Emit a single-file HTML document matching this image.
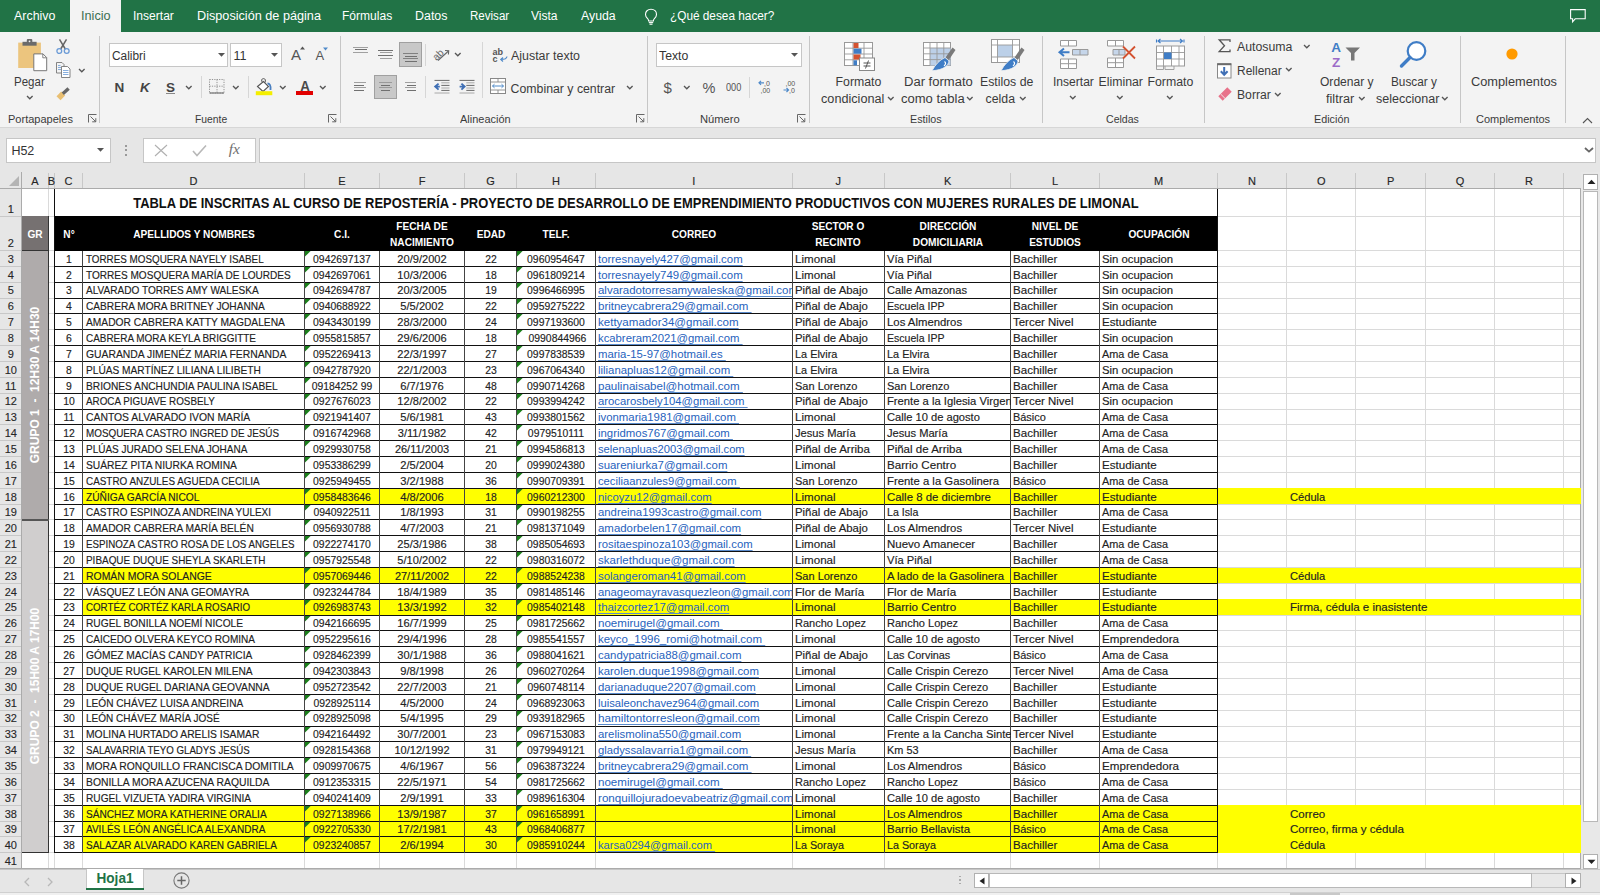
<!DOCTYPE html><html><head><meta charset="utf-8"><style>
*{margin:0;padding:0;box-sizing:border-box}
html,body{width:1600px;height:895px;overflow:hidden;background:#e6e6e6;font-family:"Liberation Sans",sans-serif}
.a{position:absolute}
.t{position:absolute;white-space:pre;line-height:20px;height:20px;margin-top:-15px}
.c11{font-size:11px;color:#111}
.hb{font-size:11px;font-weight:bold;color:#fff}
.ttl{font-size:14.5px;font-weight:bold;color:#111}
.em{font-size:11px;color:#0563c1;text-decoration:underline;text-underline-offset:2px;text-decoration-thickness:1px}
.hdr{font-size:11.5px;color:#444}
.rw{font-size:11.5px;color:#444}
</style></head><body>
<div style="position:absolute;left:0px;top:0px;width:1600px;height:31.5px;background:#217346;"></div>
<div style="position:absolute;left:70px;top:0px;width:51px;height:31.5px;background:#f3f3f3;"></div>
<div style="position:absolute;white-space:pre;line-height:0;font-size:12.3px;color:#ffffff;font-weight:normal;top:16.14px;left:13.5px;transform:scaleX(1.01);transform-origin:0 0;">Archivo</div>
<div style="position:absolute;white-space:pre;line-height:0;font-size:12.3px;color:#ffffff;font-weight:normal;top:16.14px;left:132.5px;transform:scaleX(0.98);transform-origin:0 0;">Insertar</div>
<div style="position:absolute;white-space:pre;line-height:0;font-size:12.3px;color:#ffffff;font-weight:normal;top:16.14px;left:196.5px;transform:scaleX(1.03);transform-origin:0 0;">Disposición de página</div>
<div style="position:absolute;white-space:pre;line-height:0;font-size:12.3px;color:#ffffff;font-weight:normal;top:16.14px;left:342.2px;transform:scaleX(0.98);transform-origin:0 0;">Fórmulas</div>
<div style="position:absolute;white-space:pre;line-height:0;font-size:12.3px;color:#ffffff;font-weight:normal;top:16.14px;left:414.75px;transform:scaleX(1.01);transform-origin:0 0;">Datos</div>
<div style="position:absolute;white-space:pre;line-height:0;font-size:12.3px;color:#ffffff;font-weight:normal;top:16.14px;left:470px;transform:scaleX(0.94);transform-origin:0 0;">Revisar</div>
<div style="position:absolute;white-space:pre;line-height:0;font-size:12.3px;color:#ffffff;font-weight:normal;top:16.14px;left:531.4px;transform:scaleX(0.98);transform-origin:0 0;">Vista</div>
<div style="position:absolute;white-space:pre;line-height:0;font-size:12.3px;color:#ffffff;font-weight:normal;top:16.14px;left:581px;transform:scaleX(1.0);transform-origin:0 0;">Ayuda</div>
<div style="position:absolute;white-space:pre;line-height:0;font-size:12.3px;color:#ffffff;font-weight:normal;top:16.14px;left:670px;transform:scaleX(0.96);transform-origin:0 0;">¿Qué desea hacer?</div>
<div style="position:absolute;white-space:pre;line-height:0;font-size:12.3px;color:#3d6f52;font-weight:normal;top:16.14px;left:80.75px;transform:scaleX(1.03);transform-origin:0 0;">Inicio</div>
<svg style="position:absolute;left:643.5px;top:7.5px;overflow:visible" width="14" height="17" viewBox="0 0 14 17"><path d="M7 1.2 C3.6 1.2 1.5 3.6 1.5 6.4 C1.5 8.6 2.8 9.8 3.9 11 C4.5 11.7 4.6 12.3 4.6 13 L9.4 13 C9.4 12.3 9.5 11.7 10.1 11 C11.2 9.8 12.5 8.6 12.5 6.4 C12.5 3.6 10.4 1.2 7 1.2 Z" fill="none" stroke="#fff" stroke-width="1.1"/><line x1="4.8" y1="14.6" x2="9.2" y2="14.6" stroke="#fff" stroke-width="1.1"/><line x1="5.5" y1="16.2" x2="8.5" y2="16.2" stroke="#fff" stroke-width="1.1"/></svg>
<svg style="position:absolute;left:1570px;top:9px;overflow:visible" width="16" height="14" viewBox="0 0 16 14"><path d="M0.6 0.6 H15.2 V9.8 H5.2 L2.6 12.8 V9.8 H0.6 Z" fill="none" stroke="#fff" stroke-width="1.1"/></svg>
<div style="position:absolute;left:0px;top:31.5px;width:1600px;height:95.5px;background:#f3f3f3;"></div>
<div style="position:absolute;left:0px;top:127px;width:1600px;height:1px;background:#d6d6d6;"></div>
<div style="position:absolute;left:99.25px;top:36px;width:1px;height:86.5px;background:#c6c6c6;"></div>
<div style="position:absolute;left:339.5px;top:36px;width:1px;height:86.5px;background:#c6c6c6;"></div>
<div style="position:absolute;left:647px;top:36px;width:1px;height:86.5px;background:#c6c6c6;"></div>
<div style="position:absolute;left:809.1px;top:36px;width:1px;height:86.5px;background:#c6c6c6;"></div>
<div style="position:absolute;left:1042px;top:36px;width:1px;height:86.5px;background:#c6c6c6;"></div>
<div style="position:absolute;left:1203.9px;top:36px;width:1px;height:86.5px;background:#c6c6c6;"></div>
<div style="position:absolute;left:1460.1px;top:36px;width:1px;height:86.5px;background:#c6c6c6;"></div>
<div style="position:absolute;left:1565px;top:36px;width:1px;height:86.5px;background:#c6c6c6;"></div>
<div style="position:absolute;left:201px;top:76px;width:1px;height:22px;background:#d6d6d6;"></div>
<div style="position:absolute;left:248px;top:76px;width:1px;height:22px;background:#d6d6d6;"></div>
<div style="position:absolute;left:425.1px;top:44px;width:1px;height:22px;background:#d6d6d6;"></div>
<div style="position:absolute;left:425.1px;top:76px;width:1px;height:22px;background:#d6d6d6;"></div>
<div style="position:absolute;left:482px;top:42px;width:1px;height:56px;background:#d6d6d6;"></div>
<div style="position:absolute;left:749.1px;top:77px;width:1px;height:21px;background:#d6d6d6;"></div>
<div style="position:absolute;white-space:pre;line-height:0;font-size:11.2px;color:#3b3b3b;font-weight:normal;top:118.92px;left:8.25px;transform:scaleX(0.985);transform-origin:0 0;">Portapapeles</div>
<div style="position:absolute;white-space:pre;line-height:0;font-size:11.2px;color:#3b3b3b;font-weight:normal;top:118.92px;left:195px;transform:scaleX(0.925);transform-origin:0 0;">Fuente</div>
<div style="position:absolute;white-space:pre;line-height:0;font-size:11.2px;color:#3b3b3b;font-weight:normal;top:118.92px;left:460px;transform:scaleX(0.98);transform-origin:0 0;">Alineación</div>
<div style="position:absolute;white-space:pre;line-height:0;font-size:11.2px;color:#3b3b3b;font-weight:normal;top:118.92px;left:700px;transform:scaleX(1.0);transform-origin:0 0;">Número</div>
<div style="position:absolute;white-space:pre;line-height:0;font-size:11.2px;color:#3b3b3b;font-weight:normal;top:118.92px;left:910px;transform:scaleX(0.96);transform-origin:0 0;">Estilos</div>
<div style="position:absolute;white-space:pre;line-height:0;font-size:11.2px;color:#3b3b3b;font-weight:normal;top:118.92px;left:1106.25px;transform:scaleX(0.945);transform-origin:0 0;">Celdas</div>
<div style="position:absolute;white-space:pre;line-height:0;font-size:11.2px;color:#3b3b3b;font-weight:normal;top:118.92px;left:1313.75px;transform:scaleX(0.965);transform-origin:0 0;">Edición</div>
<div style="position:absolute;white-space:pre;line-height:0;font-size:11.2px;color:#3b3b3b;font-weight:normal;top:118.92px;left:1475.5px;transform:scaleX(0.985);transform-origin:0 0;">Complementos</div>
<svg style="position:absolute;left:87.5px;top:114px;overflow:visible" width="9" height="9" viewBox="0 0 9 9"><path d="M0.5 8.5 V0.5 H8.5" fill="none" stroke="#666" stroke-width="1"/><path d="M2.5 2.5 L7.8 7.8 M4.2 7.8 H7.8 V4.2" fill="none" stroke="#666" stroke-width="1"/></svg>
<svg style="position:absolute;left:328px;top:114px;overflow:visible" width="9" height="9" viewBox="0 0 9 9"><path d="M0.5 8.5 V0.5 H8.5" fill="none" stroke="#666" stroke-width="1"/><path d="M2.5 2.5 L7.8 7.8 M4.2 7.8 H7.8 V4.2" fill="none" stroke="#666" stroke-width="1"/></svg>
<svg style="position:absolute;left:635.6px;top:114px;overflow:visible" width="9" height="9" viewBox="0 0 9 9"><path d="M0.5 8.5 V0.5 H8.5" fill="none" stroke="#666" stroke-width="1"/><path d="M2.5 2.5 L7.8 7.8 M4.2 7.8 H7.8 V4.2" fill="none" stroke="#666" stroke-width="1"/></svg>
<svg style="position:absolute;left:797px;top:114px;overflow:visible" width="9" height="9" viewBox="0 0 9 9"><path d="M0.5 8.5 V0.5 H8.5" fill="none" stroke="#666" stroke-width="1"/><path d="M2.5 2.5 L7.8 7.8 M4.2 7.8 H7.8 V4.2" fill="none" stroke="#666" stroke-width="1"/></svg>
<svg style="position:absolute;left:18px;top:39px;overflow:visible" width="30" height="32" viewBox="0 0 30 32"><rect x="0.2" y="3.6" width="22.7" height="25.4" fill="#ecc57e"/><rect x="4.5" y="2.8" width="14.1" height="3.9" fill="#6b6b6b"/><rect x="8.8" y="0" width="5.5" height="3.8" rx="1" fill="#6b6b6b"/><circle cx="11.55" cy="2.3" r="0.9" fill="#f3f3f3"/><path d="M15.8 14.9 H25 L28.7 18.6 V31.7 H15.8 Z" fill="#fff" stroke="#777" stroke-width="1"/><path d="M24.8 14.9 V18.8 H28.7" fill="none" stroke="#777" stroke-width="0.9"/></svg>
<div style="position:absolute;white-space:pre;line-height:0;font-size:12px;color:#3b3b3b;font-weight:normal;top:82.34px;left:14.4px;transform:scaleX(0.96);transform-origin:0 0;">Pegar</div>
<svg style="position:absolute;left:25.6px;top:95.1px;overflow:visible" width="7.6" height="4.8" viewBox="0 0 7.6 4.8"><polyline points="1,1 3.8,3.8 6.6,1" fill="none" stroke="#555" stroke-width="1.3"/></svg>
<svg style="position:absolute;left:56px;top:38.5px;overflow:visible" width="14" height="15" viewBox="0 0 14 15"><line x1="3.5" y1="0.3" x2="9.3" y2="10" stroke="#666" stroke-width="1.5"/><line x1="10.5" y1="0.3" x2="4.7" y2="10" stroke="#666" stroke-width="1.5"/><circle cx="3.3" cy="12" r="2.4" fill="none" stroke="#6a9ad6" stroke-width="1.3"/><circle cx="10.7" cy="12" r="2.4" fill="none" stroke="#6a9ad6" stroke-width="1.3"/></svg>
<svg style="position:absolute;left:56px;top:62px;overflow:visible" width="15" height="16" viewBox="0 0 15 16"><path d="M0.5 0.5 H6 L8 2.5 V11 H0.5 Z" fill="#f3f3f3" stroke="#777" stroke-width="0.9"/><path d="M2 3.5 H4.5 M2 5.5 H5 M2 7.5 H5" stroke="#6a9ad6" stroke-width="0.8"/><path d="M5.5 4.5 H11.5 L14 7 V15.5 H5.5 Z" fill="#fff" stroke="#777" stroke-width="0.9"/><path d="M7 8.5 H12.5 M7 10.5 H12.5 M7 12.5 H12.5" stroke="#6a9ad6" stroke-width="0.8"/></svg>
<svg style="position:absolute;left:78.2px;top:67.6px;overflow:visible" width="7.6" height="4.8" viewBox="0 0 7.6 4.8"><polyline points="1,1 3.8,3.8 6.6,1" fill="none" stroke="#555" stroke-width="1.3"/></svg>
<svg style="position:absolute;left:56px;top:88px;overflow:visible" width="15" height="13" viewBox="0 0 15 13"><path d="M0.5 8.2 L5.2 3.5 L9.2 7.5 L4.5 12.2 Z" fill="#e9bf72"/><line x1="6.8" y1="5.8" x2="12.6" y2="0.6" stroke="#666" stroke-width="3.4"/></svg>
<div style="position:absolute;left:108.5px;top:42.5px;width:119.9px;height:24px;background:#fff;border:1px solid #c6c6c6"></div>
<div style="position:absolute;white-space:pre;line-height:0;font-size:12.5px;color:#333;font-weight:normal;top:55.77px;left:111.5px;transform:scaleX(0.95);transform-origin:0 0;">Calibri</div>
<svg style="position:absolute;left:217.5px;top:52.5px;overflow:visible" width="8" height="5" viewBox="0 0 8 5"><polygon points="0,0 7,0 3.5,3.8" fill="#555"/></svg>
<div style="position:absolute;left:230.4px;top:42.5px;width:51.2px;height:24px;background:#fff;border:1px solid #c6c6c6"></div>
<div style="position:absolute;white-space:pre;line-height:0;font-size:12.5px;color:#333;font-weight:normal;top:55.77px;left:233.5px;transform:scaleX(1.0);transform-origin:0 0;">11</div>
<svg style="position:absolute;left:271px;top:52.5px;overflow:visible" width="8" height="5" viewBox="0 0 8 5"><polygon points="0,0 7,0 3.5,3.8" fill="#555"/></svg>
<div style="position:absolute;white-space:pre;line-height:0;font-size:15px;color:#555;font-weight:normal;top:55.1px;left:291px;transform:scaleX(1.0);transform-origin:0 0;">A</div>
<svg style="position:absolute;left:299.5px;top:46px;overflow:visible" width="6" height="4" viewBox="0 0 6 4"><polygon points="0,3.5 5,3.5 2.5,0.5" fill="#555"/></svg>
<div style="position:absolute;white-space:pre;line-height:0;font-size:13px;color:#555;font-weight:normal;top:55.8px;left:315.6px;transform:scaleX(1.0);transform-origin:0 0;">A</div>
<svg style="position:absolute;left:322.5px;top:47px;overflow:visible" width="6" height="4" viewBox="0 0 6 4"><polygon points="0,0.5 5,0.5 2.5,3.5" fill="#4f8ac9"/></svg>
<div style="position:absolute;white-space:pre;line-height:0;font-size:13.5px;color:#444;font-weight:bold;top:88.22px;left:114.4px;transform:scaleX(1.0);transform-origin:0 0;">N</div>
<div style="position:absolute;white-space:pre;line-height:0;font-size:13.5px;color:#444;font-weight:bold;top:88.22px;left:140px;transform:scaleX(1.0);transform-origin:0 0;font-style:italic">K</div>
<div style="position:absolute;white-space:pre;line-height:0;font-size:13.5px;color:#444;font-weight:bold;top:88.22px;left:166px;transform:scaleX(1.0);transform-origin:0 0;">S</div>
<div style="position:absolute;left:166px;top:93.2px;width:8.5px;height:1px;background:#888;"></div>
<svg style="position:absolute;left:184.95px;top:84.6px;overflow:visible" width="7.6" height="4.8" viewBox="0 0 7.6 4.8"><polyline points="1,1 3.8,3.8 6.6,1" fill="none" stroke="#555" stroke-width="1.3"/></svg>
<svg style="position:absolute;left:208.5px;top:78.5px;overflow:visible" width="16" height="15" viewBox="0 0 16 15"><path d="M0.5 0.5 H15 V14 H0.5 Z M8 0.5 V14 M0.5 7.2 H15" fill="none" stroke="#888" stroke-width="0.9" stroke-dasharray="1.2 1.2"/><line x1="0.5" y1="14" x2="15" y2="14" stroke="#777" stroke-width="1.2"/></svg>
<svg style="position:absolute;left:231.8px;top:84.6px;overflow:visible" width="7.6" height="4.8" viewBox="0 0 7.6 4.8"><polyline points="1,1 3.8,3.8 6.6,1" fill="none" stroke="#555" stroke-width="1.3"/></svg>
<svg style="position:absolute;left:255px;top:78px;overflow:visible" width="18" height="18" viewBox="0 0 18 18"><path d="M2.5 8.5 L8.5 3.5 L13.5 8.5 L8 13.5 Z" fill="#fff" stroke="#555" stroke-width="1.1"/><path d="M7.5 4.5 C6 2.5 6.5 0.6 8.5 0.6 C10.5 0.6 10.8 2.5 10 4.5" fill="none" stroke="#555" stroke-width="1"/><path d="M12.5 5.5 C14.5 5.5 16 7 15.5 12" fill="none" stroke="#4a7fc0" stroke-width="1.8"/><rect x="0.8" y="13.2" width="16.5" height="4" fill="#f4ee00"/></svg>
<svg style="position:absolute;left:278.7px;top:84.6px;overflow:visible" width="7.6" height="4.8" viewBox="0 0 7.6 4.8"><polyline points="1,1 3.8,3.8 6.6,1" fill="none" stroke="#555" stroke-width="1.3"/></svg>
<div style="position:absolute;white-space:pre;line-height:0;font-size:14px;color:#4a4a4a;font-weight:bold;top:85.65px;left:-695.4px;width:2000px;text-align:center;transform:scaleX(0.95);transform-origin:50% 0;">A</div>
<div style="position:absolute;left:296px;top:91px;width:17px;height:4px;background:#e10000;"></div>
<svg style="position:absolute;left:319.2px;top:84.6px;overflow:visible" width="7.6" height="4.8" viewBox="0 0 7.6 4.8"><polyline points="1,1 3.8,3.8 6.6,1" fill="none" stroke="#555" stroke-width="1.3"/></svg>
<div style="position:absolute;left:353px;top:46.5px;width:15px;height:1px;background:#a0a0a0;"></div>
<div style="position:absolute;left:354.5px;top:49px;width:12px;height:1px;background:#707070;"></div>
<div style="position:absolute;left:353px;top:51.8px;width:15px;height:1px;background:#a0a0a0;"></div>
<div style="position:absolute;left:378px;top:49.9px;width:15px;height:1px;background:#707070;"></div>
<div style="position:absolute;left:380px;top:52.4px;width:11.5px;height:1px;background:#a0a0a0;"></div>
<div style="position:absolute;left:378px;top:54.9px;width:15px;height:1px;background:#707070;"></div>
<div style="position:absolute;left:380px;top:57.5px;width:11.5px;height:1px;background:#a0a0a0;"></div>
<div style="position:absolute;left:399px;top:42.3px;width:23px;height:24.7px;background:#c8c8c8;border:1px solid #a0a0a0"></div>
<div style="position:absolute;left:403px;top:53px;width:15px;height:1px;background:#808080;"></div>
<div style="position:absolute;left:404.5px;top:55.7px;width:12px;height:1px;background:#707070;"></div>
<div style="position:absolute;left:403px;top:58.2px;width:15px;height:1px;background:#808080;"></div>
<div style="position:absolute;left:404.5px;top:60.9px;width:12px;height:1px;background:#707070;"></div>
<svg style="position:absolute;left:433px;top:47px;overflow:visible" width="17" height="14" viewBox="0 0 17 14"><text x="-1" y="11" font-size="10" fill="#666" transform="rotate(-45 5 7)" font-family="Liberation Sans">ab</text><line x1="5" y1="13.5" x2="15.5" y2="4" stroke="#666" stroke-width="1.1"/><polyline points="12,3.5 15.7,3.8 15.4,7.5" fill="none" stroke="#666" stroke-width="1.1"/></svg>
<svg style="position:absolute;left:453.7px;top:51.6px;overflow:visible" width="7.6" height="4.8" viewBox="0 0 7.6 4.8"><polyline points="1,1 3.8,3.8 6.6,1" fill="none" stroke="#555" stroke-width="1.3"/></svg>
<div style="position:absolute;left:354px;top:82.3px;width:12px;height:1px;background:#a0a0a0;"></div>
<div style="position:absolute;left:354px;top:84.9px;width:9.5px;height:1px;background:#707070;"></div>
<div style="position:absolute;left:354px;top:87.4px;width:12px;height:1px;background:#a0a0a0;"></div>
<div style="position:absolute;left:354px;top:89.9px;width:9.5px;height:1px;background:#707070;"></div>
<div style="position:absolute;left:374px;top:75px;width:23px;height:23.75px;background:#c8c8c8;border:1px solid #a0a0a0"></div>
<div style="position:absolute;left:379px;top:82.3px;width:13px;height:1px;background:#9a9a9a;"></div>
<div style="position:absolute;left:381px;top:84.9px;width:9px;height:1px;background:#707070;"></div>
<div style="position:absolute;left:379px;top:87.4px;width:13px;height:1px;background:#9a9a9a;"></div>
<div style="position:absolute;left:381px;top:89.9px;width:9px;height:1px;background:#707070;"></div>
<div style="position:absolute;left:405px;top:82.3px;width:11px;height:1px;background:#a0a0a0;"></div>
<div style="position:absolute;left:407px;top:84.9px;width:9px;height:1px;background:#707070;"></div>
<div style="position:absolute;left:405px;top:87.4px;width:11px;height:1px;background:#a0a0a0;"></div>
<div style="position:absolute;left:407px;top:89.9px;width:9px;height:1px;background:#707070;"></div>
<svg style="position:absolute;left:433.5px;top:80px;overflow:visible" width="16" height="14" viewBox="0 0 16 14"><path d="M0.5 0.4 H15.5" stroke="#6a6a6a" stroke-width="1"/><path d="M7.3 2.8 H15.5 M7.3 8 H15.5" stroke="#a8a8a8" stroke-width="1"/><path d="M7.3 5.4 H15.5 M7.3 10.4 H15.5" stroke="#6a6a6a" stroke-width="1"/><path d="M0.5 13 H15.5" stroke="#a8a8a8" stroke-width="1"/><path d="M5.8 6.6 H2.5 M4.6 3.6 L1.2 6.6 L4.6 9.6" fill="none" stroke="#3f6fb5" stroke-width="1.9"/></svg>
<svg style="position:absolute;left:458.75px;top:80px;overflow:visible" width="16" height="14" viewBox="0 0 16 14"><path d="M0.5 0.4 H15.5" stroke="#6a6a6a" stroke-width="1"/><path d="M7.3 2.8 H15.5 M7.3 8 H15.5" stroke="#a8a8a8" stroke-width="1"/><path d="M7.3 5.4 H15.5 M7.3 10.4 H15.5" stroke="#6a6a6a" stroke-width="1"/><path d="M0.5 13 H15.5" stroke="#a8a8a8" stroke-width="1"/><path d="M0.6 6.6 H4.2 M2.4 3.6 L5.6 6.6 L2.4 9.6" fill="none" stroke="#3f6fb5" stroke-width="1.9"/></svg>
<svg style="position:absolute;left:492.5px;top:47.5px;overflow:visible" width="15" height="14" viewBox="0 0 15 14"><text x="-0.5" y="7" font-size="9" font-weight="bold" fill="#555" font-family="Liberation Sans">ab</text><text x="-0.5" y="13.8" font-size="9" font-weight="bold" fill="#555" font-family="Liberation Sans">c</text><path d="M14 8.5 Q13.5 11.5 8 11.5 M10 9.5 L7.8 11.5 L10 13.5" fill="none" stroke="#4f8ac9" stroke-width="1.2"/></svg>
<div style="position:absolute;white-space:pre;line-height:0;font-size:12.3px;color:#3b3b3b;font-weight:normal;top:56.04px;left:511px;transform:scaleX(1.01);transform-origin:0 0;">Ajustar texto</div>
<svg style="position:absolute;left:490px;top:78px;overflow:visible" width="16" height="16" viewBox="0 0 16 16"><rect x="0.5" y="0.5" width="15" height="15" fill="#fff" stroke="#888" stroke-width="1"/><path d="M0.5 4 H15.5 M0.5 12 H15.5 M8 0.5 V4 M8 12 V15.5" stroke="#888" stroke-width="0.9"/><path d="M2.5 8 H13.5 M4.5 6.2 L2.5 8 L4.5 9.8 M11.5 6.2 L13.5 8 L11.5 9.8" fill="none" stroke="#4f8ac9" stroke-width="1"/></svg>
<div style="position:absolute;white-space:pre;line-height:0;font-size:12.3px;color:#3b3b3b;font-weight:normal;top:88.64px;left:510.6px;transform:scaleX(1.0);transform-origin:0 0;">Combinar y centrar</div>
<svg style="position:absolute;left:626.2px;top:84.6px;overflow:visible" width="7.6" height="4.8" viewBox="0 0 7.6 4.8"><polyline points="1,1 3.8,3.8 6.6,1" fill="none" stroke="#555" stroke-width="1.3"/></svg>
<div style="position:absolute;left:656px;top:42.5px;width:145.6px;height:24px;background:#fff;border:1px solid #c6c6c6"></div>
<div style="position:absolute;white-space:pre;line-height:0;font-size:12.5px;color:#333;font-weight:normal;top:55.77px;left:659.4px;transform:scaleX(0.98);transform-origin:0 0;">Texto</div>
<svg style="position:absolute;left:790.5px;top:52.5px;overflow:visible" width="8" height="5" viewBox="0 0 8 5"><polygon points="0,0 7,0 3.5,3.8" fill="#555"/></svg>
<div style="position:absolute;white-space:pre;line-height:0;font-size:15px;color:#555;font-weight:normal;top:88.2px;left:663.5px;transform:scaleX(1.0);transform-origin:0 0;">$</div>
<svg style="position:absolute;left:683.2px;top:84.6px;overflow:visible" width="7.6" height="4.8" viewBox="0 0 7.6 4.8"><polyline points="1,1 3.8,3.8 6.6,1" fill="none" stroke="#555" stroke-width="1.3"/></svg>
<div style="position:absolute;white-space:pre;line-height:0;font-size:14.5px;color:#555;font-weight:normal;top:88.38px;left:702.5px;transform:scaleX(1.0);transform-origin:0 0;">%</div>
<div style="position:absolute;white-space:pre;line-height:0;font-size:10px;color:#555;font-weight:normal;top:88.44px;left:726px;transform:scaleX(0.92);transform-origin:0 0;">000</div>
<svg style="position:absolute;left:758px;top:79px;overflow:visible" width="14" height="15" viewBox="0 0 14 15"><text x="6" y="6.5" font-size="7" fill="#555" font-family="Liberation Sans">,0</text><text x="2.5" y="14" font-size="7" fill="#555" font-family="Liberation Sans">,00</text><path d="M1 3.8 H6 M3 1.8 L1 3.8 L3 5.8" fill="none" stroke="#4f8ac9" stroke-width="1.2"/></svg>
<svg style="position:absolute;left:783px;top:79px;overflow:visible" width="14" height="15" viewBox="0 0 14 15"><text x="2.5" y="6.5" font-size="7" fill="#555" font-family="Liberation Sans">,00</text><text x="6" y="14" font-size="7" fill="#555" font-family="Liberation Sans">,0</text><path d="M0.5 11 H5.5 M3.5 9 L5.5 11 L3.5 13" fill="none" stroke="#4f8ac9" stroke-width="1.2"/></svg>
<svg style="position:absolute;left:844px;top:42px;overflow:visible" width="32" height="29" viewBox="0 0 32 29"><rect x="0.5" y="0.5" width="28" height="23" fill="#fff" stroke="#999" stroke-width="1"/><path d="M0.5 6.2 H28.5 M0.5 12 H28.5 M0.5 17.8 H28.5 M9 0.5 V23.5 M20 0.5 V23.5" stroke="#999" stroke-width="0.9"/><rect x="9.5" y="1" width="5" height="5" fill="#d35230"/><rect x="9.5" y="6.7" width="8" height="5" fill="#3f7dc6"/><rect x="9.5" y="12.5" width="7" height="5" fill="#d35230"/><rect x="9.5" y="18.3" width="3.5" height="5" fill="#3f7dc6"/><rect x="15.5" y="16" width="15" height="12.5" fill="#fff" stroke="#888" stroke-width="1"/><path d="M19.5 21 H26.5 M19.5 24 H26.5 M21.5 26.5 L24.5 18.5" stroke="#555" stroke-width="1"/></svg>
<div style="position:absolute;white-space:pre;line-height:0;font-size:12.3px;color:#3b3b3b;font-weight:normal;top:82.24px;left:835.6px;transform:scaleX(1.0);transform-origin:0 0;">Formato</div>
<div style="position:absolute;white-space:pre;line-height:0;font-size:12.3px;color:#3b3b3b;font-weight:normal;top:99.14px;left:820.6px;transform:scaleX(1.03);transform-origin:0 0;">condicional</div>
<svg style="position:absolute;left:887.2px;top:95.6px;overflow:visible" width="7.6" height="4.8" viewBox="0 0 7.6 4.8"><polyline points="1,1 3.8,3.8 6.6,1" fill="none" stroke="#555" stroke-width="1.3"/></svg>
<svg style="position:absolute;left:923px;top:42px;overflow:visible" width="32" height="29" viewBox="0 0 32 29"><rect x="0.5" y="0.5" width="27" height="23" fill="#fff" stroke="#999" stroke-width="1"/><rect x="7" y="6" width="20.5" height="17.5" fill="#bcd0e8"/><path d="M0.5 6 H27.5 M0.5 11.8 H27.5 M0.5 17.6 H27.5 M7 0.5 V23.5 M14 0.5 V23.5 M20.8 0.5 V23.5" stroke="#999" stroke-width="0.9"/><path d="M29.5 5.5 L32.5 8 L25.8 18 L22.5 15.5 Z" fill="#7a7a7a"/><path d="M22 15.5 L26 18.8 C25.5 24 20.5 27.8 9 28.8 C12 23 16.5 18 22 15.5 Z" fill="#3f7dc6" stroke="#f3f3f3" stroke-width="0.8"/><path d="M21.5 19.5 C23 20.5 23 22.5 21 24" fill="none" stroke="#fff" stroke-width="1.2"/></svg>
<div style="position:absolute;white-space:pre;line-height:0;font-size:12.3px;color:#3b3b3b;font-weight:normal;top:82.24px;left:903.75px;transform:scaleX(1.06);transform-origin:0 0;">Dar formato</div>
<div style="position:absolute;white-space:pre;line-height:0;font-size:12.3px;color:#3b3b3b;font-weight:normal;top:99.14px;left:900.6px;transform:scaleX(1.06);transform-origin:0 0;">como tabla</div>
<svg style="position:absolute;left:966.2px;top:95.6px;overflow:visible" width="7.6" height="4.8" viewBox="0 0 7.6 4.8"><polyline points="1,1 3.8,3.8 6.6,1" fill="none" stroke="#555" stroke-width="1.3"/></svg>
<svg style="position:absolute;left:991px;top:39px;overflow:visible" width="33" height="32" viewBox="0 0 33 32"><rect x="0.5" y="0.5" width="28" height="23" fill="#fff" stroke="#999" stroke-width="1"/><rect x="6.5" y="6" width="15" height="12" fill="#bcd0e8"/><path d="M0.5 6 H28.5 M0.5 18 H28.5 M6.5 0.5 V23.5 M21.5 0.5 V23.5" stroke="#999" stroke-width="0.9"/><path d="M30.5 8.5 L33.5 11 L26.8 21 L23.5 18.5 Z" fill="#7a7a7a"/><path d="M23 18.5 L27 21.8 C26.5 27 21.5 30.8 10 31.8 C13 26 17.5 21 23 18.5 Z" fill="#3f7dc6" stroke="#f3f3f3" stroke-width="0.8"/><path d="M22.5 22.5 C24 23.5 24 25.5 22 27" fill="none" stroke="#fff" stroke-width="1.2"/></svg>
<div style="position:absolute;white-space:pre;line-height:0;font-size:12.3px;color:#3b3b3b;font-weight:normal;top:82.24px;left:980px;transform:scaleX(1.0);transform-origin:0 0;">Estilos de</div>
<div style="position:absolute;white-space:pre;line-height:0;font-size:12.3px;color:#3b3b3b;font-weight:normal;top:99.14px;left:985.6px;transform:scaleX(1.0);transform-origin:0 0;">celda</div>
<svg style="position:absolute;left:1018.7px;top:95.6px;overflow:visible" width="7.6" height="4.8" viewBox="0 0 7.6 4.8"><polyline points="1,1 3.8,3.8 6.6,1" fill="none" stroke="#555" stroke-width="1.3"/></svg>
<svg style="position:absolute;left:1058px;top:40px;overflow:visible" width="31" height="29" viewBox="0 0 31 29"><path d="M2.5 0.5 H18.5 V6 H2.5 Z M10.5 0.5 V6" fill="#fff" stroke="#999" stroke-width="1"/><path d="M14.5 9.5 H30 V15 H14.5 Z M22 9.5 V15" fill="#c6d6ea" stroke="#999" stroke-width="1"/><path d="M2.5 19 H18.5 V28.5 H2.5 Z M10.5 19 V28.5 M2.5 23.7 H18.5" fill="#fff" stroke="#999" stroke-width="1"/><path d="M11.5 12.2 H2 M6 8.5 L1.5 12.2 L6 16" fill="none" stroke="#3f7dc6" stroke-width="2"/></svg>
<div style="position:absolute;white-space:pre;line-height:0;font-size:12.3px;color:#3b3b3b;font-weight:normal;top:82.24px;left:1053px;transform:scaleX(0.98);transform-origin:0 0;">Insertar</div>
<svg style="position:absolute;left:1069.2px;top:95.1px;overflow:visible" width="7.6" height="4.8" viewBox="0 0 7.6 4.8"><polyline points="1,1 3.8,3.8 6.6,1" fill="none" stroke="#555" stroke-width="1.3"/></svg>
<svg style="position:absolute;left:1107px;top:40px;overflow:visible" width="30" height="29" viewBox="0 0 30 29"><path d="M0.5 0.5 H16.5 V6 H0.5 Z M8.5 0.5 V6" fill="#fff" stroke="#999" stroke-width="1"/><path d="M6 9.5 H18 V15 H6 Z M12 9.5 V15" fill="#c6d6ea" stroke="#999" stroke-width="1"/><path d="M0.5 18 H16.5 V27.5 H0.5 Z M8.5 18 V27.5 M0.5 22.7 H16.5" fill="#fff" stroke="#999" stroke-width="1"/><path d="M16 6.5 L28 18.5 M28 6.5 L16 18.5" stroke="#d35230" stroke-width="1.8"/></svg>
<div style="position:absolute;white-space:pre;line-height:0;font-size:12.3px;color:#3b3b3b;font-weight:normal;top:82.24px;left:1098.5px;transform:scaleX(1.0);transform-origin:0 0;">Eliminar</div>
<svg style="position:absolute;left:1115.95px;top:95.1px;overflow:visible" width="7.6" height="4.8" viewBox="0 0 7.6 4.8"><polyline points="1,1 3.8,3.8 6.6,1" fill="none" stroke="#555" stroke-width="1.3"/></svg>
<svg style="position:absolute;left:1156px;top:39px;overflow:visible" width="30" height="31" viewBox="0 0 30 31"><path d="M0.5 0.5 V3.5 M28 0.5 V3.5 M2 2 H26.5 M4.5 0 L2 2 L4.5 4 M24 0 L26.5 2 L24 4" fill="none" stroke="#3f7dc6" stroke-width="1.1"/><rect x="0.5" y="7" width="28" height="20" fill="#fff" stroke="#999" stroke-width="1"/><path d="M0.5 13.5 H28.5 M0.5 20 H28.5 M7.5 7 V27 M15.5 7 V27 M23 7 V27" stroke="#999" stroke-width="0.9"/><rect x="8" y="13.5" width="7.5" height="6.5" fill="#3f7dc6"/><path d="M0.5 27 V30.5 H7.5 V27 M9 27 V30.5 H18 V27" fill="none" stroke="#999" stroke-width="0.9"/></svg>
<div style="position:absolute;white-space:pre;line-height:0;font-size:12.3px;color:#3b3b3b;font-weight:normal;top:82.24px;left:1147.5px;transform:scaleX(1.0);transform-origin:0 0;">Formato</div>
<svg style="position:absolute;left:1166.2px;top:95.1px;overflow:visible" width="7.6" height="4.8" viewBox="0 0 7.6 4.8"><polyline points="1,1 3.8,3.8 6.6,1" fill="none" stroke="#555" stroke-width="1.3"/></svg>
<svg style="position:absolute;left:1218px;top:39.4px;overflow:visible" width="13" height="13.5" viewBox="0 0 13 13.5"><path d="M12 3 V0.8 H1.2 L6.5 6.7 L1.2 12.6 H12 V10.4" fill="none" stroke="#555" stroke-width="1.3"/></svg>
<div style="position:absolute;white-space:pre;line-height:0;font-size:12.3px;color:#3b3b3b;font-weight:normal;top:47.24px;left:1237px;transform:scaleX(1.0);transform-origin:0 0;">Autosuma</div>
<svg style="position:absolute;left:1303.2px;top:43.6px;overflow:visible" width="7.6" height="4.8" viewBox="0 0 7.6 4.8"><polyline points="1,1 3.8,3.8 6.6,1" fill="none" stroke="#555" stroke-width="1.3"/></svg>
<svg style="position:absolute;left:1217px;top:62.5px;overflow:visible" width="14.5" height="15.5" viewBox="0 0 14.5 15.5"><rect x="0.5" y="1" width="13.5" height="14" fill="#fff" stroke="#888" stroke-width="1"/><rect x="0.2" y="0.2" width="14.1" height="2" fill="#6b6b6b"/><path d="M7.2 4 V12 M3.8 8.3 L7.2 11.8 L10.6 8.3" fill="none" stroke="#3f6fb5" stroke-width="2"/></svg>
<div style="position:absolute;white-space:pre;line-height:0;font-size:12.3px;color:#3b3b3b;font-weight:normal;top:71.04px;left:1237px;transform:scaleX(0.975);transform-origin:0 0;">Rellenar</div>
<svg style="position:absolute;left:1284.95px;top:67.35px;overflow:visible" width="7.6" height="4.8" viewBox="0 0 7.6 4.8"><polyline points="1,1 3.8,3.8 6.6,1" fill="none" stroke="#555" stroke-width="1.3"/></svg>
<svg style="position:absolute;left:1218px;top:86.2px;overflow:visible" width="14" height="14" viewBox="0 0 14 14"><path d="M0.3 10.3 L9.3 1.3 L13.7 5.7 L4.7 14.7 Z" fill="#e8728a"/><path d="M2.6 8 L7 12.4" stroke="#f3f3f3" stroke-width="0.9"/></svg>
<div style="position:absolute;white-space:pre;line-height:0;font-size:12.3px;color:#3b3b3b;font-weight:normal;top:95.14px;left:1237px;transform:scaleX(0.99);transform-origin:0 0;">Borrar</div>
<svg style="position:absolute;left:1273.7px;top:91.6px;overflow:visible" width="7.6" height="4.8" viewBox="0 0 7.6 4.8"><polyline points="1,1 3.8,3.8 6.6,1" fill="none" stroke="#555" stroke-width="1.3"/></svg>
<div style="position:absolute;white-space:pre;line-height:0;font-size:13.5px;color:#3f7dc6;font-weight:bold;top:48.22px;left:1331.3px;transform:scaleX(1.0);transform-origin:0 0;">A</div>
<div style="position:absolute;white-space:pre;line-height:0;font-size:13.5px;color:#9c6bc8;font-weight:bold;top:63.22px;left:1332px;transform:scaleX(1.0);transform-origin:0 0;">Z</div>
<svg style="position:absolute;left:1345px;top:47px;overflow:visible" width="15.5" height="14" viewBox="0 0 15.5 14"><path d="M0.5 0.5 H15 L9.5 6 V13.5 H6 V6 Z" fill="#777"/></svg>
<div style="position:absolute;white-space:pre;line-height:0;font-size:12.3px;color:#3b3b3b;font-weight:normal;top:82.24px;left:1319.5px;transform:scaleX(0.98);transform-origin:0 0;">Ordenar y</div>
<div style="position:absolute;white-space:pre;line-height:0;font-size:12.3px;color:#3b3b3b;font-weight:normal;top:99.14px;left:1325.6px;transform:scaleX(1.03);transform-origin:0 0;">filtrar</div>
<svg style="position:absolute;left:1358.2px;top:95.6px;overflow:visible" width="7.6" height="4.8" viewBox="0 0 7.6 4.8"><polyline points="1,1 3.8,3.8 6.6,1" fill="none" stroke="#555" stroke-width="1.3"/></svg>
<svg style="position:absolute;left:1398.5px;top:40px;overflow:visible" width="29" height="29" viewBox="0 0 29 29"><circle cx="17.5" cy="11" r="8.8" fill="#fff" stroke="#3f7dc6" stroke-width="2.2"/><line x1="11" y1="17.5" x2="2.5" y2="26" stroke="#3f7dc6" stroke-width="3.4" stroke-linecap="round"/></svg>
<div style="position:absolute;white-space:pre;line-height:0;font-size:12.3px;color:#3b3b3b;font-weight:normal;top:82.24px;left:1391px;transform:scaleX(0.96);transform-origin:0 0;">Buscar y</div>
<div style="position:absolute;white-space:pre;line-height:0;font-size:12.3px;color:#3b3b3b;font-weight:normal;top:99.14px;left:1376px;transform:scaleX(1.02);transform-origin:0 0;">seleccionar</div>
<svg style="position:absolute;left:1441.2px;top:95.6px;overflow:visible" width="7.6" height="4.8" viewBox="0 0 7.6 4.8"><polyline points="1,1 3.8,3.8 6.6,1" fill="none" stroke="#555" stroke-width="1.3"/></svg>
<svg style="position:absolute;left:1506px;top:47.5px;overflow:visible" width="12" height="12" viewBox="0 0 12 12"><circle cx="6" cy="6" r="5.6" fill="#ff9a00"/></svg>
<div style="position:absolute;white-space:pre;line-height:0;font-size:12.3px;color:#3b3b3b;font-weight:normal;top:82.14px;left:1470.8px;transform:scaleX(1.04);transform-origin:0 0;">Complementos</div>
<svg style="position:absolute;left:1582px;top:117px;overflow:visible" width="11" height="7" viewBox="0 0 11 7"><polyline points="1,6 5.5,1.5 10,6" fill="none" stroke="#555" stroke-width="1.1"/></svg>
<div style="position:absolute;left:0px;top:128px;width:1600px;height:44px;background:#e6e6e6;"></div>
<div style="position:absolute;left:5.6px;top:137.6px;width:105px;height:25px;background:#fff;border:1px solid #c6c6c6"></div>
<div style="position:absolute;white-space:pre;line-height:0;font-size:12.5px;color:#333;font-weight:normal;top:150.57px;left:11.4px;transform:scaleX(1.0);transform-origin:0 0;">H52</div>
<svg style="position:absolute;left:96.5px;top:148px;overflow:visible" width="8" height="5" viewBox="0 0 8 5"><polygon points="0,0 7,0 3.5,3.8" fill="#555"/></svg>
<div style="position:absolute;left:125.4px;top:144.6px;width:2px;height:2px;background:#999;"></div>
<div style="position:absolute;left:125.4px;top:149.1px;width:2px;height:2px;background:#999;"></div>
<div style="position:absolute;left:125.4px;top:153.6px;width:2px;height:2px;background:#999;"></div>
<div style="position:absolute;left:142.6px;top:137.6px;width:113.4px;height:25px;background:#fff;border:1px solid #c6c6c6"></div>
<svg style="position:absolute;left:154px;top:143.5px;overflow:visible" width="14" height="13" viewBox="0 0 14 13"><path d="M1 1 L13 12 M13 1 L1 12" stroke="#b0b0b0" stroke-width="1.1"/></svg>
<svg style="position:absolute;left:191.5px;top:143.5px;overflow:visible" width="15" height="13" viewBox="0 0 15 13"><polyline points="1,7 5,11.5 14,1.5" fill="none" stroke="#b8b8b8" stroke-width="1.6"/></svg>
<div style="position:absolute;white-space:pre;line-height:0;font-size:15.5px;color:#707070;font-weight:normal;top:149.23px;left:228.8px;transform:scaleX(1.0);transform-origin:0 0;font-family:'Liberation Serif';font-style:italic">fx</div>
<div style="position:absolute;left:258.6px;top:137.6px;width:1337.4px;height:25px;background:#fff;border:1px solid #c6c6c6"></div>
<svg style="position:absolute;left:1583.5px;top:147px;overflow:visible" width="10" height="6" viewBox="0 0 10 6"><polyline points="1,1 5,4.6 9,1" fill="none" stroke="#666" stroke-width="1.8"/></svg>
<div class="a" style="left:21.5px;top:188.5px;width:1559px;height:680.15px;background:#ffffff;"></div>
<div class="a" style="left:0px;top:172px;width:1580.5px;height:16.5px;background:#e6e6e6;"></div>
<div class="a" style="left:0px;top:188.5px;width:21.5px;height:680.15px;background:#e6e6e6;"></div>
<svg class="a" style="left:8px;top:175px" width="12" height="12"><polygon points="11,1 11,11 1,11" fill="#b4b4b4"/></svg>
<div class="a" style="left:21.5px;top:215.9px;width:1559px;height:1px;background:#dadada;"></div>
<div class="a" style="left:21.5px;top:250px;width:1559px;height:1px;background:#dadada;"></div>
<div class="a" style="left:21.5px;top:265.85px;width:1559px;height:1px;background:#dadada;"></div>
<div class="a" style="left:21.5px;top:281.7px;width:1559px;height:1px;background:#dadada;"></div>
<div class="a" style="left:21.5px;top:297.55px;width:1559px;height:1px;background:#dadada;"></div>
<div class="a" style="left:21.5px;top:313.4px;width:1559px;height:1px;background:#dadada;"></div>
<div class="a" style="left:21.5px;top:329.25px;width:1559px;height:1px;background:#dadada;"></div>
<div class="a" style="left:21.5px;top:345.1px;width:1559px;height:1px;background:#dadada;"></div>
<div class="a" style="left:21.5px;top:360.95px;width:1559px;height:1px;background:#dadada;"></div>
<div class="a" style="left:21.5px;top:376.8px;width:1559px;height:1px;background:#dadada;"></div>
<div class="a" style="left:21.5px;top:392.65px;width:1559px;height:1px;background:#dadada;"></div>
<div class="a" style="left:21.5px;top:408.5px;width:1559px;height:1px;background:#dadada;"></div>
<div class="a" style="left:21.5px;top:424.35px;width:1559px;height:1px;background:#dadada;"></div>
<div class="a" style="left:21.5px;top:440.2px;width:1559px;height:1px;background:#dadada;"></div>
<div class="a" style="left:21.5px;top:456.05px;width:1559px;height:1px;background:#dadada;"></div>
<div class="a" style="left:21.5px;top:471.9px;width:1559px;height:1px;background:#dadada;"></div>
<div class="a" style="left:21.5px;top:487.75px;width:1559px;height:1px;background:#dadada;"></div>
<div class="a" style="left:21.5px;top:503.6px;width:1559px;height:1px;background:#dadada;"></div>
<div class="a" style="left:21.5px;top:519.45px;width:1559px;height:1px;background:#dadada;"></div>
<div class="a" style="left:21.5px;top:535.3px;width:1559px;height:1px;background:#dadada;"></div>
<div class="a" style="left:21.5px;top:551.15px;width:1559px;height:1px;background:#dadada;"></div>
<div class="a" style="left:21.5px;top:567px;width:1559px;height:1px;background:#dadada;"></div>
<div class="a" style="left:21.5px;top:582.85px;width:1559px;height:1px;background:#dadada;"></div>
<div class="a" style="left:21.5px;top:598.7px;width:1559px;height:1px;background:#dadada;"></div>
<div class="a" style="left:21.5px;top:614.55px;width:1559px;height:1px;background:#dadada;"></div>
<div class="a" style="left:21.5px;top:630.4px;width:1559px;height:1px;background:#dadada;"></div>
<div class="a" style="left:21.5px;top:646.25px;width:1559px;height:1px;background:#dadada;"></div>
<div class="a" style="left:21.5px;top:662.1px;width:1559px;height:1px;background:#dadada;"></div>
<div class="a" style="left:21.5px;top:677.95px;width:1559px;height:1px;background:#dadada;"></div>
<div class="a" style="left:21.5px;top:693.8px;width:1559px;height:1px;background:#dadada;"></div>
<div class="a" style="left:21.5px;top:709.65px;width:1559px;height:1px;background:#dadada;"></div>
<div class="a" style="left:21.5px;top:725.5px;width:1559px;height:1px;background:#dadada;"></div>
<div class="a" style="left:21.5px;top:741.35px;width:1559px;height:1px;background:#dadada;"></div>
<div class="a" style="left:21.5px;top:757.2px;width:1559px;height:1px;background:#dadada;"></div>
<div class="a" style="left:21.5px;top:773.05px;width:1559px;height:1px;background:#dadada;"></div>
<div class="a" style="left:21.5px;top:788.9px;width:1559px;height:1px;background:#dadada;"></div>
<div class="a" style="left:21.5px;top:804.75px;width:1559px;height:1px;background:#dadada;"></div>
<div class="a" style="left:21.5px;top:820.6px;width:1559px;height:1px;background:#dadada;"></div>
<div class="a" style="left:21.5px;top:836.45px;width:1559px;height:1px;background:#dadada;"></div>
<div class="a" style="left:21.5px;top:852.3px;width:1559px;height:1px;background:#dadada;"></div>
<div class="a" style="left:21.5px;top:868.15px;width:1559px;height:1px;background:#dadada;"></div>
<div class="a" style="left:48px;top:188.5px;width:1px;height:680.15px;background:#dadada;"></div>
<div class="a" style="left:53.9px;top:188.5px;width:1px;height:680.15px;background:#dadada;"></div>
<div class="a" style="left:82.25px;top:216.4px;width:1px;height:652.25px;background:#dadada;"></div>
<div class="a" style="left:303.9px;top:216.4px;width:1px;height:652.25px;background:#dadada;"></div>
<div class="a" style="left:378.9px;top:216.4px;width:1px;height:652.25px;background:#dadada;"></div>
<div class="a" style="left:464.1px;top:216.4px;width:1px;height:652.25px;background:#dadada;"></div>
<div class="a" style="left:516px;top:216.4px;width:1px;height:652.25px;background:#dadada;"></div>
<div class="a" style="left:594.9px;top:216.4px;width:1px;height:652.25px;background:#dadada;"></div>
<div class="a" style="left:791.6px;top:216.4px;width:1px;height:652.25px;background:#dadada;"></div>
<div class="a" style="left:884.1px;top:216.4px;width:1px;height:652.25px;background:#dadada;"></div>
<div class="a" style="left:1010.1px;top:216.4px;width:1px;height:652.25px;background:#dadada;"></div>
<div class="a" style="left:1099.1px;top:216.4px;width:1px;height:652.25px;background:#dadada;"></div>
<div class="a" style="left:1217px;top:188.5px;width:1px;height:680.15px;background:#dadada;"></div>
<div class="a" style="left:1286px;top:188.5px;width:1px;height:680.15px;background:#dadada;"></div>
<div class="a" style="left:1355.4px;top:188.5px;width:1px;height:680.15px;background:#dadada;"></div>
<div class="a" style="left:1425.1px;top:188.5px;width:1px;height:680.15px;background:#dadada;"></div>
<div class="a" style="left:1494.1px;top:188.5px;width:1px;height:680.15px;background:#dadada;"></div>
<div class="a" style="left:1563px;top:188.5px;width:1px;height:680.15px;background:#dadada;"></div>
<div class="a" style="left:21px;top:172.8px;width:1px;height:15.7px;background:#c8c8c8;"></div>
<div class="a" style="left:48px;top:172.8px;width:1px;height:15.7px;background:#c8c8c8;"></div>
<div class="a" style="left:53.9px;top:172.8px;width:1px;height:15.7px;background:#c8c8c8;"></div>
<div class="a" style="left:82.25px;top:172.8px;width:1px;height:15.7px;background:#c8c8c8;"></div>
<div class="a" style="left:303.9px;top:172.8px;width:1px;height:15.7px;background:#c8c8c8;"></div>
<div class="a" style="left:378.9px;top:172.8px;width:1px;height:15.7px;background:#c8c8c8;"></div>
<div class="a" style="left:464.1px;top:172.8px;width:1px;height:15.7px;background:#c8c8c8;"></div>
<div class="a" style="left:516px;top:172.8px;width:1px;height:15.7px;background:#c8c8c8;"></div>
<div class="a" style="left:594.9px;top:172.8px;width:1px;height:15.7px;background:#c8c8c8;"></div>
<div class="a" style="left:791.6px;top:172.8px;width:1px;height:15.7px;background:#c8c8c8;"></div>
<div class="a" style="left:884.1px;top:172.8px;width:1px;height:15.7px;background:#c8c8c8;"></div>
<div class="a" style="left:1010.1px;top:172.8px;width:1px;height:15.7px;background:#c8c8c8;"></div>
<div class="a" style="left:1099.1px;top:172.8px;width:1px;height:15.7px;background:#c8c8c8;"></div>
<div class="a" style="left:1217px;top:172.8px;width:1px;height:15.7px;background:#c8c8c8;"></div>
<div class="a" style="left:1286px;top:172.8px;width:1px;height:15.7px;background:#c8c8c8;"></div>
<div class="a" style="left:1355.4px;top:172.8px;width:1px;height:15.7px;background:#c8c8c8;"></div>
<div class="a" style="left:1425.1px;top:172.8px;width:1px;height:15.7px;background:#c8c8c8;"></div>
<div class="a" style="left:1494.1px;top:172.8px;width:1px;height:15.7px;background:#c8c8c8;"></div>
<div class="a" style="left:1563px;top:172.8px;width:1px;height:15.7px;background:#c8c8c8;"></div>
<div class="a" style="left:0px;top:187.5px;width:1580.5px;height:1px;background:#ababab;"></div>
<div class="a" style="left:0px;top:215.9px;width:21.5px;height:1px;background:#c8c8c8;"></div>
<div class="a" style="left:0px;top:250px;width:21.5px;height:1px;background:#c8c8c8;"></div>
<div class="a" style="left:0px;top:265.85px;width:21.5px;height:1px;background:#c8c8c8;"></div>
<div class="a" style="left:0px;top:281.7px;width:21.5px;height:1px;background:#c8c8c8;"></div>
<div class="a" style="left:0px;top:297.55px;width:21.5px;height:1px;background:#c8c8c8;"></div>
<div class="a" style="left:0px;top:313.4px;width:21.5px;height:1px;background:#c8c8c8;"></div>
<div class="a" style="left:0px;top:329.25px;width:21.5px;height:1px;background:#c8c8c8;"></div>
<div class="a" style="left:0px;top:345.1px;width:21.5px;height:1px;background:#c8c8c8;"></div>
<div class="a" style="left:0px;top:360.95px;width:21.5px;height:1px;background:#c8c8c8;"></div>
<div class="a" style="left:0px;top:376.8px;width:21.5px;height:1px;background:#c8c8c8;"></div>
<div class="a" style="left:0px;top:392.65px;width:21.5px;height:1px;background:#c8c8c8;"></div>
<div class="a" style="left:0px;top:408.5px;width:21.5px;height:1px;background:#c8c8c8;"></div>
<div class="a" style="left:0px;top:424.35px;width:21.5px;height:1px;background:#c8c8c8;"></div>
<div class="a" style="left:0px;top:440.2px;width:21.5px;height:1px;background:#c8c8c8;"></div>
<div class="a" style="left:0px;top:456.05px;width:21.5px;height:1px;background:#c8c8c8;"></div>
<div class="a" style="left:0px;top:471.9px;width:21.5px;height:1px;background:#c8c8c8;"></div>
<div class="a" style="left:0px;top:487.75px;width:21.5px;height:1px;background:#c8c8c8;"></div>
<div class="a" style="left:0px;top:503.6px;width:21.5px;height:1px;background:#c8c8c8;"></div>
<div class="a" style="left:0px;top:519.45px;width:21.5px;height:1px;background:#c8c8c8;"></div>
<div class="a" style="left:0px;top:535.3px;width:21.5px;height:1px;background:#c8c8c8;"></div>
<div class="a" style="left:0px;top:551.15px;width:21.5px;height:1px;background:#c8c8c8;"></div>
<div class="a" style="left:0px;top:567px;width:21.5px;height:1px;background:#c8c8c8;"></div>
<div class="a" style="left:0px;top:582.85px;width:21.5px;height:1px;background:#c8c8c8;"></div>
<div class="a" style="left:0px;top:598.7px;width:21.5px;height:1px;background:#c8c8c8;"></div>
<div class="a" style="left:0px;top:614.55px;width:21.5px;height:1px;background:#c8c8c8;"></div>
<div class="a" style="left:0px;top:630.4px;width:21.5px;height:1px;background:#c8c8c8;"></div>
<div class="a" style="left:0px;top:646.25px;width:21.5px;height:1px;background:#c8c8c8;"></div>
<div class="a" style="left:0px;top:662.1px;width:21.5px;height:1px;background:#c8c8c8;"></div>
<div class="a" style="left:0px;top:677.95px;width:21.5px;height:1px;background:#c8c8c8;"></div>
<div class="a" style="left:0px;top:693.8px;width:21.5px;height:1px;background:#c8c8c8;"></div>
<div class="a" style="left:0px;top:709.65px;width:21.5px;height:1px;background:#c8c8c8;"></div>
<div class="a" style="left:0px;top:725.5px;width:21.5px;height:1px;background:#c8c8c8;"></div>
<div class="a" style="left:0px;top:741.35px;width:21.5px;height:1px;background:#c8c8c8;"></div>
<div class="a" style="left:0px;top:757.2px;width:21.5px;height:1px;background:#c8c8c8;"></div>
<div class="a" style="left:0px;top:773.05px;width:21.5px;height:1px;background:#c8c8c8;"></div>
<div class="a" style="left:0px;top:788.9px;width:21.5px;height:1px;background:#c8c8c8;"></div>
<div class="a" style="left:0px;top:804.75px;width:21.5px;height:1px;background:#c8c8c8;"></div>
<div class="a" style="left:0px;top:820.6px;width:21.5px;height:1px;background:#c8c8c8;"></div>
<div class="a" style="left:0px;top:836.45px;width:21.5px;height:1px;background:#c8c8c8;"></div>
<div class="a" style="left:0px;top:852.3px;width:21.5px;height:1px;background:#c8c8c8;"></div>
<div class="a" style="left:0px;top:868.15px;width:21.5px;height:1px;background:#c8c8c8;"></div>
<div class="a" style="left:21px;top:172px;width:1px;height:696.65px;background:#ababab;"></div>
<div class="a" style="left:0px;top:868.15px;width:1580.5px;height:1px;background:#ababab;"></div>
<div class="a" style="left:1580px;top:188.5px;width:1px;height:680.15px;background:#ababab;"></div>
<div style="position:absolute;white-space:pre;line-height:0;font-size:11px;color:#262626;font-weight:normal;top:180.69px;left:-965px;width:2000px;text-align:center;transform:scaleX(1.0);transform-origin:50% 0;-webkit-text-stroke:0.15px #262626;">A</div>
<div style="position:absolute;white-space:pre;line-height:0;font-size:11px;color:#262626;font-weight:normal;top:180.69px;left:-948.55px;width:2000px;text-align:center;transform:scaleX(1.0);transform-origin:50% 0;-webkit-text-stroke:0.15px #262626;">B</div>
<div style="position:absolute;white-space:pre;line-height:0;font-size:11px;color:#262626;font-weight:normal;top:180.69px;left:-931.42px;width:2000px;text-align:center;transform:scaleX(1.0);transform-origin:50% 0;-webkit-text-stroke:0.15px #262626;">C</div>
<div style="position:absolute;white-space:pre;line-height:0;font-size:11px;color:#262626;font-weight:normal;top:180.69px;left:-806.42px;width:2000px;text-align:center;transform:scaleX(1.0);transform-origin:50% 0;-webkit-text-stroke:0.15px #262626;">D</div>
<div style="position:absolute;white-space:pre;line-height:0;font-size:11px;color:#262626;font-weight:normal;top:180.69px;left:-658.1px;width:2000px;text-align:center;transform:scaleX(1.0);transform-origin:50% 0;-webkit-text-stroke:0.15px #262626;">E</div>
<div style="position:absolute;white-space:pre;line-height:0;font-size:11px;color:#262626;font-weight:normal;top:180.69px;left:-578px;width:2000px;text-align:center;transform:scaleX(1.0);transform-origin:50% 0;-webkit-text-stroke:0.15px #262626;">F</div>
<div style="position:absolute;white-space:pre;line-height:0;font-size:11px;color:#262626;font-weight:normal;top:180.69px;left:-509.45px;width:2000px;text-align:center;transform:scaleX(1.0);transform-origin:50% 0;-webkit-text-stroke:0.15px #262626;">G</div>
<div style="position:absolute;white-space:pre;line-height:0;font-size:11px;color:#262626;font-weight:normal;top:180.69px;left:-444.05px;width:2000px;text-align:center;transform:scaleX(1.0);transform-origin:50% 0;-webkit-text-stroke:0.15px #262626;">H</div>
<div style="position:absolute;white-space:pre;line-height:0;font-size:11px;color:#262626;font-weight:normal;top:180.69px;left:-306.25px;width:2000px;text-align:center;transform:scaleX(1.0);transform-origin:50% 0;-webkit-text-stroke:0.15px #262626;">I</div>
<div style="position:absolute;white-space:pre;line-height:0;font-size:11px;color:#262626;font-weight:normal;top:180.69px;left:-161.65px;width:2000px;text-align:center;transform:scaleX(1.0);transform-origin:50% 0;-webkit-text-stroke:0.15px #262626;">J</div>
<div style="position:absolute;white-space:pre;line-height:0;font-size:11px;color:#262626;font-weight:normal;top:180.69px;left:-52.4px;width:2000px;text-align:center;transform:scaleX(1.0);transform-origin:50% 0;-webkit-text-stroke:0.15px #262626;">K</div>
<div style="position:absolute;white-space:pre;line-height:0;font-size:11px;color:#262626;font-weight:normal;top:180.69px;left:55.1px;width:2000px;text-align:center;transform:scaleX(1.0);transform-origin:50% 0;-webkit-text-stroke:0.15px #262626;">L</div>
<div style="position:absolute;white-space:pre;line-height:0;font-size:11px;color:#262626;font-weight:normal;top:180.69px;left:158.55px;width:2000px;text-align:center;transform:scaleX(1.0);transform-origin:50% 0;-webkit-text-stroke:0.15px #262626;">M</div>
<div style="position:absolute;white-space:pre;line-height:0;font-size:11px;color:#262626;font-weight:normal;top:180.69px;left:252px;width:2000px;text-align:center;transform:scaleX(1.0);transform-origin:50% 0;-webkit-text-stroke:0.15px #262626;">N</div>
<div style="position:absolute;white-space:pre;line-height:0;font-size:11px;color:#262626;font-weight:normal;top:180.69px;left:321.2px;width:2000px;text-align:center;transform:scaleX(1.0);transform-origin:50% 0;-webkit-text-stroke:0.15px #262626;">O</div>
<div style="position:absolute;white-space:pre;line-height:0;font-size:11px;color:#262626;font-weight:normal;top:180.69px;left:390.75px;width:2000px;text-align:center;transform:scaleX(1.0);transform-origin:50% 0;-webkit-text-stroke:0.15px #262626;">P</div>
<div style="position:absolute;white-space:pre;line-height:0;font-size:11px;color:#262626;font-weight:normal;top:180.69px;left:460.1px;width:2000px;text-align:center;transform:scaleX(1.0);transform-origin:50% 0;-webkit-text-stroke:0.15px #262626;">Q</div>
<div style="position:absolute;white-space:pre;line-height:0;font-size:11px;color:#262626;font-weight:normal;top:180.69px;left:529.05px;width:2000px;text-align:center;transform:scaleX(1.0);transform-origin:50% 0;-webkit-text-stroke:0.15px #262626;">R</div>
<div style="position:absolute;white-space:pre;line-height:0;font-size:11px;color:#262626;font-weight:normal;top:208.84px;left:-989.25px;width:2000px;text-align:center;transform:scaleX(1.0);transform-origin:50% 0;-webkit-text-stroke:0.12px #262626;">1</div>
<div style="position:absolute;white-space:pre;line-height:0;font-size:11px;color:#262626;font-weight:normal;top:242.94px;left:-989.25px;width:2000px;text-align:center;transform:scaleX(1.0);transform-origin:50% 0;-webkit-text-stroke:0.12px #262626;">2</div>
<div style="position:absolute;white-space:pre;line-height:0;font-size:11px;color:#262626;font-weight:normal;top:258.79px;left:-989.25px;width:2000px;text-align:center;transform:scaleX(1.0);transform-origin:50% 0;-webkit-text-stroke:0.12px #262626;">3</div>
<div style="position:absolute;white-space:pre;line-height:0;font-size:11px;color:#262626;font-weight:normal;top:274.64px;left:-989.25px;width:2000px;text-align:center;transform:scaleX(1.0);transform-origin:50% 0;-webkit-text-stroke:0.12px #262626;">4</div>
<div style="position:absolute;white-space:pre;line-height:0;font-size:11px;color:#262626;font-weight:normal;top:290.49px;left:-989.25px;width:2000px;text-align:center;transform:scaleX(1.0);transform-origin:50% 0;-webkit-text-stroke:0.12px #262626;">5</div>
<div style="position:absolute;white-space:pre;line-height:0;font-size:11px;color:#262626;font-weight:normal;top:306.34px;left:-989.25px;width:2000px;text-align:center;transform:scaleX(1.0);transform-origin:50% 0;-webkit-text-stroke:0.12px #262626;">6</div>
<div style="position:absolute;white-space:pre;line-height:0;font-size:11px;color:#262626;font-weight:normal;top:322.19px;left:-989.25px;width:2000px;text-align:center;transform:scaleX(1.0);transform-origin:50% 0;-webkit-text-stroke:0.12px #262626;">7</div>
<div style="position:absolute;white-space:pre;line-height:0;font-size:11px;color:#262626;font-weight:normal;top:338.04px;left:-989.25px;width:2000px;text-align:center;transform:scaleX(1.0);transform-origin:50% 0;-webkit-text-stroke:0.12px #262626;">8</div>
<div style="position:absolute;white-space:pre;line-height:0;font-size:11px;color:#262626;font-weight:normal;top:353.89px;left:-989.25px;width:2000px;text-align:center;transform:scaleX(1.0);transform-origin:50% 0;-webkit-text-stroke:0.12px #262626;">9</div>
<div style="position:absolute;white-space:pre;line-height:0;font-size:11px;color:#262626;font-weight:normal;top:369.74px;left:-989.25px;width:2000px;text-align:center;transform:scaleX(1.0);transform-origin:50% 0;-webkit-text-stroke:0.12px #262626;">10</div>
<div style="position:absolute;white-space:pre;line-height:0;font-size:11px;color:#262626;font-weight:normal;top:385.59px;left:-989.25px;width:2000px;text-align:center;transform:scaleX(1.0);transform-origin:50% 0;-webkit-text-stroke:0.12px #262626;">11</div>
<div style="position:absolute;white-space:pre;line-height:0;font-size:11px;color:#262626;font-weight:normal;top:401.44px;left:-989.25px;width:2000px;text-align:center;transform:scaleX(1.0);transform-origin:50% 0;-webkit-text-stroke:0.12px #262626;">12</div>
<div style="position:absolute;white-space:pre;line-height:0;font-size:11px;color:#262626;font-weight:normal;top:417.29px;left:-989.25px;width:2000px;text-align:center;transform:scaleX(1.0);transform-origin:50% 0;-webkit-text-stroke:0.12px #262626;">13</div>
<div style="position:absolute;white-space:pre;line-height:0;font-size:11px;color:#262626;font-weight:normal;top:433.14px;left:-989.25px;width:2000px;text-align:center;transform:scaleX(1.0);transform-origin:50% 0;-webkit-text-stroke:0.12px #262626;">14</div>
<div style="position:absolute;white-space:pre;line-height:0;font-size:11px;color:#262626;font-weight:normal;top:448.99px;left:-989.25px;width:2000px;text-align:center;transform:scaleX(1.0);transform-origin:50% 0;-webkit-text-stroke:0.12px #262626;">15</div>
<div style="position:absolute;white-space:pre;line-height:0;font-size:11px;color:#262626;font-weight:normal;top:464.84px;left:-989.25px;width:2000px;text-align:center;transform:scaleX(1.0);transform-origin:50% 0;-webkit-text-stroke:0.12px #262626;">16</div>
<div style="position:absolute;white-space:pre;line-height:0;font-size:11px;color:#262626;font-weight:normal;top:480.69px;left:-989.25px;width:2000px;text-align:center;transform:scaleX(1.0);transform-origin:50% 0;-webkit-text-stroke:0.12px #262626;">17</div>
<div style="position:absolute;white-space:pre;line-height:0;font-size:11px;color:#262626;font-weight:normal;top:496.54px;left:-989.25px;width:2000px;text-align:center;transform:scaleX(1.0);transform-origin:50% 0;-webkit-text-stroke:0.12px #262626;">18</div>
<div style="position:absolute;white-space:pre;line-height:0;font-size:11px;color:#262626;font-weight:normal;top:512.39px;left:-989.25px;width:2000px;text-align:center;transform:scaleX(1.0);transform-origin:50% 0;-webkit-text-stroke:0.12px #262626;">19</div>
<div style="position:absolute;white-space:pre;line-height:0;font-size:11px;color:#262626;font-weight:normal;top:528.24px;left:-989.25px;width:2000px;text-align:center;transform:scaleX(1.0);transform-origin:50% 0;-webkit-text-stroke:0.12px #262626;">20</div>
<div style="position:absolute;white-space:pre;line-height:0;font-size:11px;color:#262626;font-weight:normal;top:544.09px;left:-989.25px;width:2000px;text-align:center;transform:scaleX(1.0);transform-origin:50% 0;-webkit-text-stroke:0.12px #262626;">21</div>
<div style="position:absolute;white-space:pre;line-height:0;font-size:11px;color:#262626;font-weight:normal;top:559.94px;left:-989.25px;width:2000px;text-align:center;transform:scaleX(1.0);transform-origin:50% 0;-webkit-text-stroke:0.12px #262626;">22</div>
<div style="position:absolute;white-space:pre;line-height:0;font-size:11px;color:#262626;font-weight:normal;top:575.79px;left:-989.25px;width:2000px;text-align:center;transform:scaleX(1.0);transform-origin:50% 0;-webkit-text-stroke:0.12px #262626;">23</div>
<div style="position:absolute;white-space:pre;line-height:0;font-size:11px;color:#262626;font-weight:normal;top:591.64px;left:-989.25px;width:2000px;text-align:center;transform:scaleX(1.0);transform-origin:50% 0;-webkit-text-stroke:0.12px #262626;">24</div>
<div style="position:absolute;white-space:pre;line-height:0;font-size:11px;color:#262626;font-weight:normal;top:607.49px;left:-989.25px;width:2000px;text-align:center;transform:scaleX(1.0);transform-origin:50% 0;-webkit-text-stroke:0.12px #262626;">25</div>
<div style="position:absolute;white-space:pre;line-height:0;font-size:11px;color:#262626;font-weight:normal;top:623.34px;left:-989.25px;width:2000px;text-align:center;transform:scaleX(1.0);transform-origin:50% 0;-webkit-text-stroke:0.12px #262626;">26</div>
<div style="position:absolute;white-space:pre;line-height:0;font-size:11px;color:#262626;font-weight:normal;top:639.19px;left:-989.25px;width:2000px;text-align:center;transform:scaleX(1.0);transform-origin:50% 0;-webkit-text-stroke:0.12px #262626;">27</div>
<div style="position:absolute;white-space:pre;line-height:0;font-size:11px;color:#262626;font-weight:normal;top:655.04px;left:-989.25px;width:2000px;text-align:center;transform:scaleX(1.0);transform-origin:50% 0;-webkit-text-stroke:0.12px #262626;">28</div>
<div style="position:absolute;white-space:pre;line-height:0;font-size:11px;color:#262626;font-weight:normal;top:670.89px;left:-989.25px;width:2000px;text-align:center;transform:scaleX(1.0);transform-origin:50% 0;-webkit-text-stroke:0.12px #262626;">29</div>
<div style="position:absolute;white-space:pre;line-height:0;font-size:11px;color:#262626;font-weight:normal;top:686.74px;left:-989.25px;width:2000px;text-align:center;transform:scaleX(1.0);transform-origin:50% 0;-webkit-text-stroke:0.12px #262626;">30</div>
<div style="position:absolute;white-space:pre;line-height:0;font-size:11px;color:#262626;font-weight:normal;top:702.59px;left:-989.25px;width:2000px;text-align:center;transform:scaleX(1.0);transform-origin:50% 0;-webkit-text-stroke:0.12px #262626;">31</div>
<div style="position:absolute;white-space:pre;line-height:0;font-size:11px;color:#262626;font-weight:normal;top:718.44px;left:-989.25px;width:2000px;text-align:center;transform:scaleX(1.0);transform-origin:50% 0;-webkit-text-stroke:0.12px #262626;">32</div>
<div style="position:absolute;white-space:pre;line-height:0;font-size:11px;color:#262626;font-weight:normal;top:734.29px;left:-989.25px;width:2000px;text-align:center;transform:scaleX(1.0);transform-origin:50% 0;-webkit-text-stroke:0.12px #262626;">33</div>
<div style="position:absolute;white-space:pre;line-height:0;font-size:11px;color:#262626;font-weight:normal;top:750.14px;left:-989.25px;width:2000px;text-align:center;transform:scaleX(1.0);transform-origin:50% 0;-webkit-text-stroke:0.12px #262626;">34</div>
<div style="position:absolute;white-space:pre;line-height:0;font-size:11px;color:#262626;font-weight:normal;top:765.99px;left:-989.25px;width:2000px;text-align:center;transform:scaleX(1.0);transform-origin:50% 0;-webkit-text-stroke:0.12px #262626;">35</div>
<div style="position:absolute;white-space:pre;line-height:0;font-size:11px;color:#262626;font-weight:normal;top:781.84px;left:-989.25px;width:2000px;text-align:center;transform:scaleX(1.0);transform-origin:50% 0;-webkit-text-stroke:0.12px #262626;">36</div>
<div style="position:absolute;white-space:pre;line-height:0;font-size:11px;color:#262626;font-weight:normal;top:797.69px;left:-989.25px;width:2000px;text-align:center;transform:scaleX(1.0);transform-origin:50% 0;-webkit-text-stroke:0.12px #262626;">37</div>
<div style="position:absolute;white-space:pre;line-height:0;font-size:11px;color:#262626;font-weight:normal;top:813.54px;left:-989.25px;width:2000px;text-align:center;transform:scaleX(1.0);transform-origin:50% 0;-webkit-text-stroke:0.12px #262626;">38</div>
<div style="position:absolute;white-space:pre;line-height:0;font-size:11px;color:#262626;font-weight:normal;top:829.39px;left:-989.25px;width:2000px;text-align:center;transform:scaleX(1.0);transform-origin:50% 0;-webkit-text-stroke:0.12px #262626;">39</div>
<div style="position:absolute;white-space:pre;line-height:0;font-size:11px;color:#262626;font-weight:normal;top:845.24px;left:-989.25px;width:2000px;text-align:center;transform:scaleX(1.0);transform-origin:50% 0;-webkit-text-stroke:0.12px #262626;">40</div>
<div style="position:absolute;white-space:pre;line-height:0;font-size:11px;color:#262626;font-weight:normal;top:861.09px;left:-989.25px;width:2000px;text-align:center;transform:scaleX(1.0);transform-origin:50% 0;-webkit-text-stroke:0.12px #262626;">41</div>
<div class="a" style="left:21.5px;top:216.4px;width:27px;height:34.6px;background:#767171;"></div>
<div class="a" style="left:21.5px;top:250.5px;width:27px;height:269.45px;background:#afabab;"></div>
<div class="a" style="left:21.5px;top:519.95px;width:27px;height:332.85px;background:#d0cece;"></div>
<div class="a" style="left:54.4px;top:216.4px;width:1163.1px;height:34.6px;background:#000000;"></div>
<div class="a" style="left:82.75px;top:488.25px;width:1497.75px;height:15.85px;background:#ffff00;"></div>
<div class="a" style="left:82.75px;top:567.5px;width:1497.75px;height:15.85px;background:#ffff00;"></div>
<div class="a" style="left:82.75px;top:599.2px;width:1497.75px;height:15.85px;background:#ffff00;"></div>
<div class="a" style="left:82.75px;top:805.25px;width:1497.75px;height:15.85px;background:#ffff00;"></div>
<div class="a" style="left:82.75px;top:821.1px;width:1497.75px;height:15.85px;background:#ffff00;"></div>
<div class="a" style="left:82.75px;top:836.95px;width:1497.75px;height:15.85px;background:#ffff00;"></div>
<div class="a" style="left:53.9px;top:188.5px;width:1px;height:664.3px;background:#111;"></div>
<div class="a" style="left:1217px;top:188.5px;width:1px;height:664.3px;background:#111;"></div>
<div class="a" style="left:48px;top:216.4px;width:1px;height:636.4px;background:#333;"></div>
<div class="a" style="left:21.5px;top:250px;width:27px;height:1px;background:#333;"></div>
<div class="a" style="left:21.5px;top:519.35px;width:27px;height:1.2px;background:#555;"></div>
<div class="a" style="left:21.5px;top:852.3px;width:27px;height:1px;background:#333;"></div>
<div class="a" style="left:54.4px;top:265.85px;width:1163.1px;height:1px;background:#111;"></div>
<div class="a" style="left:54.4px;top:281.7px;width:1163.1px;height:1px;background:#111;"></div>
<div class="a" style="left:54.4px;top:297.55px;width:1163.1px;height:1px;background:#111;"></div>
<div class="a" style="left:54.4px;top:313.4px;width:1163.1px;height:1px;background:#111;"></div>
<div class="a" style="left:54.4px;top:329.25px;width:1163.1px;height:1px;background:#111;"></div>
<div class="a" style="left:54.4px;top:345.1px;width:1163.1px;height:1px;background:#111;"></div>
<div class="a" style="left:54.4px;top:360.95px;width:1163.1px;height:1px;background:#111;"></div>
<div class="a" style="left:54.4px;top:376.8px;width:1163.1px;height:1px;background:#111;"></div>
<div class="a" style="left:54.4px;top:392.65px;width:1163.1px;height:1px;background:#111;"></div>
<div class="a" style="left:54.4px;top:408.5px;width:1163.1px;height:1px;background:#111;"></div>
<div class="a" style="left:54.4px;top:424.35px;width:1163.1px;height:1px;background:#111;"></div>
<div class="a" style="left:54.4px;top:440.2px;width:1163.1px;height:1px;background:#111;"></div>
<div class="a" style="left:54.4px;top:456.05px;width:1163.1px;height:1px;background:#111;"></div>
<div class="a" style="left:54.4px;top:471.9px;width:1163.1px;height:1px;background:#111;"></div>
<div class="a" style="left:54.4px;top:487.75px;width:1163.1px;height:1px;background:#111;"></div>
<div class="a" style="left:54.4px;top:503.6px;width:1163.1px;height:1px;background:#111;"></div>
<div class="a" style="left:54.4px;top:519.45px;width:1163.1px;height:1px;background:#111;"></div>
<div class="a" style="left:54.4px;top:535.3px;width:1163.1px;height:1px;background:#111;"></div>
<div class="a" style="left:54.4px;top:551.15px;width:1163.1px;height:1px;background:#111;"></div>
<div class="a" style="left:54.4px;top:567px;width:1163.1px;height:1px;background:#111;"></div>
<div class="a" style="left:54.4px;top:582.85px;width:1163.1px;height:1px;background:#111;"></div>
<div class="a" style="left:54.4px;top:598.7px;width:1163.1px;height:1px;background:#111;"></div>
<div class="a" style="left:54.4px;top:614.55px;width:1163.1px;height:1px;background:#111;"></div>
<div class="a" style="left:54.4px;top:630.4px;width:1163.1px;height:1px;background:#111;"></div>
<div class="a" style="left:54.4px;top:646.25px;width:1163.1px;height:1px;background:#111;"></div>
<div class="a" style="left:54.4px;top:662.1px;width:1163.1px;height:1px;background:#111;"></div>
<div class="a" style="left:54.4px;top:677.95px;width:1163.1px;height:1px;background:#111;"></div>
<div class="a" style="left:54.4px;top:693.8px;width:1163.1px;height:1px;background:#111;"></div>
<div class="a" style="left:54.4px;top:709.65px;width:1163.1px;height:1px;background:#111;"></div>
<div class="a" style="left:54.4px;top:725.5px;width:1163.1px;height:1px;background:#111;"></div>
<div class="a" style="left:54.4px;top:741.35px;width:1163.1px;height:1px;background:#111;"></div>
<div class="a" style="left:54.4px;top:757.2px;width:1163.1px;height:1px;background:#111;"></div>
<div class="a" style="left:54.4px;top:773.05px;width:1163.1px;height:1px;background:#111;"></div>
<div class="a" style="left:54.4px;top:788.9px;width:1163.1px;height:1px;background:#111;"></div>
<div class="a" style="left:54.4px;top:804.75px;width:1163.1px;height:1px;background:#111;"></div>
<div class="a" style="left:54.4px;top:820.6px;width:1163.1px;height:1px;background:#111;"></div>
<div class="a" style="left:54.4px;top:836.45px;width:1163.1px;height:1px;background:#111;"></div>
<div class="a" style="left:54.4px;top:852.3px;width:1163.1px;height:1px;background:#111;"></div>
<div class="a" style="left:82.25px;top:250.5px;width:1px;height:602.3px;background:#444;"></div>
<div class="a" style="left:303.9px;top:250.5px;width:1px;height:602.3px;background:#444;"></div>
<div class="a" style="left:378.9px;top:250.5px;width:1px;height:602.3px;background:#444;"></div>
<div class="a" style="left:464.1px;top:250.5px;width:1px;height:602.3px;background:#444;"></div>
<div class="a" style="left:516px;top:250.5px;width:1px;height:602.3px;background:#444;"></div>
<div class="a" style="left:594.9px;top:250.5px;width:1px;height:602.3px;background:#444;"></div>
<div class="a" style="left:791.6px;top:250.5px;width:1px;height:602.3px;background:#444;"></div>
<div class="a" style="left:884.1px;top:250.5px;width:1px;height:602.3px;background:#444;"></div>
<div class="a" style="left:1010.1px;top:250.5px;width:1px;height:602.3px;background:#444;"></div>
<div class="a" style="left:1099.1px;top:250.5px;width:1px;height:602.3px;background:#444;"></div>
<svg class="a" style="left:304.9px;top:251px" width="7" height="7"><polygon points="0,0 5.6,0 0,5.6" fill="#1b7f1b"/></svg>
<svg class="a" style="left:517px;top:251px" width="7" height="7"><polygon points="0,0 5.6,0 0,5.6" fill="#1b7f1b"/></svg>
<svg class="a" style="left:304.9px;top:266.85px" width="7" height="7"><polygon points="0,0 5.6,0 0,5.6" fill="#1b7f1b"/></svg>
<svg class="a" style="left:517px;top:266.85px" width="7" height="7"><polygon points="0,0 5.6,0 0,5.6" fill="#1b7f1b"/></svg>
<svg class="a" style="left:304.9px;top:282.7px" width="7" height="7"><polygon points="0,0 5.6,0 0,5.6" fill="#1b7f1b"/></svg>
<svg class="a" style="left:517px;top:282.7px" width="7" height="7"><polygon points="0,0 5.6,0 0,5.6" fill="#1b7f1b"/></svg>
<svg class="a" style="left:304.9px;top:298.55px" width="7" height="7"><polygon points="0,0 5.6,0 0,5.6" fill="#1b7f1b"/></svg>
<svg class="a" style="left:517px;top:298.55px" width="7" height="7"><polygon points="0,0 5.6,0 0,5.6" fill="#1b7f1b"/></svg>
<svg class="a" style="left:304.9px;top:314.4px" width="7" height="7"><polygon points="0,0 5.6,0 0,5.6" fill="#1b7f1b"/></svg>
<svg class="a" style="left:517px;top:314.4px" width="7" height="7"><polygon points="0,0 5.6,0 0,5.6" fill="#1b7f1b"/></svg>
<svg class="a" style="left:304.9px;top:330.25px" width="7" height="7"><polygon points="0,0 5.6,0 0,5.6" fill="#1b7f1b"/></svg>
<svg class="a" style="left:517px;top:330.25px" width="7" height="7"><polygon points="0,0 5.6,0 0,5.6" fill="#1b7f1b"/></svg>
<svg class="a" style="left:304.9px;top:346.1px" width="7" height="7"><polygon points="0,0 5.6,0 0,5.6" fill="#1b7f1b"/></svg>
<svg class="a" style="left:517px;top:346.1px" width="7" height="7"><polygon points="0,0 5.6,0 0,5.6" fill="#1b7f1b"/></svg>
<svg class="a" style="left:304.9px;top:361.95px" width="7" height="7"><polygon points="0,0 5.6,0 0,5.6" fill="#1b7f1b"/></svg>
<svg class="a" style="left:517px;top:361.95px" width="7" height="7"><polygon points="0,0 5.6,0 0,5.6" fill="#1b7f1b"/></svg>
<svg class="a" style="left:304.9px;top:377.8px" width="7" height="7"><polygon points="0,0 5.6,0 0,5.6" fill="#1b7f1b"/></svg>
<svg class="a" style="left:517px;top:377.8px" width="7" height="7"><polygon points="0,0 5.6,0 0,5.6" fill="#1b7f1b"/></svg>
<svg class="a" style="left:304.9px;top:393.65px" width="7" height="7"><polygon points="0,0 5.6,0 0,5.6" fill="#1b7f1b"/></svg>
<svg class="a" style="left:517px;top:393.65px" width="7" height="7"><polygon points="0,0 5.6,0 0,5.6" fill="#1b7f1b"/></svg>
<svg class="a" style="left:304.9px;top:409.5px" width="7" height="7"><polygon points="0,0 5.6,0 0,5.6" fill="#1b7f1b"/></svg>
<svg class="a" style="left:517px;top:409.5px" width="7" height="7"><polygon points="0,0 5.6,0 0,5.6" fill="#1b7f1b"/></svg>
<svg class="a" style="left:304.9px;top:425.35px" width="7" height="7"><polygon points="0,0 5.6,0 0,5.6" fill="#1b7f1b"/></svg>
<svg class="a" style="left:517px;top:425.35px" width="7" height="7"><polygon points="0,0 5.6,0 0,5.6" fill="#1b7f1b"/></svg>
<svg class="a" style="left:304.9px;top:441.2px" width="7" height="7"><polygon points="0,0 5.6,0 0,5.6" fill="#1b7f1b"/></svg>
<svg class="a" style="left:517px;top:441.2px" width="7" height="7"><polygon points="0,0 5.6,0 0,5.6" fill="#1b7f1b"/></svg>
<svg class="a" style="left:304.9px;top:457.05px" width="7" height="7"><polygon points="0,0 5.6,0 0,5.6" fill="#1b7f1b"/></svg>
<svg class="a" style="left:517px;top:457.05px" width="7" height="7"><polygon points="0,0 5.6,0 0,5.6" fill="#1b7f1b"/></svg>
<svg class="a" style="left:304.9px;top:472.9px" width="7" height="7"><polygon points="0,0 5.6,0 0,5.6" fill="#1b7f1b"/></svg>
<svg class="a" style="left:517px;top:472.9px" width="7" height="7"><polygon points="0,0 5.6,0 0,5.6" fill="#1b7f1b"/></svg>
<svg class="a" style="left:304.9px;top:488.75px" width="7" height="7"><polygon points="0,0 5.6,0 0,5.6" fill="#1b7f1b"/></svg>
<svg class="a" style="left:517px;top:488.75px" width="7" height="7"><polygon points="0,0 5.6,0 0,5.6" fill="#1b7f1b"/></svg>
<svg class="a" style="left:304.9px;top:504.6px" width="7" height="7"><polygon points="0,0 5.6,0 0,5.6" fill="#1b7f1b"/></svg>
<svg class="a" style="left:517px;top:504.6px" width="7" height="7"><polygon points="0,0 5.6,0 0,5.6" fill="#1b7f1b"/></svg>
<svg class="a" style="left:304.9px;top:520.45px" width="7" height="7"><polygon points="0,0 5.6,0 0,5.6" fill="#1b7f1b"/></svg>
<svg class="a" style="left:517px;top:520.45px" width="7" height="7"><polygon points="0,0 5.6,0 0,5.6" fill="#1b7f1b"/></svg>
<svg class="a" style="left:304.9px;top:536.3px" width="7" height="7"><polygon points="0,0 5.6,0 0,5.6" fill="#1b7f1b"/></svg>
<svg class="a" style="left:517px;top:536.3px" width="7" height="7"><polygon points="0,0 5.6,0 0,5.6" fill="#1b7f1b"/></svg>
<svg class="a" style="left:304.9px;top:552.15px" width="7" height="7"><polygon points="0,0 5.6,0 0,5.6" fill="#1b7f1b"/></svg>
<svg class="a" style="left:517px;top:552.15px" width="7" height="7"><polygon points="0,0 5.6,0 0,5.6" fill="#1b7f1b"/></svg>
<svg class="a" style="left:304.9px;top:568px" width="7" height="7"><polygon points="0,0 5.6,0 0,5.6" fill="#1b7f1b"/></svg>
<svg class="a" style="left:517px;top:568px" width="7" height="7"><polygon points="0,0 5.6,0 0,5.6" fill="#1b7f1b"/></svg>
<svg class="a" style="left:304.9px;top:583.85px" width="7" height="7"><polygon points="0,0 5.6,0 0,5.6" fill="#1b7f1b"/></svg>
<svg class="a" style="left:517px;top:583.85px" width="7" height="7"><polygon points="0,0 5.6,0 0,5.6" fill="#1b7f1b"/></svg>
<svg class="a" style="left:304.9px;top:599.7px" width="7" height="7"><polygon points="0,0 5.6,0 0,5.6" fill="#1b7f1b"/></svg>
<svg class="a" style="left:517px;top:599.7px" width="7" height="7"><polygon points="0,0 5.6,0 0,5.6" fill="#1b7f1b"/></svg>
<svg class="a" style="left:304.9px;top:615.55px" width="7" height="7"><polygon points="0,0 5.6,0 0,5.6" fill="#1b7f1b"/></svg>
<svg class="a" style="left:517px;top:615.55px" width="7" height="7"><polygon points="0,0 5.6,0 0,5.6" fill="#1b7f1b"/></svg>
<svg class="a" style="left:304.9px;top:631.4px" width="7" height="7"><polygon points="0,0 5.6,0 0,5.6" fill="#1b7f1b"/></svg>
<svg class="a" style="left:517px;top:631.4px" width="7" height="7"><polygon points="0,0 5.6,0 0,5.6" fill="#1b7f1b"/></svg>
<svg class="a" style="left:304.9px;top:647.25px" width="7" height="7"><polygon points="0,0 5.6,0 0,5.6" fill="#1b7f1b"/></svg>
<svg class="a" style="left:517px;top:647.25px" width="7" height="7"><polygon points="0,0 5.6,0 0,5.6" fill="#1b7f1b"/></svg>
<svg class="a" style="left:304.9px;top:663.1px" width="7" height="7"><polygon points="0,0 5.6,0 0,5.6" fill="#1b7f1b"/></svg>
<svg class="a" style="left:517px;top:663.1px" width="7" height="7"><polygon points="0,0 5.6,0 0,5.6" fill="#1b7f1b"/></svg>
<svg class="a" style="left:304.9px;top:678.95px" width="7" height="7"><polygon points="0,0 5.6,0 0,5.6" fill="#1b7f1b"/></svg>
<svg class="a" style="left:517px;top:678.95px" width="7" height="7"><polygon points="0,0 5.6,0 0,5.6" fill="#1b7f1b"/></svg>
<svg class="a" style="left:304.9px;top:694.8px" width="7" height="7"><polygon points="0,0 5.6,0 0,5.6" fill="#1b7f1b"/></svg>
<svg class="a" style="left:517px;top:694.8px" width="7" height="7"><polygon points="0,0 5.6,0 0,5.6" fill="#1b7f1b"/></svg>
<svg class="a" style="left:304.9px;top:710.65px" width="7" height="7"><polygon points="0,0 5.6,0 0,5.6" fill="#1b7f1b"/></svg>
<svg class="a" style="left:517px;top:710.65px" width="7" height="7"><polygon points="0,0 5.6,0 0,5.6" fill="#1b7f1b"/></svg>
<svg class="a" style="left:304.9px;top:726.5px" width="7" height="7"><polygon points="0,0 5.6,0 0,5.6" fill="#1b7f1b"/></svg>
<svg class="a" style="left:517px;top:726.5px" width="7" height="7"><polygon points="0,0 5.6,0 0,5.6" fill="#1b7f1b"/></svg>
<svg class="a" style="left:304.9px;top:742.35px" width="7" height="7"><polygon points="0,0 5.6,0 0,5.6" fill="#1b7f1b"/></svg>
<svg class="a" style="left:517px;top:742.35px" width="7" height="7"><polygon points="0,0 5.6,0 0,5.6" fill="#1b7f1b"/></svg>
<svg class="a" style="left:304.9px;top:758.2px" width="7" height="7"><polygon points="0,0 5.6,0 0,5.6" fill="#1b7f1b"/></svg>
<svg class="a" style="left:517px;top:758.2px" width="7" height="7"><polygon points="0,0 5.6,0 0,5.6" fill="#1b7f1b"/></svg>
<svg class="a" style="left:304.9px;top:774.05px" width="7" height="7"><polygon points="0,0 5.6,0 0,5.6" fill="#1b7f1b"/></svg>
<svg class="a" style="left:517px;top:774.05px" width="7" height="7"><polygon points="0,0 5.6,0 0,5.6" fill="#1b7f1b"/></svg>
<svg class="a" style="left:304.9px;top:789.9px" width="7" height="7"><polygon points="0,0 5.6,0 0,5.6" fill="#1b7f1b"/></svg>
<svg class="a" style="left:517px;top:789.9px" width="7" height="7"><polygon points="0,0 5.6,0 0,5.6" fill="#1b7f1b"/></svg>
<svg class="a" style="left:304.9px;top:805.75px" width="7" height="7"><polygon points="0,0 5.6,0 0,5.6" fill="#1b7f1b"/></svg>
<svg class="a" style="left:517px;top:805.75px" width="7" height="7"><polygon points="0,0 5.6,0 0,5.6" fill="#1b7f1b"/></svg>
<svg class="a" style="left:304.9px;top:821.6px" width="7" height="7"><polygon points="0,0 5.6,0 0,5.6" fill="#1b7f1b"/></svg>
<svg class="a" style="left:517px;top:821.6px" width="7" height="7"><polygon points="0,0 5.6,0 0,5.6" fill="#1b7f1b"/></svg>
<svg class="a" style="left:304.9px;top:837.45px" width="7" height="7"><polygon points="0,0 5.6,0 0,5.6" fill="#1b7f1b"/></svg>
<svg class="a" style="left:517px;top:837.45px" width="7" height="7"><polygon points="0,0 5.6,0 0,5.6" fill="#1b7f1b"/></svg>
<div style="position:absolute;white-space:pre;line-height:0;font-size:14.5px;color:#111;font-weight:bold;top:202.68px;left:-364.05px;width:2000px;text-align:center;transform:scaleX(0.892);transform-origin:50% 0;">TABLA DE INSCRITAS AL CURSO DE REPOSTERÍA - PROYECTO DE DESARROLLO DE EMPRENDIMIENTO PRODUCTIVOS CON MUJERES RURALES DE LIMONAL</div>
<div style="position:absolute;white-space:pre;line-height:0;font-size:11px;color:#fff;font-weight:bold;top:234.19px;left:-965px;width:2000px;text-align:center;transform:scaleX(0.92);transform-origin:50% 0;">GR</div>
<div style="position:absolute;white-space:pre;line-height:0;font-size:11px;color:#fff;font-weight:bold;top:234.19px;left:-931.42px;width:2000px;text-align:center;transform:scaleX(0.92);transform-origin:50% 0;">N°</div>
<div style="position:absolute;white-space:pre;line-height:0;font-size:11px;color:#fff;font-weight:bold;top:234.19px;left:-806.42px;width:2000px;text-align:center;transform:scaleX(0.92);transform-origin:50% 0;">APELLIDOS Y NOMBRES</div>
<div style="position:absolute;white-space:pre;line-height:0;font-size:11px;color:#fff;font-weight:bold;top:234.19px;left:-658.1px;width:2000px;text-align:center;transform:scaleX(0.92);transform-origin:50% 0;">C.I.</div>
<div style="position:absolute;white-space:pre;line-height:0;font-size:11px;color:#fff;font-weight:bold;top:225.79px;left:-578px;width:2000px;text-align:center;transform:scaleX(0.92);transform-origin:50% 0;">FECHA DE</div>
<div style="position:absolute;white-space:pre;line-height:0;font-size:11px;color:#fff;font-weight:bold;top:241.69px;left:-578px;width:2000px;text-align:center;transform:scaleX(0.92);transform-origin:50% 0;">NACIMIENTO</div>
<div style="position:absolute;white-space:pre;line-height:0;font-size:11px;color:#fff;font-weight:bold;top:234.19px;left:-509.45px;width:2000px;text-align:center;transform:scaleX(0.92);transform-origin:50% 0;">EDAD</div>
<div style="position:absolute;white-space:pre;line-height:0;font-size:11px;color:#fff;font-weight:bold;top:234.19px;left:-444.05px;width:2000px;text-align:center;transform:scaleX(0.92);transform-origin:50% 0;">TELF.</div>
<div style="position:absolute;white-space:pre;line-height:0;font-size:11px;color:#fff;font-weight:bold;top:234.19px;left:-306.25px;width:2000px;text-align:center;transform:scaleX(0.92);transform-origin:50% 0;">CORREO</div>
<div style="position:absolute;white-space:pre;line-height:0;font-size:11px;color:#fff;font-weight:bold;top:225.79px;left:-161.65px;width:2000px;text-align:center;transform:scaleX(0.92);transform-origin:50% 0;">SECTOR O</div>
<div style="position:absolute;white-space:pre;line-height:0;font-size:11px;color:#fff;font-weight:bold;top:241.69px;left:-161.65px;width:2000px;text-align:center;transform:scaleX(0.92);transform-origin:50% 0;">RECINTO</div>
<div style="position:absolute;white-space:pre;line-height:0;font-size:11px;color:#fff;font-weight:bold;top:225.79px;left:-52.4px;width:2000px;text-align:center;transform:scaleX(0.92);transform-origin:50% 0;">DIRECCIÓN</div>
<div style="position:absolute;white-space:pre;line-height:0;font-size:11px;color:#fff;font-weight:bold;top:241.69px;left:-52.4px;width:2000px;text-align:center;transform:scaleX(0.92);transform-origin:50% 0;">DOMICILIARIA</div>
<div style="position:absolute;white-space:pre;line-height:0;font-size:11px;color:#fff;font-weight:bold;top:225.79px;left:55.1px;width:2000px;text-align:center;transform:scaleX(0.92);transform-origin:50% 0;">NIVEL DE</div>
<div style="position:absolute;white-space:pre;line-height:0;font-size:11px;color:#fff;font-weight:bold;top:241.69px;left:55.1px;width:2000px;text-align:center;transform:scaleX(0.92);transform-origin:50% 0;">ESTUDIOS</div>
<div style="position:absolute;white-space:pre;line-height:0;font-size:11px;color:#fff;font-weight:bold;top:234.19px;left:158.55px;width:2000px;text-align:center;transform:scaleX(0.92);transform-origin:50% 0;">OCUPACIÓN</div>
<div style="position:absolute;white-space:pre;line-height:0;font-size:11px;color:#222;font-weight:normal;top:258.79px;left:-931.42px;width:2000px;text-align:center;transform:scaleX(0.9451);transform-origin:50% 0;-webkit-text-stroke:0.15px #222;">1</div>
<div class="a" style="left:82.75px;top:250.5px;width:221.65px;height:17.85px;overflow:hidden">
<div style="position:absolute;white-space:pre;line-height:0;font-size:11px;color:#222;font-weight:normal;top:8.29px;left:2.8px;transform:scaleX(0.8949);transform-origin:0 0;-webkit-text-stroke:0.15px #222;">TORRES MOSQUERA NAYELY ISABEL</div>
</div>
<div style="position:absolute;white-space:pre;line-height:0;font-size:11px;color:#222;font-weight:normal;top:258.79px;left:-658.1px;width:2000px;text-align:center;transform:scaleX(0.9451);transform-origin:50% 0;-webkit-text-stroke:0.15px #222;">0942697137</div>
<div style="position:absolute;white-space:pre;line-height:0;font-size:11px;color:#222;font-weight:normal;top:258.79px;left:-578px;width:2000px;text-align:center;transform:scaleX(1.0068);transform-origin:50% 0;-webkit-text-stroke:0.15px #222;">20/9/2002</div>
<div style="position:absolute;white-space:pre;line-height:0;font-size:11px;color:#222;font-weight:normal;top:258.79px;left:-509.45px;width:2000px;text-align:center;transform:scaleX(0.9451);transform-origin:50% 0;-webkit-text-stroke:0.15px #222;">22</div>
<div style="position:absolute;white-space:pre;line-height:0;font-size:11px;color:#222;font-weight:normal;top:258.79px;left:-444.05px;width:2000px;text-align:center;transform:scaleX(0.9451);transform-origin:50% 0;-webkit-text-stroke:0.15px #222;">0960954647</div>
<div class="a" style="left:595.4px;top:250.5px;width:196.7px;height:17.85px;overflow:hidden">
<div style="position:absolute;white-space:pre;line-height:0;font-size:11px;color:#1f62bd;font-weight:normal;top:8.29px;left:2.35px;transform:scaleX(1.0366);transform-origin:0 0;text-decoration:underline;text-underline-offset:1.5px;text-decoration-skip-ink:none;text-decoration-thickness:1px;text-decoration-color:#5a8bcc;">torresnayely427@gmail.com</div>
</div>
<div style="position:absolute;white-space:pre;line-height:0;font-size:11px;color:#222;font-weight:normal;top:258.79px;left:794.5px;transform:scaleX(1.0539);transform-origin:0 0;-webkit-text-stroke:0.15px #222;">Limonal</div>
<div class="a" style="left:884.6px;top:250.5px;width:126px;height:15.85px;overflow:hidden">
<div style="position:absolute;white-space:pre;line-height:0;font-size:11px;color:#222;font-weight:normal;top:8.29px;left:2.4px;transform:scaleX(1.0144);transform-origin:0 0;-webkit-text-stroke:0.15px #222;">Vía Piñal</div>
</div>
<div style="position:absolute;white-space:pre;line-height:0;font-size:11px;color:#222;font-weight:normal;top:258.79px;left:1013px;transform:scaleX(1.0511);transform-origin:0 0;-webkit-text-stroke:0.15px #222;">Bachiller</div>
<div style="position:absolute;white-space:pre;line-height:0;font-size:11px;color:#222;font-weight:normal;top:258.79px;left:1101.6px;transform:scaleX(1.0296);transform-origin:0 0;-webkit-text-stroke:0.15px #222;">Sin ocupacion</div>
<div style="position:absolute;white-space:pre;line-height:0;font-size:11px;color:#222;font-weight:normal;top:274.64px;left:-931.42px;width:2000px;text-align:center;transform:scaleX(0.9451);transform-origin:50% 0;-webkit-text-stroke:0.15px #222;">2</div>
<div class="a" style="left:82.75px;top:266.35px;width:221.65px;height:17.85px;overflow:hidden">
<div style="position:absolute;white-space:pre;line-height:0;font-size:11px;color:#222;font-weight:normal;top:8.29px;left:2.8px;transform:scaleX(0.9136);transform-origin:0 0;-webkit-text-stroke:0.15px #222;">TORRES MOSQUERA MARÍA DE LOURDES</div>
</div>
<div style="position:absolute;white-space:pre;line-height:0;font-size:11px;color:#222;font-weight:normal;top:274.64px;left:-658.1px;width:2000px;text-align:center;transform:scaleX(0.9451);transform-origin:50% 0;-webkit-text-stroke:0.15px #222;">0942697061</div>
<div style="position:absolute;white-space:pre;line-height:0;font-size:11px;color:#222;font-weight:normal;top:274.64px;left:-578px;width:2000px;text-align:center;transform:scaleX(1.0068);transform-origin:50% 0;-webkit-text-stroke:0.15px #222;">10/3/2006</div>
<div style="position:absolute;white-space:pre;line-height:0;font-size:11px;color:#222;font-weight:normal;top:274.64px;left:-509.45px;width:2000px;text-align:center;transform:scaleX(0.9451);transform-origin:50% 0;-webkit-text-stroke:0.15px #222;">18</div>
<div style="position:absolute;white-space:pre;line-height:0;font-size:11px;color:#222;font-weight:normal;top:274.64px;left:-444.05px;width:2000px;text-align:center;transform:scaleX(0.9451);transform-origin:50% 0;-webkit-text-stroke:0.15px #222;">0961809214</div>
<div class="a" style="left:595.4px;top:266.35px;width:196.7px;height:17.85px;overflow:hidden">
<div style="position:absolute;white-space:pre;line-height:0;font-size:11px;color:#1f62bd;font-weight:normal;top:8.29px;left:2.35px;transform:scaleX(1.0366);transform-origin:0 0;text-decoration:underline;text-underline-offset:1.5px;text-decoration-skip-ink:none;text-decoration-thickness:1px;text-decoration-color:#5a8bcc;">torresnayely749@gmail.com</div>
</div>
<div style="position:absolute;white-space:pre;line-height:0;font-size:11px;color:#222;font-weight:normal;top:274.64px;left:794.5px;transform:scaleX(1.0539);transform-origin:0 0;-webkit-text-stroke:0.15px #222;">Limonal</div>
<div class="a" style="left:884.6px;top:266.35px;width:126px;height:15.85px;overflow:hidden">
<div style="position:absolute;white-space:pre;line-height:0;font-size:11px;color:#222;font-weight:normal;top:8.29px;left:2.4px;transform:scaleX(1.0144);transform-origin:0 0;-webkit-text-stroke:0.15px #222;">Vía Piñal</div>
</div>
<div style="position:absolute;white-space:pre;line-height:0;font-size:11px;color:#222;font-weight:normal;top:274.64px;left:1013px;transform:scaleX(1.0511);transform-origin:0 0;-webkit-text-stroke:0.15px #222;">Bachiller</div>
<div style="position:absolute;white-space:pre;line-height:0;font-size:11px;color:#222;font-weight:normal;top:274.64px;left:1101.6px;transform:scaleX(1.0296);transform-origin:0 0;-webkit-text-stroke:0.15px #222;">Sin ocupacion</div>
<div style="position:absolute;white-space:pre;line-height:0;font-size:11px;color:#222;font-weight:normal;top:290.49px;left:-931.42px;width:2000px;text-align:center;transform:scaleX(0.9451);transform-origin:50% 0;-webkit-text-stroke:0.15px #222;">3</div>
<div class="a" style="left:82.75px;top:282.2px;width:221.65px;height:17.85px;overflow:hidden">
<div style="position:absolute;white-space:pre;line-height:0;font-size:11px;color:#222;font-weight:normal;top:8.29px;left:2.8px;transform:scaleX(0.9151);transform-origin:0 0;-webkit-text-stroke:0.15px #222;">ALVARADO TORRES AMY WALESKA</div>
</div>
<div style="position:absolute;white-space:pre;line-height:0;font-size:11px;color:#222;font-weight:normal;top:290.49px;left:-658.1px;width:2000px;text-align:center;transform:scaleX(0.9451);transform-origin:50% 0;-webkit-text-stroke:0.15px #222;">0942694787</div>
<div style="position:absolute;white-space:pre;line-height:0;font-size:11px;color:#222;font-weight:normal;top:290.49px;left:-578px;width:2000px;text-align:center;transform:scaleX(1.0068);transform-origin:50% 0;-webkit-text-stroke:0.15px #222;">20/3/2005</div>
<div style="position:absolute;white-space:pre;line-height:0;font-size:11px;color:#222;font-weight:normal;top:290.49px;left:-509.45px;width:2000px;text-align:center;transform:scaleX(0.9451);transform-origin:50% 0;-webkit-text-stroke:0.15px #222;">19</div>
<div style="position:absolute;white-space:pre;line-height:0;font-size:11px;color:#222;font-weight:normal;top:290.49px;left:-444.05px;width:2000px;text-align:center;transform:scaleX(0.9451);transform-origin:50% 0;-webkit-text-stroke:0.15px #222;">0996466995</div>
<div class="a" style="left:595.4px;top:282.2px;width:196.7px;height:17.85px;overflow:hidden">
<div style="position:absolute;white-space:pre;line-height:0;font-size:11px;color:#1f62bd;font-weight:normal;top:8.29px;left:2.35px;transform:scaleX(1.041);transform-origin:0 0;text-decoration:underline;text-underline-offset:1.5px;text-decoration-skip-ink:none;text-decoration-thickness:1px;text-decoration-color:#5a8bcc;">alvaradotorresamywaleska@gmail.com</div>
</div>
<div style="position:absolute;white-space:pre;line-height:0;font-size:11px;color:#222;font-weight:normal;top:290.49px;left:794.5px;transform:scaleX(1.0349);transform-origin:0 0;-webkit-text-stroke:0.15px #222;">Piñal de Abajo</div>
<div class="a" style="left:884.6px;top:282.2px;width:126px;height:15.85px;overflow:hidden">
<div style="position:absolute;white-space:pre;line-height:0;font-size:11px;color:#222;font-weight:normal;top:8.29px;left:2.4px;transform:scaleX(1.0058);transform-origin:0 0;-webkit-text-stroke:0.15px #222;">Calle Amazonas</div>
</div>
<div style="position:absolute;white-space:pre;line-height:0;font-size:11px;color:#222;font-weight:normal;top:290.49px;left:1013px;transform:scaleX(1.0511);transform-origin:0 0;-webkit-text-stroke:0.15px #222;">Bachiller</div>
<div style="position:absolute;white-space:pre;line-height:0;font-size:11px;color:#222;font-weight:normal;top:290.49px;left:1101.6px;transform:scaleX(1.0296);transform-origin:0 0;-webkit-text-stroke:0.15px #222;">Sin ocupacion</div>
<div style="position:absolute;white-space:pre;line-height:0;font-size:11px;color:#222;font-weight:normal;top:306.34px;left:-931.42px;width:2000px;text-align:center;transform:scaleX(0.9451);transform-origin:50% 0;-webkit-text-stroke:0.15px #222;">4</div>
<div class="a" style="left:82.75px;top:298.05px;width:221.65px;height:17.85px;overflow:hidden">
<div style="position:absolute;white-space:pre;line-height:0;font-size:11px;color:#222;font-weight:normal;top:8.29px;left:2.8px;transform:scaleX(0.921);transform-origin:0 0;-webkit-text-stroke:0.15px #222;">CABRERA MORA BRITNEY JOHANNA</div>
</div>
<div style="position:absolute;white-space:pre;line-height:0;font-size:11px;color:#222;font-weight:normal;top:306.34px;left:-658.1px;width:2000px;text-align:center;transform:scaleX(0.9451);transform-origin:50% 0;-webkit-text-stroke:0.15px #222;">0940688922</div>
<div style="position:absolute;white-space:pre;line-height:0;font-size:11px;color:#222;font-weight:normal;top:306.34px;left:-578px;width:2000px;text-align:center;transform:scaleX(1.0156);transform-origin:50% 0;-webkit-text-stroke:0.15px #222;">5/5/2002</div>
<div style="position:absolute;white-space:pre;line-height:0;font-size:11px;color:#222;font-weight:normal;top:306.34px;left:-509.45px;width:2000px;text-align:center;transform:scaleX(0.9451);transform-origin:50% 0;-webkit-text-stroke:0.15px #222;">22</div>
<div style="position:absolute;white-space:pre;line-height:0;font-size:11px;color:#222;font-weight:normal;top:306.34px;left:-444.05px;width:2000px;text-align:center;transform:scaleX(0.9451);transform-origin:50% 0;-webkit-text-stroke:0.15px #222;">0959275222</div>
<div class="a" style="left:595.4px;top:298.05px;width:196.7px;height:17.85px;overflow:hidden">
<div style="position:absolute;white-space:pre;line-height:0;font-size:11px;color:#1f62bd;font-weight:normal;top:8.29px;left:2.35px;transform:scaleX(1.0454);transform-origin:0 0;text-decoration:underline;text-underline-offset:1.5px;text-decoration-skip-ink:none;text-decoration-thickness:1px;text-decoration-color:#5a8bcc;">britneycabrera29@gmail.com </div>
</div>
<div style="position:absolute;white-space:pre;line-height:0;font-size:11px;color:#222;font-weight:normal;top:306.34px;left:794.5px;transform:scaleX(1.0349);transform-origin:0 0;-webkit-text-stroke:0.15px #222;">Piñal de Abajo</div>
<div class="a" style="left:884.6px;top:298.05px;width:126px;height:15.85px;overflow:hidden">
<div style="position:absolute;white-space:pre;line-height:0;font-size:11px;color:#222;font-weight:normal;top:8.29px;left:2.4px;transform:scaleX(0.9592);transform-origin:0 0;-webkit-text-stroke:0.15px #222;">Escuela IPP</div>
</div>
<div style="position:absolute;white-space:pre;line-height:0;font-size:11px;color:#222;font-weight:normal;top:306.34px;left:1013px;transform:scaleX(1.0511);transform-origin:0 0;-webkit-text-stroke:0.15px #222;">Bachiller</div>
<div style="position:absolute;white-space:pre;line-height:0;font-size:11px;color:#222;font-weight:normal;top:306.34px;left:1101.6px;transform:scaleX(1.0296);transform-origin:0 0;-webkit-text-stroke:0.15px #222;">Sin ocupacion</div>
<div style="position:absolute;white-space:pre;line-height:0;font-size:11px;color:#222;font-weight:normal;top:322.19px;left:-931.42px;width:2000px;text-align:center;transform:scaleX(0.9451);transform-origin:50% 0;-webkit-text-stroke:0.15px #222;">5</div>
<div class="a" style="left:82.75px;top:313.9px;width:221.65px;height:17.85px;overflow:hidden">
<div style="position:absolute;white-space:pre;line-height:0;font-size:11px;color:#222;font-weight:normal;top:8.29px;left:2.8px;transform:scaleX(0.9315);transform-origin:0 0;-webkit-text-stroke:0.15px #222;">AMADOR CABRERA KATTY MAGDALENA</div>
</div>
<div style="position:absolute;white-space:pre;line-height:0;font-size:11px;color:#222;font-weight:normal;top:322.19px;left:-658.1px;width:2000px;text-align:center;transform:scaleX(0.9451);transform-origin:50% 0;-webkit-text-stroke:0.15px #222;">0943430199</div>
<div style="position:absolute;white-space:pre;line-height:0;font-size:11px;color:#222;font-weight:normal;top:322.19px;left:-578px;width:2000px;text-align:center;transform:scaleX(1.0068);transform-origin:50% 0;-webkit-text-stroke:0.15px #222;">28/3/2000</div>
<div style="position:absolute;white-space:pre;line-height:0;font-size:11px;color:#222;font-weight:normal;top:322.19px;left:-509.45px;width:2000px;text-align:center;transform:scaleX(0.9451);transform-origin:50% 0;-webkit-text-stroke:0.15px #222;">24</div>
<div style="position:absolute;white-space:pre;line-height:0;font-size:11px;color:#222;font-weight:normal;top:322.19px;left:-444.05px;width:2000px;text-align:center;transform:scaleX(0.9451);transform-origin:50% 0;-webkit-text-stroke:0.15px #222;">0997193600</div>
<div class="a" style="left:595.4px;top:313.9px;width:196.7px;height:17.85px;overflow:hidden">
<div style="position:absolute;white-space:pre;line-height:0;font-size:11px;color:#1f62bd;font-weight:normal;top:8.29px;left:2.35px;transform:scaleX(1.049);transform-origin:0 0;text-decoration:underline;text-underline-offset:1.5px;text-decoration-skip-ink:none;text-decoration-thickness:1px;text-decoration-color:#5a8bcc;">kettyamador34@gmail.com</div>
</div>
<div style="position:absolute;white-space:pre;line-height:0;font-size:11px;color:#222;font-weight:normal;top:322.19px;left:794.5px;transform:scaleX(1.0349);transform-origin:0 0;-webkit-text-stroke:0.15px #222;">Piñal de Abajo</div>
<div class="a" style="left:884.6px;top:313.9px;width:126px;height:15.85px;overflow:hidden">
<div style="position:absolute;white-space:pre;line-height:0;font-size:11px;color:#222;font-weight:normal;top:8.29px;left:2.4px;transform:scaleX(1.0321);transform-origin:0 0;-webkit-text-stroke:0.15px #222;">Los Almendros</div>
</div>
<div style="position:absolute;white-space:pre;line-height:0;font-size:11px;color:#222;font-weight:normal;top:322.19px;left:1013px;transform:scaleX(1.0416);transform-origin:0 0;-webkit-text-stroke:0.15px #222;">Tercer Nivel</div>
<div style="position:absolute;white-space:pre;line-height:0;font-size:11px;color:#222;font-weight:normal;top:322.19px;left:1101.6px;transform:scaleX(1.0538);transform-origin:0 0;-webkit-text-stroke:0.15px #222;">Estudiante</div>
<div style="position:absolute;white-space:pre;line-height:0;font-size:11px;color:#222;font-weight:normal;top:338.04px;left:-931.42px;width:2000px;text-align:center;transform:scaleX(0.9451);transform-origin:50% 0;-webkit-text-stroke:0.15px #222;">6</div>
<div class="a" style="left:82.75px;top:329.75px;width:221.65px;height:17.85px;overflow:hidden">
<div style="position:absolute;white-space:pre;line-height:0;font-size:11px;color:#222;font-weight:normal;top:8.29px;left:2.8px;transform:scaleX(0.9029);transform-origin:0 0;-webkit-text-stroke:0.15px #222;">CABRERA MORA KEYLA BRIGGITTE</div>
</div>
<div style="position:absolute;white-space:pre;line-height:0;font-size:11px;color:#222;font-weight:normal;top:338.04px;left:-658.1px;width:2000px;text-align:center;transform:scaleX(0.9451);transform-origin:50% 0;-webkit-text-stroke:0.15px #222;">0955815857</div>
<div style="position:absolute;white-space:pre;line-height:0;font-size:11px;color:#222;font-weight:normal;top:338.04px;left:-578px;width:2000px;text-align:center;transform:scaleX(1.0068);transform-origin:50% 0;-webkit-text-stroke:0.15px #222;">29/6/2006</div>
<div style="position:absolute;white-space:pre;line-height:0;font-size:11px;color:#222;font-weight:normal;top:338.04px;left:-509.45px;width:2000px;text-align:center;transform:scaleX(0.9451);transform-origin:50% 0;-webkit-text-stroke:0.15px #222;">18</div>
<div style="position:absolute;white-space:pre;line-height:0;font-size:11px;color:#222;font-weight:normal;top:338.04px;left:-444.05px;width:2000px;text-align:center;transform:scaleX(0.9451);transform-origin:50% 0;-webkit-text-stroke:0.15px #222;"> 0990844966</div>
<div class="a" style="left:595.4px;top:329.75px;width:196.7px;height:17.85px;overflow:hidden">
<div style="position:absolute;white-space:pre;line-height:0;font-size:11px;color:#1f62bd;font-weight:normal;top:8.29px;left:2.35px;transform:scaleX(1.0272);transform-origin:0 0;text-decoration:underline;text-underline-offset:1.5px;text-decoration-skip-ink:none;text-decoration-thickness:1px;text-decoration-color:#5a8bcc;">kcabreram2021@gmail.com </div>
</div>
<div style="position:absolute;white-space:pre;line-height:0;font-size:11px;color:#222;font-weight:normal;top:338.04px;left:794.5px;transform:scaleX(1.0349);transform-origin:0 0;-webkit-text-stroke:0.15px #222;">Piñal de Abajo</div>
<div class="a" style="left:884.6px;top:329.75px;width:126px;height:15.85px;overflow:hidden">
<div style="position:absolute;white-space:pre;line-height:0;font-size:11px;color:#222;font-weight:normal;top:8.29px;left:2.4px;transform:scaleX(0.9592);transform-origin:0 0;-webkit-text-stroke:0.15px #222;">Escuela IPP</div>
</div>
<div style="position:absolute;white-space:pre;line-height:0;font-size:11px;color:#222;font-weight:normal;top:338.04px;left:1013px;transform:scaleX(1.0511);transform-origin:0 0;-webkit-text-stroke:0.15px #222;">Bachiller</div>
<div style="position:absolute;white-space:pre;line-height:0;font-size:11px;color:#222;font-weight:normal;top:338.04px;left:1101.6px;transform:scaleX(1.0296);transform-origin:0 0;-webkit-text-stroke:0.15px #222;">Sin ocupacion</div>
<div style="position:absolute;white-space:pre;line-height:0;font-size:11px;color:#222;font-weight:normal;top:353.89px;left:-931.42px;width:2000px;text-align:center;transform:scaleX(0.9451);transform-origin:50% 0;-webkit-text-stroke:0.15px #222;">7</div>
<div class="a" style="left:82.75px;top:345.6px;width:221.65px;height:17.85px;overflow:hidden">
<div style="position:absolute;white-space:pre;line-height:0;font-size:11px;color:#222;font-weight:normal;top:8.29px;left:2.8px;transform:scaleX(0.9424);transform-origin:0 0;-webkit-text-stroke:0.15px #222;">GUARANDA JIMENÉZ MARIA FERNANDA</div>
</div>
<div style="position:absolute;white-space:pre;line-height:0;font-size:11px;color:#222;font-weight:normal;top:353.89px;left:-658.1px;width:2000px;text-align:center;transform:scaleX(0.9451);transform-origin:50% 0;-webkit-text-stroke:0.15px #222;">0952269413</div>
<div style="position:absolute;white-space:pre;line-height:0;font-size:11px;color:#222;font-weight:normal;top:353.89px;left:-578px;width:2000px;text-align:center;transform:scaleX(1.0068);transform-origin:50% 0;-webkit-text-stroke:0.15px #222;">22/3/1997</div>
<div style="position:absolute;white-space:pre;line-height:0;font-size:11px;color:#222;font-weight:normal;top:353.89px;left:-509.45px;width:2000px;text-align:center;transform:scaleX(0.9451);transform-origin:50% 0;-webkit-text-stroke:0.15px #222;">27</div>
<div style="position:absolute;white-space:pre;line-height:0;font-size:11px;color:#222;font-weight:normal;top:353.89px;left:-444.05px;width:2000px;text-align:center;transform:scaleX(0.9451);transform-origin:50% 0;-webkit-text-stroke:0.15px #222;">0997838539</div>
<div class="a" style="left:595.4px;top:345.6px;width:196.7px;height:17.85px;overflow:hidden">
<div style="position:absolute;white-space:pre;line-height:0;font-size:11px;color:#1f62bd;font-weight:normal;top:8.29px;left:2.35px;transform:scaleX(1.0334);transform-origin:0 0;text-decoration:underline;text-underline-offset:1.5px;text-decoration-skip-ink:none;text-decoration-thickness:1px;text-decoration-color:#5a8bcc;">maria-15-97@hotmail.es </div>
</div>
<div style="position:absolute;white-space:pre;line-height:0;font-size:11px;color:#222;font-weight:normal;top:353.89px;left:794.5px;transform:scaleX(0.9905);transform-origin:0 0;-webkit-text-stroke:0.15px #222;">La Elvira</div>
<div class="a" style="left:884.6px;top:345.6px;width:126px;height:15.85px;overflow:hidden">
<div style="position:absolute;white-space:pre;line-height:0;font-size:11px;color:#222;font-weight:normal;top:8.29px;left:2.4px;transform:scaleX(0.9905);transform-origin:0 0;-webkit-text-stroke:0.15px #222;">La Elvira</div>
</div>
<div style="position:absolute;white-space:pre;line-height:0;font-size:11px;color:#222;font-weight:normal;top:353.89px;left:1013px;transform:scaleX(1.0511);transform-origin:0 0;-webkit-text-stroke:0.15px #222;">Bachiller</div>
<div style="position:absolute;white-space:pre;line-height:0;font-size:11px;color:#222;font-weight:normal;top:353.89px;left:1101.6px;transform:scaleX(0.9895);transform-origin:0 0;-webkit-text-stroke:0.15px #222;">Ama de Casa</div>
<div style="position:absolute;white-space:pre;line-height:0;font-size:11px;color:#222;font-weight:normal;top:369.74px;left:-931.42px;width:2000px;text-align:center;transform:scaleX(0.9451);transform-origin:50% 0;-webkit-text-stroke:0.15px #222;">8</div>
<div class="a" style="left:82.75px;top:361.45px;width:221.65px;height:17.85px;overflow:hidden">
<div style="position:absolute;white-space:pre;line-height:0;font-size:11px;color:#222;font-weight:normal;top:8.29px;left:2.8px;transform:scaleX(0.9231);transform-origin:0 0;-webkit-text-stroke:0.15px #222;">PLÚAS MARTÍNEZ LILIANA LILIBETH</div>
</div>
<div style="position:absolute;white-space:pre;line-height:0;font-size:11px;color:#222;font-weight:normal;top:369.74px;left:-658.1px;width:2000px;text-align:center;transform:scaleX(0.9451);transform-origin:50% 0;-webkit-text-stroke:0.15px #222;">0942787920</div>
<div style="position:absolute;white-space:pre;line-height:0;font-size:11px;color:#222;font-weight:normal;top:369.74px;left:-578px;width:2000px;text-align:center;transform:scaleX(1.0068);transform-origin:50% 0;-webkit-text-stroke:0.15px #222;">22/1/2003</div>
<div style="position:absolute;white-space:pre;line-height:0;font-size:11px;color:#222;font-weight:normal;top:369.74px;left:-509.45px;width:2000px;text-align:center;transform:scaleX(0.9451);transform-origin:50% 0;-webkit-text-stroke:0.15px #222;">23</div>
<div style="position:absolute;white-space:pre;line-height:0;font-size:11px;color:#222;font-weight:normal;top:369.74px;left:-444.05px;width:2000px;text-align:center;transform:scaleX(0.9451);transform-origin:50% 0;-webkit-text-stroke:0.15px #222;">0967064340</div>
<div class="a" style="left:595.4px;top:361.45px;width:196.7px;height:17.85px;overflow:hidden">
<div style="position:absolute;white-space:pre;line-height:0;font-size:11px;color:#1f62bd;font-weight:normal;top:8.29px;left:2.35px;transform:scaleX(1.0326);transform-origin:0 0;text-decoration:underline;text-underline-offset:1.5px;text-decoration-skip-ink:none;text-decoration-thickness:1px;text-decoration-color:#5a8bcc;">lilianapluas12@gmail.com </div>
</div>
<div style="position:absolute;white-space:pre;line-height:0;font-size:11px;color:#222;font-weight:normal;top:369.74px;left:794.5px;transform:scaleX(0.9905);transform-origin:0 0;-webkit-text-stroke:0.15px #222;">La Elvira</div>
<div class="a" style="left:884.6px;top:361.45px;width:126px;height:15.85px;overflow:hidden">
<div style="position:absolute;white-space:pre;line-height:0;font-size:11px;color:#222;font-weight:normal;top:8.29px;left:2.4px;transform:scaleX(0.9905);transform-origin:0 0;-webkit-text-stroke:0.15px #222;">La Elvira</div>
</div>
<div style="position:absolute;white-space:pre;line-height:0;font-size:11px;color:#222;font-weight:normal;top:369.74px;left:1013px;transform:scaleX(1.0511);transform-origin:0 0;-webkit-text-stroke:0.15px #222;">Bachiller</div>
<div style="position:absolute;white-space:pre;line-height:0;font-size:11px;color:#222;font-weight:normal;top:369.74px;left:1101.6px;transform:scaleX(1.0296);transform-origin:0 0;-webkit-text-stroke:0.15px #222;">Sin ocupacion</div>
<div style="position:absolute;white-space:pre;line-height:0;font-size:11px;color:#222;font-weight:normal;top:385.59px;left:-931.42px;width:2000px;text-align:center;transform:scaleX(0.9451);transform-origin:50% 0;-webkit-text-stroke:0.15px #222;">9</div>
<div class="a" style="left:82.75px;top:377.3px;width:221.65px;height:17.85px;overflow:hidden">
<div style="position:absolute;white-space:pre;line-height:0;font-size:11px;color:#222;font-weight:normal;top:8.29px;left:2.8px;transform:scaleX(0.9259);transform-origin:0 0;-webkit-text-stroke:0.15px #222;">BRIONES ANCHUNDIA PAULINA ISABEL</div>
</div>
<div style="position:absolute;white-space:pre;line-height:0;font-size:11px;color:#222;font-weight:normal;top:385.59px;left:-658.1px;width:2000px;text-align:center;transform:scaleX(0.9431);transform-origin:50% 0;-webkit-text-stroke:0.15px #222;">09184252 99</div>
<div style="position:absolute;white-space:pre;line-height:0;font-size:11px;color:#222;font-weight:normal;top:385.59px;left:-578px;width:2000px;text-align:center;transform:scaleX(1.0156);transform-origin:50% 0;-webkit-text-stroke:0.15px #222;">6/7/1976</div>
<div style="position:absolute;white-space:pre;line-height:0;font-size:11px;color:#222;font-weight:normal;top:385.59px;left:-509.45px;width:2000px;text-align:center;transform:scaleX(0.9451);transform-origin:50% 0;-webkit-text-stroke:0.15px #222;">48</div>
<div style="position:absolute;white-space:pre;line-height:0;font-size:11px;color:#222;font-weight:normal;top:385.59px;left:-444.05px;width:2000px;text-align:center;transform:scaleX(0.9451);transform-origin:50% 0;-webkit-text-stroke:0.15px #222;">0990714268</div>
<div class="a" style="left:595.4px;top:377.3px;width:196.7px;height:17.85px;overflow:hidden">
<div style="position:absolute;white-space:pre;line-height:0;font-size:11px;color:#1f62bd;font-weight:normal;top:8.29px;left:2.35px;transform:scaleX(1.0517);transform-origin:0 0;text-decoration:underline;text-underline-offset:1.5px;text-decoration-skip-ink:none;text-decoration-thickness:1px;text-decoration-color:#5a8bcc;">paulinaisabel@hotmail.com </div>
</div>
<div style="position:absolute;white-space:pre;line-height:0;font-size:11px;color:#222;font-weight:normal;top:385.59px;left:794.5px;transform:scaleX(0.9999);transform-origin:0 0;-webkit-text-stroke:0.15px #222;">San Lorenzo</div>
<div class="a" style="left:884.6px;top:377.3px;width:126px;height:15.85px;overflow:hidden">
<div style="position:absolute;white-space:pre;line-height:0;font-size:11px;color:#222;font-weight:normal;top:8.29px;left:2.4px;transform:scaleX(0.9999);transform-origin:0 0;-webkit-text-stroke:0.15px #222;">San Lorenzo</div>
</div>
<div style="position:absolute;white-space:pre;line-height:0;font-size:11px;color:#222;font-weight:normal;top:385.59px;left:1013px;transform:scaleX(1.0511);transform-origin:0 0;-webkit-text-stroke:0.15px #222;">Bachiller</div>
<div style="position:absolute;white-space:pre;line-height:0;font-size:11px;color:#222;font-weight:normal;top:385.59px;left:1101.6px;transform:scaleX(0.9895);transform-origin:0 0;-webkit-text-stroke:0.15px #222;">Ama de Casa</div>
<div style="position:absolute;white-space:pre;line-height:0;font-size:11px;color:#222;font-weight:normal;top:401.44px;left:-931.42px;width:2000px;text-align:center;transform:scaleX(0.9451);transform-origin:50% 0;-webkit-text-stroke:0.15px #222;">10</div>
<div class="a" style="left:82.75px;top:393.15px;width:221.65px;height:17.85px;overflow:hidden">
<div style="position:absolute;white-space:pre;line-height:0;font-size:11px;color:#222;font-weight:normal;top:8.29px;left:2.8px;transform:scaleX(0.8959);transform-origin:0 0;-webkit-text-stroke:0.15px #222;">AROCA PIGUAVE ROSBELY</div>
</div>
<div style="position:absolute;white-space:pre;line-height:0;font-size:11px;color:#222;font-weight:normal;top:401.44px;left:-658.1px;width:2000px;text-align:center;transform:scaleX(0.9451);transform-origin:50% 0;-webkit-text-stroke:0.15px #222;">0927676023</div>
<div style="position:absolute;white-space:pre;line-height:0;font-size:11px;color:#222;font-weight:normal;top:401.44px;left:-578px;width:2000px;text-align:center;transform:scaleX(1.0068);transform-origin:50% 0;-webkit-text-stroke:0.15px #222;">12/8/2002</div>
<div style="position:absolute;white-space:pre;line-height:0;font-size:11px;color:#222;font-weight:normal;top:401.44px;left:-509.45px;width:2000px;text-align:center;transform:scaleX(0.9451);transform-origin:50% 0;-webkit-text-stroke:0.15px #222;">22</div>
<div style="position:absolute;white-space:pre;line-height:0;font-size:11px;color:#222;font-weight:normal;top:401.44px;left:-444.05px;width:2000px;text-align:center;transform:scaleX(0.9451);transform-origin:50% 0;-webkit-text-stroke:0.15px #222;">0993994242</div>
<div class="a" style="left:595.4px;top:393.15px;width:196.7px;height:17.85px;overflow:hidden">
<div style="position:absolute;white-space:pre;line-height:0;font-size:11px;color:#1f62bd;font-weight:normal;top:8.29px;left:2.35px;transform:scaleX(1.027);transform-origin:0 0;text-decoration:underline;text-underline-offset:1.5px;text-decoration-skip-ink:none;text-decoration-thickness:1px;text-decoration-color:#5a8bcc;">arocarosbely104@gmail.com </div>
</div>
<div style="position:absolute;white-space:pre;line-height:0;font-size:11px;color:#222;font-weight:normal;top:401.44px;left:794.5px;transform:scaleX(1.0349);transform-origin:0 0;-webkit-text-stroke:0.15px #222;">Piñal de Abajo</div>
<div class="a" style="left:884.6px;top:393.15px;width:126px;height:15.85px;overflow:hidden">
<div style="position:absolute;white-space:pre;line-height:0;font-size:11px;color:#222;font-weight:normal;top:8.29px;left:2.4px;transform:scaleX(1.0213);transform-origin:0 0;-webkit-text-stroke:0.15px #222;">Frente a la Iglesia Virgen del Cisne</div>
</div>
<div style="position:absolute;white-space:pre;line-height:0;font-size:11px;color:#222;font-weight:normal;top:401.44px;left:1013px;transform:scaleX(1.0416);transform-origin:0 0;-webkit-text-stroke:0.15px #222;">Tercer Nivel</div>
<div style="position:absolute;white-space:pre;line-height:0;font-size:11px;color:#222;font-weight:normal;top:401.44px;left:1101.6px;transform:scaleX(1.0296);transform-origin:0 0;-webkit-text-stroke:0.15px #222;">Sin ocupacion</div>
<div style="position:absolute;white-space:pre;line-height:0;font-size:11px;color:#222;font-weight:normal;top:417.29px;left:-931.42px;width:2000px;text-align:center;transform:scaleX(0.9451);transform-origin:50% 0;-webkit-text-stroke:0.15px #222;">11</div>
<div class="a" style="left:82.75px;top:409px;width:221.65px;height:17.85px;overflow:hidden">
<div style="position:absolute;white-space:pre;line-height:0;font-size:11px;color:#222;font-weight:normal;top:8.29px;left:2.8px;transform:scaleX(0.9429);transform-origin:0 0;-webkit-text-stroke:0.15px #222;">CANTOS ALVARADO IVON MARÍA</div>
</div>
<div style="position:absolute;white-space:pre;line-height:0;font-size:11px;color:#222;font-weight:normal;top:417.29px;left:-658.1px;width:2000px;text-align:center;transform:scaleX(0.9451);transform-origin:50% 0;-webkit-text-stroke:0.15px #222;">0921941407</div>
<div style="position:absolute;white-space:pre;line-height:0;font-size:11px;color:#222;font-weight:normal;top:417.29px;left:-578px;width:2000px;text-align:center;transform:scaleX(1.0156);transform-origin:50% 0;-webkit-text-stroke:0.15px #222;">5/6/1981</div>
<div style="position:absolute;white-space:pre;line-height:0;font-size:11px;color:#222;font-weight:normal;top:417.29px;left:-509.45px;width:2000px;text-align:center;transform:scaleX(0.9451);transform-origin:50% 0;-webkit-text-stroke:0.15px #222;">43</div>
<div style="position:absolute;white-space:pre;line-height:0;font-size:11px;color:#222;font-weight:normal;top:417.29px;left:-444.05px;width:2000px;text-align:center;transform:scaleX(0.9451);transform-origin:50% 0;-webkit-text-stroke:0.15px #222;">0993801562</div>
<div class="a" style="left:595.4px;top:409px;width:196.7px;height:17.85px;overflow:hidden">
<div style="position:absolute;white-space:pre;line-height:0;font-size:11px;color:#1f62bd;font-weight:normal;top:8.29px;left:2.35px;transform:scaleX(1.0334);transform-origin:0 0;text-decoration:underline;text-underline-offset:1.5px;text-decoration-skip-ink:none;text-decoration-thickness:1px;text-decoration-color:#5a8bcc;">ivonmaria1981@gmail.com </div>
</div>
<div style="position:absolute;white-space:pre;line-height:0;font-size:11px;color:#222;font-weight:normal;top:417.29px;left:794.5px;transform:scaleX(1.0539);transform-origin:0 0;-webkit-text-stroke:0.15px #222;">Limonal</div>
<div class="a" style="left:884.6px;top:409px;width:126px;height:15.85px;overflow:hidden">
<div style="position:absolute;white-space:pre;line-height:0;font-size:11px;color:#222;font-weight:normal;top:8.29px;left:2.4px;transform:scaleX(1.0129);transform-origin:0 0;-webkit-text-stroke:0.15px #222;">Calle 10 de agosto</div>
</div>
<div style="position:absolute;white-space:pre;line-height:0;font-size:11px;color:#222;font-weight:normal;top:417.29px;left:1013px;transform:scaleX(0.9936);transform-origin:0 0;-webkit-text-stroke:0.15px #222;">Básico</div>
<div style="position:absolute;white-space:pre;line-height:0;font-size:11px;color:#222;font-weight:normal;top:417.29px;left:1101.6px;transform:scaleX(0.9895);transform-origin:0 0;-webkit-text-stroke:0.15px #222;">Ama de Casa</div>
<div style="position:absolute;white-space:pre;line-height:0;font-size:11px;color:#222;font-weight:normal;top:433.14px;left:-931.42px;width:2000px;text-align:center;transform:scaleX(0.9451);transform-origin:50% 0;-webkit-text-stroke:0.15px #222;">12</div>
<div class="a" style="left:82.75px;top:424.85px;width:221.65px;height:17.85px;overflow:hidden">
<div style="position:absolute;white-space:pre;line-height:0;font-size:11px;color:#222;font-weight:normal;top:8.29px;left:2.8px;transform:scaleX(0.8971);transform-origin:0 0;-webkit-text-stroke:0.15px #222;">MOSQUERA CASTRO INGRED DE JESÚS</div>
</div>
<div style="position:absolute;white-space:pre;line-height:0;font-size:11px;color:#222;font-weight:normal;top:433.14px;left:-658.1px;width:2000px;text-align:center;transform:scaleX(0.9451);transform-origin:50% 0;-webkit-text-stroke:0.15px #222;">0916742968</div>
<div style="position:absolute;white-space:pre;line-height:0;font-size:11px;color:#222;font-weight:normal;top:433.14px;left:-578px;width:2000px;text-align:center;transform:scaleX(1.0068);transform-origin:50% 0;-webkit-text-stroke:0.15px #222;">3/11/1982</div>
<div style="position:absolute;white-space:pre;line-height:0;font-size:11px;color:#222;font-weight:normal;top:433.14px;left:-509.45px;width:2000px;text-align:center;transform:scaleX(0.9451);transform-origin:50% 0;-webkit-text-stroke:0.15px #222;">42</div>
<div style="position:absolute;white-space:pre;line-height:0;font-size:11px;color:#222;font-weight:normal;top:433.14px;left:-444.05px;width:2000px;text-align:center;transform:scaleX(0.9451);transform-origin:50% 0;-webkit-text-stroke:0.15px #222;">0979510111</div>
<div class="a" style="left:595.4px;top:424.85px;width:196.7px;height:17.85px;overflow:hidden">
<div style="position:absolute;white-space:pre;line-height:0;font-size:11px;color:#1f62bd;font-weight:normal;top:8.29px;left:2.35px;transform:scaleX(1.0345);transform-origin:0 0;text-decoration:underline;text-underline-offset:1.5px;text-decoration-skip-ink:none;text-decoration-thickness:1px;text-decoration-color:#5a8bcc;">ingridmos767@gmail.com </div>
</div>
<div style="position:absolute;white-space:pre;line-height:0;font-size:11px;color:#222;font-weight:normal;top:433.14px;left:794.5px;transform:scaleX(1.0113);transform-origin:0 0;-webkit-text-stroke:0.15px #222;">Jesus María</div>
<div class="a" style="left:884.6px;top:424.85px;width:126px;height:15.85px;overflow:hidden">
<div style="position:absolute;white-space:pre;line-height:0;font-size:11px;color:#222;font-weight:normal;top:8.29px;left:2.4px;transform:scaleX(1.0113);transform-origin:0 0;-webkit-text-stroke:0.15px #222;">Jesus María</div>
</div>
<div style="position:absolute;white-space:pre;line-height:0;font-size:11px;color:#222;font-weight:normal;top:433.14px;left:1013px;transform:scaleX(1.0511);transform-origin:0 0;-webkit-text-stroke:0.15px #222;">Bachiller</div>
<div style="position:absolute;white-space:pre;line-height:0;font-size:11px;color:#222;font-weight:normal;top:433.14px;left:1101.6px;transform:scaleX(0.9895);transform-origin:0 0;-webkit-text-stroke:0.15px #222;">Ama de Casa</div>
<div style="position:absolute;white-space:pre;line-height:0;font-size:11px;color:#222;font-weight:normal;top:448.99px;left:-931.42px;width:2000px;text-align:center;transform:scaleX(0.9451);transform-origin:50% 0;-webkit-text-stroke:0.15px #222;">13</div>
<div class="a" style="left:82.75px;top:440.7px;width:221.65px;height:17.85px;overflow:hidden">
<div style="position:absolute;white-space:pre;line-height:0;font-size:11px;color:#222;font-weight:normal;top:8.29px;left:2.8px;transform:scaleX(0.9068);transform-origin:0 0;-webkit-text-stroke:0.15px #222;">PLÚAS JURADO SELENA JOHANA</div>
</div>
<div style="position:absolute;white-space:pre;line-height:0;font-size:11px;color:#222;font-weight:normal;top:448.99px;left:-658.1px;width:2000px;text-align:center;transform:scaleX(0.9451);transform-origin:50% 0;-webkit-text-stroke:0.15px #222;">0929930758</div>
<div style="position:absolute;white-space:pre;line-height:0;font-size:11px;color:#222;font-weight:normal;top:448.99px;left:-578px;width:2000px;text-align:center;transform:scaleX(0.9999);transform-origin:50% 0;-webkit-text-stroke:0.15px #222;">26/11/2003</div>
<div style="position:absolute;white-space:pre;line-height:0;font-size:11px;color:#222;font-weight:normal;top:448.99px;left:-509.45px;width:2000px;text-align:center;transform:scaleX(0.9451);transform-origin:50% 0;-webkit-text-stroke:0.15px #222;">21</div>
<div style="position:absolute;white-space:pre;line-height:0;font-size:11px;color:#222;font-weight:normal;top:448.99px;left:-444.05px;width:2000px;text-align:center;transform:scaleX(0.9451);transform-origin:50% 0;-webkit-text-stroke:0.15px #222;">0994586813</div>
<div class="a" style="left:595.4px;top:440.7px;width:196.7px;height:17.85px;overflow:hidden">
<div style="position:absolute;white-space:pre;line-height:0;font-size:11px;color:#1f62bd;font-weight:normal;top:8.29px;left:2.35px;transform:scaleX(1.015);transform-origin:0 0;text-decoration:underline;text-underline-offset:1.5px;text-decoration-skip-ink:none;text-decoration-thickness:1px;text-decoration-color:#5a8bcc;">selenapluas2003@gmail.com</div>
</div>
<div style="position:absolute;white-space:pre;line-height:0;font-size:11px;color:#222;font-weight:normal;top:448.99px;left:794.5px;transform:scaleX(1.0456);transform-origin:0 0;-webkit-text-stroke:0.15px #222;">Piñal de Arriba</div>
<div class="a" style="left:884.6px;top:440.7px;width:126px;height:15.85px;overflow:hidden">
<div style="position:absolute;white-space:pre;line-height:0;font-size:11px;color:#222;font-weight:normal;top:8.29px;left:2.4px;transform:scaleX(1.0456);transform-origin:0 0;-webkit-text-stroke:0.15px #222;">Piñal de Arriba</div>
</div>
<div style="position:absolute;white-space:pre;line-height:0;font-size:11px;color:#222;font-weight:normal;top:448.99px;left:1013px;transform:scaleX(1.0511);transform-origin:0 0;-webkit-text-stroke:0.15px #222;">Bachiller</div>
<div style="position:absolute;white-space:pre;line-height:0;font-size:11px;color:#222;font-weight:normal;top:448.99px;left:1101.6px;transform:scaleX(0.9895);transform-origin:0 0;-webkit-text-stroke:0.15px #222;">Ama de Casa</div>
<div style="position:absolute;white-space:pre;line-height:0;font-size:11px;color:#222;font-weight:normal;top:464.84px;left:-931.42px;width:2000px;text-align:center;transform:scaleX(0.9451);transform-origin:50% 0;-webkit-text-stroke:0.15px #222;">14</div>
<div class="a" style="left:82.75px;top:456.55px;width:221.65px;height:17.85px;overflow:hidden">
<div style="position:absolute;white-space:pre;line-height:0;font-size:11px;color:#222;font-weight:normal;top:8.29px;left:2.8px;transform:scaleX(0.9331);transform-origin:0 0;-webkit-text-stroke:0.15px #222;">SUÁREZ PITA NIURKA ROMINA</div>
</div>
<div style="position:absolute;white-space:pre;line-height:0;font-size:11px;color:#222;font-weight:normal;top:464.84px;left:-658.1px;width:2000px;text-align:center;transform:scaleX(0.9451);transform-origin:50% 0;-webkit-text-stroke:0.15px #222;">0953386299</div>
<div style="position:absolute;white-space:pre;line-height:0;font-size:11px;color:#222;font-weight:normal;top:464.84px;left:-578px;width:2000px;text-align:center;transform:scaleX(1.0156);transform-origin:50% 0;-webkit-text-stroke:0.15px #222;">2/5/2004</div>
<div style="position:absolute;white-space:pre;line-height:0;font-size:11px;color:#222;font-weight:normal;top:464.84px;left:-509.45px;width:2000px;text-align:center;transform:scaleX(0.9451);transform-origin:50% 0;-webkit-text-stroke:0.15px #222;">20</div>
<div style="position:absolute;white-space:pre;line-height:0;font-size:11px;color:#222;font-weight:normal;top:464.84px;left:-444.05px;width:2000px;text-align:center;transform:scaleX(0.9451);transform-origin:50% 0;-webkit-text-stroke:0.15px #222;">0999024380</div>
<div class="a" style="left:595.4px;top:456.55px;width:196.7px;height:17.85px;overflow:hidden">
<div style="position:absolute;white-space:pre;line-height:0;font-size:11px;color:#1f62bd;font-weight:normal;top:8.29px;left:2.35px;transform:scaleX(1.036);transform-origin:0 0;text-decoration:underline;text-underline-offset:1.5px;text-decoration-skip-ink:none;text-decoration-thickness:1px;text-decoration-color:#5a8bcc;">suareniurka7@gmail.com</div>
</div>
<div style="position:absolute;white-space:pre;line-height:0;font-size:11px;color:#222;font-weight:normal;top:464.84px;left:794.5px;transform:scaleX(1.0539);transform-origin:0 0;-webkit-text-stroke:0.15px #222;">Limonal</div>
<div class="a" style="left:884.6px;top:456.55px;width:126px;height:15.85px;overflow:hidden">
<div style="position:absolute;white-space:pre;line-height:0;font-size:11px;color:#222;font-weight:normal;top:8.29px;left:2.4px;transform:scaleX(1.0576);transform-origin:0 0;-webkit-text-stroke:0.15px #222;">Barrio Centro</div>
</div>
<div style="position:absolute;white-space:pre;line-height:0;font-size:11px;color:#222;font-weight:normal;top:464.84px;left:1013px;transform:scaleX(1.0511);transform-origin:0 0;-webkit-text-stroke:0.15px #222;">Bachiller</div>
<div style="position:absolute;white-space:pre;line-height:0;font-size:11px;color:#222;font-weight:normal;top:464.84px;left:1101.6px;transform:scaleX(1.0538);transform-origin:0 0;-webkit-text-stroke:0.15px #222;">Estudiante</div>
<div style="position:absolute;white-space:pre;line-height:0;font-size:11px;color:#222;font-weight:normal;top:480.69px;left:-931.42px;width:2000px;text-align:center;transform:scaleX(0.9451);transform-origin:50% 0;-webkit-text-stroke:0.15px #222;">15</div>
<div class="a" style="left:82.75px;top:472.4px;width:221.65px;height:17.85px;overflow:hidden">
<div style="position:absolute;white-space:pre;line-height:0;font-size:11px;color:#222;font-weight:normal;top:8.29px;left:2.8px;transform:scaleX(0.8992);transform-origin:0 0;-webkit-text-stroke:0.15px #222;">CASTRO ANZULES AGUEDA CECILIA</div>
</div>
<div style="position:absolute;white-space:pre;line-height:0;font-size:11px;color:#222;font-weight:normal;top:480.69px;left:-658.1px;width:2000px;text-align:center;transform:scaleX(0.9451);transform-origin:50% 0;-webkit-text-stroke:0.15px #222;">0925949455</div>
<div style="position:absolute;white-space:pre;line-height:0;font-size:11px;color:#222;font-weight:normal;top:480.69px;left:-578px;width:2000px;text-align:center;transform:scaleX(1.0156);transform-origin:50% 0;-webkit-text-stroke:0.15px #222;">3/2/1988</div>
<div style="position:absolute;white-space:pre;line-height:0;font-size:11px;color:#222;font-weight:normal;top:480.69px;left:-509.45px;width:2000px;text-align:center;transform:scaleX(0.9451);transform-origin:50% 0;-webkit-text-stroke:0.15px #222;">36</div>
<div style="position:absolute;white-space:pre;line-height:0;font-size:11px;color:#222;font-weight:normal;top:480.69px;left:-444.05px;width:2000px;text-align:center;transform:scaleX(0.9451);transform-origin:50% 0;-webkit-text-stroke:0.15px #222;">0990709391</div>
<div class="a" style="left:595.4px;top:472.4px;width:196.7px;height:17.85px;overflow:hidden">
<div style="position:absolute;white-space:pre;line-height:0;font-size:11px;color:#1f62bd;font-weight:normal;top:8.29px;left:2.35px;transform:scaleX(1.0208);transform-origin:0 0;text-decoration:underline;text-underline-offset:1.5px;text-decoration-skip-ink:none;text-decoration-thickness:1px;text-decoration-color:#5a8bcc;">ceciliaanzules9@gmail.com </div>
</div>
<div style="position:absolute;white-space:pre;line-height:0;font-size:11px;color:#222;font-weight:normal;top:480.69px;left:794.5px;transform:scaleX(0.9999);transform-origin:0 0;-webkit-text-stroke:0.15px #222;">San Lorenzo</div>
<div class="a" style="left:884.6px;top:472.4px;width:126px;height:15.85px;overflow:hidden">
<div style="position:absolute;white-space:pre;line-height:0;font-size:11px;color:#222;font-weight:normal;top:8.29px;left:2.4px;transform:scaleX(1.0305);transform-origin:0 0;-webkit-text-stroke:0.15px #222;">Frente a la Gasolinera</div>
</div>
<div style="position:absolute;white-space:pre;line-height:0;font-size:11px;color:#222;font-weight:normal;top:480.69px;left:1013px;transform:scaleX(0.9936);transform-origin:0 0;-webkit-text-stroke:0.15px #222;">Básico</div>
<div style="position:absolute;white-space:pre;line-height:0;font-size:11px;color:#222;font-weight:normal;top:480.69px;left:1101.6px;transform:scaleX(0.9895);transform-origin:0 0;-webkit-text-stroke:0.15px #222;">Ama de Casa</div>
<div style="position:absolute;white-space:pre;line-height:0;font-size:11px;color:#222;font-weight:normal;top:496.54px;left:-931.42px;width:2000px;text-align:center;transform:scaleX(0.9451);transform-origin:50% 0;-webkit-text-stroke:0.15px #222;">16</div>
<div class="a" style="left:82.75px;top:488.25px;width:221.65px;height:17.85px;overflow:hidden">
<div style="position:absolute;white-space:pre;line-height:0;font-size:11px;color:#222;font-weight:normal;top:8.29px;left:2.8px;transform:scaleX(0.9277);transform-origin:0 0;-webkit-text-stroke:0.15px #222;">ZÚÑIGA GARCÍA NICOL</div>
</div>
<div style="position:absolute;white-space:pre;line-height:0;font-size:11px;color:#222;font-weight:normal;top:496.54px;left:-658.1px;width:2000px;text-align:center;transform:scaleX(0.9451);transform-origin:50% 0;-webkit-text-stroke:0.15px #222;">0958483646</div>
<div style="position:absolute;white-space:pre;line-height:0;font-size:11px;color:#222;font-weight:normal;top:496.54px;left:-578px;width:2000px;text-align:center;transform:scaleX(1.0156);transform-origin:50% 0;-webkit-text-stroke:0.15px #222;">4/8/2006</div>
<div style="position:absolute;white-space:pre;line-height:0;font-size:11px;color:#222;font-weight:normal;top:496.54px;left:-509.45px;width:2000px;text-align:center;transform:scaleX(0.9451);transform-origin:50% 0;-webkit-text-stroke:0.15px #222;">18</div>
<div style="position:absolute;white-space:pre;line-height:0;font-size:11px;color:#222;font-weight:normal;top:496.54px;left:-444.05px;width:2000px;text-align:center;transform:scaleX(0.9451);transform-origin:50% 0;-webkit-text-stroke:0.15px #222;">0960212300</div>
<div class="a" style="left:595.4px;top:488.25px;width:196.7px;height:17.85px;overflow:hidden">
<div style="position:absolute;white-space:pre;line-height:0;font-size:11px;color:#1f62bd;font-weight:normal;top:8.29px;left:2.35px;transform:scaleX(1.0265);transform-origin:0 0;text-decoration:underline;text-underline-offset:1.5px;text-decoration-skip-ink:none;text-decoration-thickness:1px;text-decoration-color:#5a8bcc;">nicoyzu12@gmail.com</div>
</div>
<div style="position:absolute;white-space:pre;line-height:0;font-size:11px;color:#222;font-weight:normal;top:496.54px;left:794.5px;transform:scaleX(1.0539);transform-origin:0 0;-webkit-text-stroke:0.15px #222;">Limonal</div>
<div class="a" style="left:884.6px;top:488.25px;width:126px;height:15.85px;overflow:hidden">
<div style="position:absolute;white-space:pre;line-height:0;font-size:11px;color:#222;font-weight:normal;top:8.29px;left:2.4px;transform:scaleX(1.0366);transform-origin:0 0;-webkit-text-stroke:0.15px #222;">Calle 8 de diciembre</div>
</div>
<div style="position:absolute;white-space:pre;line-height:0;font-size:11px;color:#222;font-weight:normal;top:496.54px;left:1013px;transform:scaleX(1.0511);transform-origin:0 0;-webkit-text-stroke:0.15px #222;">Bachiller</div>
<div style="position:absolute;white-space:pre;line-height:0;font-size:11px;color:#222;font-weight:normal;top:496.54px;left:1101.6px;transform:scaleX(1.0538);transform-origin:0 0;-webkit-text-stroke:0.15px #222;">Estudiante</div>
<div style="position:absolute;white-space:pre;line-height:0;font-size:11px;color:#222;font-weight:normal;top:496.54px;left:1289.5px;transform:scaleX(1.0123);transform-origin:0 0;-webkit-text-stroke:0.15px #222;">Cédula</div>
<div style="position:absolute;white-space:pre;line-height:0;font-size:11px;color:#222;font-weight:normal;top:512.39px;left:-931.42px;width:2000px;text-align:center;transform:scaleX(0.9451);transform-origin:50% 0;-webkit-text-stroke:0.15px #222;">17</div>
<div class="a" style="left:82.75px;top:504.1px;width:221.65px;height:17.85px;overflow:hidden">
<div style="position:absolute;white-space:pre;line-height:0;font-size:11px;color:#222;font-weight:normal;top:8.29px;left:2.8px;transform:scaleX(0.9043);transform-origin:0 0;-webkit-text-stroke:0.15px #222;">CASTRO ESPINOZA ANDREINA YULEXI</div>
</div>
<div style="position:absolute;white-space:pre;line-height:0;font-size:11px;color:#222;font-weight:normal;top:512.39px;left:-658.1px;width:2000px;text-align:center;transform:scaleX(0.9451);transform-origin:50% 0;-webkit-text-stroke:0.15px #222;">0940922511</div>
<div style="position:absolute;white-space:pre;line-height:0;font-size:11px;color:#222;font-weight:normal;top:512.39px;left:-578px;width:2000px;text-align:center;transform:scaleX(1.0156);transform-origin:50% 0;-webkit-text-stroke:0.15px #222;">1/8/1993</div>
<div style="position:absolute;white-space:pre;line-height:0;font-size:11px;color:#222;font-weight:normal;top:512.39px;left:-509.45px;width:2000px;text-align:center;transform:scaleX(0.9451);transform-origin:50% 0;-webkit-text-stroke:0.15px #222;">31</div>
<div style="position:absolute;white-space:pre;line-height:0;font-size:11px;color:#222;font-weight:normal;top:512.39px;left:-444.05px;width:2000px;text-align:center;transform:scaleX(0.9451);transform-origin:50% 0;-webkit-text-stroke:0.15px #222;">0990198255</div>
<div class="a" style="left:595.4px;top:504.1px;width:196.7px;height:17.85px;overflow:hidden">
<div style="position:absolute;white-space:pre;line-height:0;font-size:11px;color:#1f62bd;font-weight:normal;top:8.29px;left:2.35px;transform:scaleX(1.0307);transform-origin:0 0;text-decoration:underline;text-underline-offset:1.5px;text-decoration-skip-ink:none;text-decoration-thickness:1px;text-decoration-color:#5a8bcc;">andreina1993castro@gmail.com</div>
</div>
<div style="position:absolute;white-space:pre;line-height:0;font-size:11px;color:#222;font-weight:normal;top:512.39px;left:794.5px;transform:scaleX(1.0349);transform-origin:0 0;-webkit-text-stroke:0.15px #222;">Piñal de Abajo</div>
<div class="a" style="left:884.6px;top:504.1px;width:126px;height:15.85px;overflow:hidden">
<div style="position:absolute;white-space:pre;line-height:0;font-size:11px;color:#222;font-weight:normal;top:8.29px;left:2.4px;transform:scaleX(0.9667);transform-origin:0 0;-webkit-text-stroke:0.15px #222;">La Isla</div>
</div>
<div style="position:absolute;white-space:pre;line-height:0;font-size:11px;color:#222;font-weight:normal;top:512.39px;left:1013px;transform:scaleX(1.0511);transform-origin:0 0;-webkit-text-stroke:0.15px #222;">Bachiller</div>
<div style="position:absolute;white-space:pre;line-height:0;font-size:11px;color:#222;font-weight:normal;top:512.39px;left:1101.6px;transform:scaleX(0.9895);transform-origin:0 0;-webkit-text-stroke:0.15px #222;">Ama de Casa</div>
<div style="position:absolute;white-space:pre;line-height:0;font-size:11px;color:#222;font-weight:normal;top:528.24px;left:-931.42px;width:2000px;text-align:center;transform:scaleX(0.9451);transform-origin:50% 0;-webkit-text-stroke:0.15px #222;">18</div>
<div class="a" style="left:82.75px;top:519.95px;width:221.65px;height:17.85px;overflow:hidden">
<div style="position:absolute;white-space:pre;line-height:0;font-size:11px;color:#222;font-weight:normal;top:8.29px;left:2.8px;transform:scaleX(0.9304);transform-origin:0 0;-webkit-text-stroke:0.15px #222;">AMADOR CABRERA MARÍA BELÉN</div>
</div>
<div style="position:absolute;white-space:pre;line-height:0;font-size:11px;color:#222;font-weight:normal;top:528.24px;left:-658.1px;width:2000px;text-align:center;transform:scaleX(0.9451);transform-origin:50% 0;-webkit-text-stroke:0.15px #222;">0956930788</div>
<div style="position:absolute;white-space:pre;line-height:0;font-size:11px;color:#222;font-weight:normal;top:528.24px;left:-578px;width:2000px;text-align:center;transform:scaleX(1.0156);transform-origin:50% 0;-webkit-text-stroke:0.15px #222;">4/7/2003</div>
<div style="position:absolute;white-space:pre;line-height:0;font-size:11px;color:#222;font-weight:normal;top:528.24px;left:-509.45px;width:2000px;text-align:center;transform:scaleX(0.9451);transform-origin:50% 0;-webkit-text-stroke:0.15px #222;">21</div>
<div style="position:absolute;white-space:pre;line-height:0;font-size:11px;color:#222;font-weight:normal;top:528.24px;left:-444.05px;width:2000px;text-align:center;transform:scaleX(0.9451);transform-origin:50% 0;-webkit-text-stroke:0.15px #222;">0981371049</div>
<div class="a" style="left:595.4px;top:519.95px;width:196.7px;height:17.85px;overflow:hidden">
<div style="position:absolute;white-space:pre;line-height:0;font-size:11px;color:#1f62bd;font-weight:normal;top:8.29px;left:2.35px;transform:scaleX(1.0391);transform-origin:0 0;text-decoration:underline;text-underline-offset:1.5px;text-decoration-skip-ink:none;text-decoration-thickness:1px;text-decoration-color:#5a8bcc;">amadorbelen17@gmail.com</div>
</div>
<div style="position:absolute;white-space:pre;line-height:0;font-size:11px;color:#222;font-weight:normal;top:528.24px;left:794.5px;transform:scaleX(1.0349);transform-origin:0 0;-webkit-text-stroke:0.15px #222;">Piñal de Abajo</div>
<div class="a" style="left:884.6px;top:519.95px;width:126px;height:15.85px;overflow:hidden">
<div style="position:absolute;white-space:pre;line-height:0;font-size:11px;color:#222;font-weight:normal;top:8.29px;left:2.4px;transform:scaleX(1.0321);transform-origin:0 0;-webkit-text-stroke:0.15px #222;">Los Almendros</div>
</div>
<div style="position:absolute;white-space:pre;line-height:0;font-size:11px;color:#222;font-weight:normal;top:528.24px;left:1013px;transform:scaleX(1.0416);transform-origin:0 0;-webkit-text-stroke:0.15px #222;">Tercer Nivel</div>
<div style="position:absolute;white-space:pre;line-height:0;font-size:11px;color:#222;font-weight:normal;top:528.24px;left:1101.6px;transform:scaleX(1.0538);transform-origin:0 0;-webkit-text-stroke:0.15px #222;">Estudiante</div>
<div style="position:absolute;white-space:pre;line-height:0;font-size:11px;color:#222;font-weight:normal;top:544.09px;left:-931.42px;width:2000px;text-align:center;transform:scaleX(0.9451);transform-origin:50% 0;-webkit-text-stroke:0.15px #222;">19</div>
<div class="a" style="left:82.75px;top:535.8px;width:221.65px;height:17.85px;overflow:hidden">
<div style="position:absolute;white-space:pre;line-height:0;font-size:11px;color:#222;font-weight:normal;top:8.29px;left:2.8px;transform:scaleX(0.8862);transform-origin:0 0;-webkit-text-stroke:0.15px #222;">ESPINOZA CASTRO ROSA DE LOS ANGELES</div>
</div>
<div style="position:absolute;white-space:pre;line-height:0;font-size:11px;color:#222;font-weight:normal;top:544.09px;left:-658.1px;width:2000px;text-align:center;transform:scaleX(0.9451);transform-origin:50% 0;-webkit-text-stroke:0.15px #222;">0922274170</div>
<div style="position:absolute;white-space:pre;line-height:0;font-size:11px;color:#222;font-weight:normal;top:544.09px;left:-578px;width:2000px;text-align:center;transform:scaleX(1.0068);transform-origin:50% 0;-webkit-text-stroke:0.15px #222;">25/3/1986</div>
<div style="position:absolute;white-space:pre;line-height:0;font-size:11px;color:#222;font-weight:normal;top:544.09px;left:-509.45px;width:2000px;text-align:center;transform:scaleX(0.9451);transform-origin:50% 0;-webkit-text-stroke:0.15px #222;">38</div>
<div style="position:absolute;white-space:pre;line-height:0;font-size:11px;color:#222;font-weight:normal;top:544.09px;left:-444.05px;width:2000px;text-align:center;transform:scaleX(0.9451);transform-origin:50% 0;-webkit-text-stroke:0.15px #222;">0985054693</div>
<div class="a" style="left:595.4px;top:535.8px;width:196.7px;height:17.85px;overflow:hidden">
<div style="position:absolute;white-space:pre;line-height:0;font-size:11px;color:#1f62bd;font-weight:normal;top:8.29px;left:2.35px;transform:scaleX(1.0267);transform-origin:0 0;text-decoration:underline;text-underline-offset:1.5px;text-decoration-skip-ink:none;text-decoration-thickness:1px;text-decoration-color:#5a8bcc;">rositaespinoza103@gmail.com</div>
</div>
<div style="position:absolute;white-space:pre;line-height:0;font-size:11px;color:#222;font-weight:normal;top:544.09px;left:794.5px;transform:scaleX(1.0539);transform-origin:0 0;-webkit-text-stroke:0.15px #222;">Limonal</div>
<div class="a" style="left:884.6px;top:535.8px;width:126px;height:15.85px;overflow:hidden">
<div style="position:absolute;white-space:pre;line-height:0;font-size:11px;color:#222;font-weight:normal;top:8.29px;left:2.4px;transform:scaleX(1.045);transform-origin:0 0;-webkit-text-stroke:0.15px #222;">Nuevo Amanecer</div>
</div>
<div style="position:absolute;white-space:pre;line-height:0;font-size:11px;color:#222;font-weight:normal;top:544.09px;left:1013px;transform:scaleX(1.0511);transform-origin:0 0;-webkit-text-stroke:0.15px #222;">Bachiller</div>
<div style="position:absolute;white-space:pre;line-height:0;font-size:11px;color:#222;font-weight:normal;top:544.09px;left:1101.6px;transform:scaleX(0.9895);transform-origin:0 0;-webkit-text-stroke:0.15px #222;">Ama de Casa</div>
<div style="position:absolute;white-space:pre;line-height:0;font-size:11px;color:#222;font-weight:normal;top:559.94px;left:-931.42px;width:2000px;text-align:center;transform:scaleX(0.9451);transform-origin:50% 0;-webkit-text-stroke:0.15px #222;">20</div>
<div class="a" style="left:82.75px;top:551.65px;width:221.65px;height:17.85px;overflow:hidden">
<div style="position:absolute;white-space:pre;line-height:0;font-size:11px;color:#222;font-weight:normal;top:8.29px;left:2.8px;transform:scaleX(0.9029);transform-origin:0 0;-webkit-text-stroke:0.15px #222;">PIBAQUE DUQUE SHEYLA SKARLETH</div>
</div>
<div style="position:absolute;white-space:pre;line-height:0;font-size:11px;color:#222;font-weight:normal;top:559.94px;left:-658.1px;width:2000px;text-align:center;transform:scaleX(0.9451);transform-origin:50% 0;-webkit-text-stroke:0.15px #222;">0957925548</div>
<div style="position:absolute;white-space:pre;line-height:0;font-size:11px;color:#222;font-weight:normal;top:559.94px;left:-578px;width:2000px;text-align:center;transform:scaleX(1.0068);transform-origin:50% 0;-webkit-text-stroke:0.15px #222;">5/10/2002</div>
<div style="position:absolute;white-space:pre;line-height:0;font-size:11px;color:#222;font-weight:normal;top:559.94px;left:-509.45px;width:2000px;text-align:center;transform:scaleX(0.9451);transform-origin:50% 0;-webkit-text-stroke:0.15px #222;">22</div>
<div style="position:absolute;white-space:pre;line-height:0;font-size:11px;color:#222;font-weight:normal;top:559.94px;left:-444.05px;width:2000px;text-align:center;transform:scaleX(0.9451);transform-origin:50% 0;-webkit-text-stroke:0.15px #222;">0980316072</div>
<div class="a" style="left:595.4px;top:551.65px;width:196.7px;height:17.85px;overflow:hidden">
<div style="position:absolute;white-space:pre;line-height:0;font-size:11px;color:#1f62bd;font-weight:normal;top:8.29px;left:2.35px;transform:scaleX(1.0479);transform-origin:0 0;text-decoration:underline;text-underline-offset:1.5px;text-decoration-skip-ink:none;text-decoration-thickness:1px;text-decoration-color:#5a8bcc;">skarlethduque@gmail.com</div>
</div>
<div style="position:absolute;white-space:pre;line-height:0;font-size:11px;color:#222;font-weight:normal;top:559.94px;left:794.5px;transform:scaleX(1.0539);transform-origin:0 0;-webkit-text-stroke:0.15px #222;">Limonal</div>
<div class="a" style="left:884.6px;top:551.65px;width:126px;height:15.85px;overflow:hidden">
<div style="position:absolute;white-space:pre;line-height:0;font-size:11px;color:#222;font-weight:normal;top:8.29px;left:2.4px;transform:scaleX(1.0144);transform-origin:0 0;-webkit-text-stroke:0.15px #222;">Vía Piñal</div>
</div>
<div style="position:absolute;white-space:pre;line-height:0;font-size:11px;color:#222;font-weight:normal;top:559.94px;left:1013px;transform:scaleX(1.0511);transform-origin:0 0;-webkit-text-stroke:0.15px #222;">Bachiller</div>
<div style="position:absolute;white-space:pre;line-height:0;font-size:11px;color:#222;font-weight:normal;top:559.94px;left:1101.6px;transform:scaleX(0.9895);transform-origin:0 0;-webkit-text-stroke:0.15px #222;">Ama de Casa</div>
<div style="position:absolute;white-space:pre;line-height:0;font-size:11px;color:#222;font-weight:normal;top:575.79px;left:-931.42px;width:2000px;text-align:center;transform:scaleX(0.9451);transform-origin:50% 0;-webkit-text-stroke:0.15px #222;">21</div>
<div class="a" style="left:82.75px;top:567.5px;width:221.65px;height:17.85px;overflow:hidden">
<div style="position:absolute;white-space:pre;line-height:0;font-size:11px;color:#222;font-weight:normal;top:8.29px;left:2.8px;transform:scaleX(0.9485);transform-origin:0 0;-webkit-text-stroke:0.15px #222;">ROMÁN MORA SOLANGE</div>
</div>
<div style="position:absolute;white-space:pre;line-height:0;font-size:11px;color:#222;font-weight:normal;top:575.79px;left:-658.1px;width:2000px;text-align:center;transform:scaleX(0.9451);transform-origin:50% 0;-webkit-text-stroke:0.15px #222;">0957069446</div>
<div style="position:absolute;white-space:pre;line-height:0;font-size:11px;color:#222;font-weight:normal;top:575.79px;left:-578px;width:2000px;text-align:center;transform:scaleX(0.9999);transform-origin:50% 0;-webkit-text-stroke:0.15px #222;">27/11/2002</div>
<div style="position:absolute;white-space:pre;line-height:0;font-size:11px;color:#222;font-weight:normal;top:575.79px;left:-509.45px;width:2000px;text-align:center;transform:scaleX(0.9451);transform-origin:50% 0;-webkit-text-stroke:0.15px #222;">22</div>
<div style="position:absolute;white-space:pre;line-height:0;font-size:11px;color:#222;font-weight:normal;top:575.79px;left:-444.05px;width:2000px;text-align:center;transform:scaleX(0.9451);transform-origin:50% 0;-webkit-text-stroke:0.15px #222;">0988524238</div>
<div class="a" style="left:595.4px;top:567.5px;width:196.7px;height:17.85px;overflow:hidden">
<div style="position:absolute;white-space:pre;line-height:0;font-size:11px;color:#1f62bd;font-weight:normal;top:8.29px;left:2.35px;transform:scaleX(1.031);transform-origin:0 0;text-decoration:underline;text-underline-offset:1.5px;text-decoration-skip-ink:none;text-decoration-thickness:1px;text-decoration-color:#5a8bcc;">solangeroman41@gmail.com</div>
</div>
<div style="position:absolute;white-space:pre;line-height:0;font-size:11px;color:#222;font-weight:normal;top:575.79px;left:794.5px;transform:scaleX(0.9999);transform-origin:0 0;-webkit-text-stroke:0.15px #222;">San Lorenzo</div>
<div class="a" style="left:884.6px;top:567.5px;width:126px;height:15.85px;overflow:hidden">
<div style="position:absolute;white-space:pre;line-height:0;font-size:11px;color:#222;font-weight:normal;top:8.29px;left:2.4px;transform:scaleX(1.0301);transform-origin:0 0;-webkit-text-stroke:0.15px #222;">A lado de la Gasolinera</div>
</div>
<div style="position:absolute;white-space:pre;line-height:0;font-size:11px;color:#222;font-weight:normal;top:575.79px;left:1013px;transform:scaleX(1.0511);transform-origin:0 0;-webkit-text-stroke:0.15px #222;">Bachiller</div>
<div style="position:absolute;white-space:pre;line-height:0;font-size:11px;color:#222;font-weight:normal;top:575.79px;left:1101.6px;transform:scaleX(1.0538);transform-origin:0 0;-webkit-text-stroke:0.15px #222;">Estudiante</div>
<div style="position:absolute;white-space:pre;line-height:0;font-size:11px;color:#222;font-weight:normal;top:575.79px;left:1289.5px;transform:scaleX(1.0123);transform-origin:0 0;-webkit-text-stroke:0.15px #222;">Cédula</div>
<div style="position:absolute;white-space:pre;line-height:0;font-size:11px;color:#222;font-weight:normal;top:591.64px;left:-931.42px;width:2000px;text-align:center;transform:scaleX(0.9451);transform-origin:50% 0;-webkit-text-stroke:0.15px #222;">22</div>
<div class="a" style="left:82.75px;top:583.35px;width:221.65px;height:17.85px;overflow:hidden">
<div style="position:absolute;white-space:pre;line-height:0;font-size:11px;color:#222;font-weight:normal;top:8.29px;left:2.8px;transform:scaleX(0.9277);transform-origin:0 0;-webkit-text-stroke:0.15px #222;">VÁSQUEZ LEÓN ANA GEOMAYRA</div>
</div>
<div style="position:absolute;white-space:pre;line-height:0;font-size:11px;color:#222;font-weight:normal;top:591.64px;left:-658.1px;width:2000px;text-align:center;transform:scaleX(0.9451);transform-origin:50% 0;-webkit-text-stroke:0.15px #222;">0923244784</div>
<div style="position:absolute;white-space:pre;line-height:0;font-size:11px;color:#222;font-weight:normal;top:591.64px;left:-578px;width:2000px;text-align:center;transform:scaleX(1.0068);transform-origin:50% 0;-webkit-text-stroke:0.15px #222;">18/4/1989</div>
<div style="position:absolute;white-space:pre;line-height:0;font-size:11px;color:#222;font-weight:normal;top:591.64px;left:-509.45px;width:2000px;text-align:center;transform:scaleX(0.9451);transform-origin:50% 0;-webkit-text-stroke:0.15px #222;">35</div>
<div style="position:absolute;white-space:pre;line-height:0;font-size:11px;color:#222;font-weight:normal;top:591.64px;left:-444.05px;width:2000px;text-align:center;transform:scaleX(0.9451);transform-origin:50% 0;-webkit-text-stroke:0.15px #222;">0981485146</div>
<div class="a" style="left:595.4px;top:583.35px;width:196.7px;height:17.85px;overflow:hidden">
<div style="position:absolute;white-space:pre;line-height:0;font-size:11px;color:#1f62bd;font-weight:normal;top:8.29px;left:2.35px;transform:scaleX(1.0272);transform-origin:0 0;text-decoration:underline;text-underline-offset:1.5px;text-decoration-skip-ink:none;text-decoration-thickness:1px;text-decoration-color:#5a8bcc;">anageomayravasquezleon@gmail.com</div>
</div>
<div style="position:absolute;white-space:pre;line-height:0;font-size:11px;color:#222;font-weight:normal;top:591.64px;left:794.5px;transform:scaleX(1.0601);transform-origin:0 0;-webkit-text-stroke:0.15px #222;">Flor de María</div>
<div class="a" style="left:884.6px;top:583.35px;width:126px;height:15.85px;overflow:hidden">
<div style="position:absolute;white-space:pre;line-height:0;font-size:11px;color:#222;font-weight:normal;top:8.29px;left:2.4px;transform:scaleX(1.0601);transform-origin:0 0;-webkit-text-stroke:0.15px #222;">Flor de María</div>
</div>
<div style="position:absolute;white-space:pre;line-height:0;font-size:11px;color:#222;font-weight:normal;top:591.64px;left:1013px;transform:scaleX(1.0511);transform-origin:0 0;-webkit-text-stroke:0.15px #222;">Bachiller</div>
<div style="position:absolute;white-space:pre;line-height:0;font-size:11px;color:#222;font-weight:normal;top:591.64px;left:1101.6px;transform:scaleX(1.0538);transform-origin:0 0;-webkit-text-stroke:0.15px #222;">Estudiante</div>
<div style="position:absolute;white-space:pre;line-height:0;font-size:11px;color:#222;font-weight:normal;top:607.49px;left:-931.42px;width:2000px;text-align:center;transform:scaleX(0.9451);transform-origin:50% 0;-webkit-text-stroke:0.15px #222;">23</div>
<div class="a" style="left:82.75px;top:599.2px;width:221.65px;height:17.85px;overflow:hidden">
<div style="position:absolute;white-space:pre;line-height:0;font-size:11px;color:#222;font-weight:normal;top:8.29px;left:2.8px;transform:scaleX(0.8843);transform-origin:0 0;-webkit-text-stroke:0.15px #222;">CORTÉZ CORTÉZ KARLA ROSARIO</div>
</div>
<div style="position:absolute;white-space:pre;line-height:0;font-size:11px;color:#222;font-weight:normal;top:607.49px;left:-658.1px;width:2000px;text-align:center;transform:scaleX(0.9451);transform-origin:50% 0;-webkit-text-stroke:0.15px #222;">0926983743</div>
<div style="position:absolute;white-space:pre;line-height:0;font-size:11px;color:#222;font-weight:normal;top:607.49px;left:-578px;width:2000px;text-align:center;transform:scaleX(1.0068);transform-origin:50% 0;-webkit-text-stroke:0.15px #222;">13/3/1992</div>
<div style="position:absolute;white-space:pre;line-height:0;font-size:11px;color:#222;font-weight:normal;top:607.49px;left:-509.45px;width:2000px;text-align:center;transform:scaleX(0.9451);transform-origin:50% 0;-webkit-text-stroke:0.15px #222;">32</div>
<div style="position:absolute;white-space:pre;line-height:0;font-size:11px;color:#222;font-weight:normal;top:607.49px;left:-444.05px;width:2000px;text-align:center;transform:scaleX(0.9451);transform-origin:50% 0;-webkit-text-stroke:0.15px #222;">0985402148</div>
<div class="a" style="left:595.4px;top:599.2px;width:196.7px;height:17.85px;overflow:hidden">
<div style="position:absolute;white-space:pre;line-height:0;font-size:11px;color:#1f62bd;font-weight:normal;top:8.29px;left:2.35px;transform:scaleX(1.0366);transform-origin:0 0;text-decoration:underline;text-underline-offset:1.5px;text-decoration-skip-ink:none;text-decoration-thickness:1px;text-decoration-color:#5a8bcc;">thaizcortez17@gmail.com</div>
</div>
<div style="position:absolute;white-space:pre;line-height:0;font-size:11px;color:#222;font-weight:normal;top:607.49px;left:794.5px;transform:scaleX(1.0539);transform-origin:0 0;-webkit-text-stroke:0.15px #222;">Limonal</div>
<div class="a" style="left:884.6px;top:599.2px;width:126px;height:15.85px;overflow:hidden">
<div style="position:absolute;white-space:pre;line-height:0;font-size:11px;color:#222;font-weight:normal;top:8.29px;left:2.4px;transform:scaleX(1.0576);transform-origin:0 0;-webkit-text-stroke:0.15px #222;">Barrio Centro</div>
</div>
<div style="position:absolute;white-space:pre;line-height:0;font-size:11px;color:#222;font-weight:normal;top:607.49px;left:1013px;transform:scaleX(1.0511);transform-origin:0 0;-webkit-text-stroke:0.15px #222;">Bachiller</div>
<div style="position:absolute;white-space:pre;line-height:0;font-size:11px;color:#222;font-weight:normal;top:607.49px;left:1101.6px;transform:scaleX(1.0538);transform-origin:0 0;-webkit-text-stroke:0.15px #222;">Estudiante</div>
<div style="position:absolute;white-space:pre;line-height:0;font-size:11px;color:#222;font-weight:normal;top:607.49px;left:1289.5px;transform:scaleX(1.0446);transform-origin:0 0;-webkit-text-stroke:0.15px #222;">Firma, cédula e inasistente</div>
<div style="position:absolute;white-space:pre;line-height:0;font-size:11px;color:#222;font-weight:normal;top:623.34px;left:-931.42px;width:2000px;text-align:center;transform:scaleX(0.9451);transform-origin:50% 0;-webkit-text-stroke:0.15px #222;">24</div>
<div class="a" style="left:82.75px;top:615.05px;width:221.65px;height:17.85px;overflow:hidden">
<div style="position:absolute;white-space:pre;line-height:0;font-size:11px;color:#222;font-weight:normal;top:8.29px;left:2.8px;transform:scaleX(0.9265);transform-origin:0 0;-webkit-text-stroke:0.15px #222;">RUGEL BONILLA NOEMÍ NICOLE</div>
</div>
<div style="position:absolute;white-space:pre;line-height:0;font-size:11px;color:#222;font-weight:normal;top:623.34px;left:-658.1px;width:2000px;text-align:center;transform:scaleX(0.9451);transform-origin:50% 0;-webkit-text-stroke:0.15px #222;">0942166695</div>
<div style="position:absolute;white-space:pre;line-height:0;font-size:11px;color:#222;font-weight:normal;top:623.34px;left:-578px;width:2000px;text-align:center;transform:scaleX(1.0068);transform-origin:50% 0;-webkit-text-stroke:0.15px #222;">16/7/1999</div>
<div style="position:absolute;white-space:pre;line-height:0;font-size:11px;color:#222;font-weight:normal;top:623.34px;left:-509.45px;width:2000px;text-align:center;transform:scaleX(0.9451);transform-origin:50% 0;-webkit-text-stroke:0.15px #222;">25</div>
<div style="position:absolute;white-space:pre;line-height:0;font-size:11px;color:#222;font-weight:normal;top:623.34px;left:-444.05px;width:2000px;text-align:center;transform:scaleX(0.9451);transform-origin:50% 0;-webkit-text-stroke:0.15px #222;">0981725662</div>
<div class="a" style="left:595.4px;top:615.05px;width:196.7px;height:17.85px;overflow:hidden">
<div style="position:absolute;white-space:pre;line-height:0;font-size:11px;color:#1f62bd;font-weight:normal;top:8.29px;left:2.35px;transform:scaleX(1.0505);transform-origin:0 0;text-decoration:underline;text-underline-offset:1.5px;text-decoration-skip-ink:none;text-decoration-thickness:1px;text-decoration-color:#5a8bcc;">noemirugel@gmail.com </div>
</div>
<div style="position:absolute;white-space:pre;line-height:0;font-size:11px;color:#222;font-weight:normal;top:623.34px;left:794.5px;transform:scaleX(1.001);transform-origin:0 0;-webkit-text-stroke:0.15px #222;">Rancho Lopez</div>
<div class="a" style="left:884.6px;top:615.05px;width:126px;height:15.85px;overflow:hidden">
<div style="position:absolute;white-space:pre;line-height:0;font-size:11px;color:#222;font-weight:normal;top:8.29px;left:2.4px;transform:scaleX(1.001);transform-origin:0 0;-webkit-text-stroke:0.15px #222;">Rancho Lopez</div>
</div>
<div style="position:absolute;white-space:pre;line-height:0;font-size:11px;color:#222;font-weight:normal;top:623.34px;left:1013px;transform:scaleX(1.0511);transform-origin:0 0;-webkit-text-stroke:0.15px #222;">Bachiller</div>
<div style="position:absolute;white-space:pre;line-height:0;font-size:11px;color:#222;font-weight:normal;top:623.34px;left:1101.6px;transform:scaleX(0.9895);transform-origin:0 0;-webkit-text-stroke:0.15px #222;">Ama de Casa</div>
<div style="position:absolute;white-space:pre;line-height:0;font-size:11px;color:#222;font-weight:normal;top:639.19px;left:-931.42px;width:2000px;text-align:center;transform:scaleX(0.9451);transform-origin:50% 0;-webkit-text-stroke:0.15px #222;">25</div>
<div class="a" style="left:82.75px;top:630.9px;width:221.65px;height:17.85px;overflow:hidden">
<div style="position:absolute;white-space:pre;line-height:0;font-size:11px;color:#222;font-weight:normal;top:8.29px;left:2.8px;transform:scaleX(0.9135);transform-origin:0 0;-webkit-text-stroke:0.15px #222;">CAICEDO OLVERA KEYCO ROMINA</div>
</div>
<div style="position:absolute;white-space:pre;line-height:0;font-size:11px;color:#222;font-weight:normal;top:639.19px;left:-658.1px;width:2000px;text-align:center;transform:scaleX(0.9451);transform-origin:50% 0;-webkit-text-stroke:0.15px #222;">0952295616</div>
<div style="position:absolute;white-space:pre;line-height:0;font-size:11px;color:#222;font-weight:normal;top:639.19px;left:-578px;width:2000px;text-align:center;transform:scaleX(1.0068);transform-origin:50% 0;-webkit-text-stroke:0.15px #222;">29/4/1996</div>
<div style="position:absolute;white-space:pre;line-height:0;font-size:11px;color:#222;font-weight:normal;top:639.19px;left:-509.45px;width:2000px;text-align:center;transform:scaleX(0.9451);transform-origin:50% 0;-webkit-text-stroke:0.15px #222;">28</div>
<div style="position:absolute;white-space:pre;line-height:0;font-size:11px;color:#222;font-weight:normal;top:639.19px;left:-444.05px;width:2000px;text-align:center;transform:scaleX(0.9451);transform-origin:50% 0;-webkit-text-stroke:0.15px #222;">0985541557</div>
<div class="a" style="left:595.4px;top:630.9px;width:196.7px;height:17.85px;overflow:hidden">
<div style="position:absolute;white-space:pre;line-height:0;font-size:11px;color:#1f62bd;font-weight:normal;top:8.29px;left:2.35px;transform:scaleX(1.0429);transform-origin:0 0;text-decoration:underline;text-underline-offset:1.5px;text-decoration-skip-ink:none;text-decoration-thickness:1px;text-decoration-color:#5a8bcc;">keyco_1996_romi@hotmail.com </div>
</div>
<div style="position:absolute;white-space:pre;line-height:0;font-size:11px;color:#222;font-weight:normal;top:639.19px;left:794.5px;transform:scaleX(1.0539);transform-origin:0 0;-webkit-text-stroke:0.15px #222;">Limonal</div>
<div class="a" style="left:884.6px;top:630.9px;width:126px;height:15.85px;overflow:hidden">
<div style="position:absolute;white-space:pre;line-height:0;font-size:11px;color:#222;font-weight:normal;top:8.29px;left:2.4px;transform:scaleX(1.0129);transform-origin:0 0;-webkit-text-stroke:0.15px #222;">Calle 10 de agosto</div>
</div>
<div style="position:absolute;white-space:pre;line-height:0;font-size:11px;color:#222;font-weight:normal;top:639.19px;left:1013px;transform:scaleX(1.0416);transform-origin:0 0;-webkit-text-stroke:0.15px #222;">Tercer Nivel</div>
<div style="position:absolute;white-space:pre;line-height:0;font-size:11px;color:#222;font-weight:normal;top:639.19px;left:1101.6px;transform:scaleX(1.058);transform-origin:0 0;-webkit-text-stroke:0.15px #222;">Emprendedora</div>
<div style="position:absolute;white-space:pre;line-height:0;font-size:11px;color:#222;font-weight:normal;top:655.04px;left:-931.42px;width:2000px;text-align:center;transform:scaleX(0.9451);transform-origin:50% 0;-webkit-text-stroke:0.15px #222;">26</div>
<div class="a" style="left:82.75px;top:646.75px;width:221.65px;height:17.85px;overflow:hidden">
<div style="position:absolute;white-space:pre;line-height:0;font-size:11px;color:#222;font-weight:normal;top:8.29px;left:2.8px;transform:scaleX(0.9287);transform-origin:0 0;-webkit-text-stroke:0.15px #222;">GÓMEZ MACÍAS CANDY PATRICIA</div>
</div>
<div style="position:absolute;white-space:pre;line-height:0;font-size:11px;color:#222;font-weight:normal;top:655.04px;left:-658.1px;width:2000px;text-align:center;transform:scaleX(0.9451);transform-origin:50% 0;-webkit-text-stroke:0.15px #222;">0928462399</div>
<div style="position:absolute;white-space:pre;line-height:0;font-size:11px;color:#222;font-weight:normal;top:655.04px;left:-578px;width:2000px;text-align:center;transform:scaleX(1.0068);transform-origin:50% 0;-webkit-text-stroke:0.15px #222;">30/1/1988</div>
<div style="position:absolute;white-space:pre;line-height:0;font-size:11px;color:#222;font-weight:normal;top:655.04px;left:-509.45px;width:2000px;text-align:center;transform:scaleX(0.9451);transform-origin:50% 0;-webkit-text-stroke:0.15px #222;">36</div>
<div style="position:absolute;white-space:pre;line-height:0;font-size:11px;color:#222;font-weight:normal;top:655.04px;left:-444.05px;width:2000px;text-align:center;transform:scaleX(0.9451);transform-origin:50% 0;-webkit-text-stroke:0.15px #222;">0988041621</div>
<div class="a" style="left:595.4px;top:646.75px;width:196.7px;height:17.85px;overflow:hidden">
<div style="position:absolute;white-space:pre;line-height:0;font-size:11px;color:#1f62bd;font-weight:normal;top:8.29px;left:2.35px;transform:scaleX(1.0364);transform-origin:0 0;text-decoration:underline;text-underline-offset:1.5px;text-decoration-skip-ink:none;text-decoration-thickness:1px;text-decoration-color:#5a8bcc;">candypatricia88@gmail.com</div>
</div>
<div style="position:absolute;white-space:pre;line-height:0;font-size:11px;color:#222;font-weight:normal;top:655.04px;left:794.5px;transform:scaleX(1.0349);transform-origin:0 0;-webkit-text-stroke:0.15px #222;">Piñal de Abajo</div>
<div class="a" style="left:884.6px;top:646.75px;width:126px;height:15.85px;overflow:hidden">
<div style="position:absolute;white-space:pre;line-height:0;font-size:11px;color:#222;font-weight:normal;top:8.29px;left:2.4px;transform:scaleX(0.9856);transform-origin:0 0;-webkit-text-stroke:0.15px #222;">Las Corvinas</div>
</div>
<div style="position:absolute;white-space:pre;line-height:0;font-size:11px;color:#222;font-weight:normal;top:655.04px;left:1013px;transform:scaleX(0.9936);transform-origin:0 0;-webkit-text-stroke:0.15px #222;">Básico</div>
<div style="position:absolute;white-space:pre;line-height:0;font-size:11px;color:#222;font-weight:normal;top:655.04px;left:1101.6px;transform:scaleX(0.9895);transform-origin:0 0;-webkit-text-stroke:0.15px #222;">Ama de Casa</div>
<div style="position:absolute;white-space:pre;line-height:0;font-size:11px;color:#222;font-weight:normal;top:670.89px;left:-931.42px;width:2000px;text-align:center;transform:scaleX(0.9451);transform-origin:50% 0;-webkit-text-stroke:0.15px #222;">27</div>
<div class="a" style="left:82.75px;top:662.6px;width:221.65px;height:17.85px;overflow:hidden">
<div style="position:absolute;white-space:pre;line-height:0;font-size:11px;color:#222;font-weight:normal;top:8.29px;left:2.8px;transform:scaleX(0.9261);transform-origin:0 0;-webkit-text-stroke:0.15px #222;">DUQUE RUGEL KAROLEN MILENA</div>
</div>
<div style="position:absolute;white-space:pre;line-height:0;font-size:11px;color:#222;font-weight:normal;top:670.89px;left:-658.1px;width:2000px;text-align:center;transform:scaleX(0.9451);transform-origin:50% 0;-webkit-text-stroke:0.15px #222;">0942303843</div>
<div style="position:absolute;white-space:pre;line-height:0;font-size:11px;color:#222;font-weight:normal;top:670.89px;left:-578px;width:2000px;text-align:center;transform:scaleX(1.0156);transform-origin:50% 0;-webkit-text-stroke:0.15px #222;">9/8/1998</div>
<div style="position:absolute;white-space:pre;line-height:0;font-size:11px;color:#222;font-weight:normal;top:670.89px;left:-509.45px;width:2000px;text-align:center;transform:scaleX(0.9451);transform-origin:50% 0;-webkit-text-stroke:0.15px #222;">26</div>
<div style="position:absolute;white-space:pre;line-height:0;font-size:11px;color:#222;font-weight:normal;top:670.89px;left:-444.05px;width:2000px;text-align:center;transform:scaleX(0.9451);transform-origin:50% 0;-webkit-text-stroke:0.15px #222;">0960270264</div>
<div class="a" style="left:595.4px;top:662.6px;width:196.7px;height:17.85px;overflow:hidden">
<div style="position:absolute;white-space:pre;line-height:0;font-size:11px;color:#1f62bd;font-weight:normal;top:8.29px;left:2.35px;transform:scaleX(1.0348);transform-origin:0 0;text-decoration:underline;text-underline-offset:1.5px;text-decoration-skip-ink:none;text-decoration-thickness:1px;text-decoration-color:#5a8bcc;">karolen.duque1998@gmail.com</div>
</div>
<div style="position:absolute;white-space:pre;line-height:0;font-size:11px;color:#222;font-weight:normal;top:670.89px;left:794.5px;transform:scaleX(1.0539);transform-origin:0 0;-webkit-text-stroke:0.15px #222;">Limonal</div>
<div class="a" style="left:884.6px;top:662.6px;width:126px;height:15.85px;overflow:hidden">
<div style="position:absolute;white-space:pre;line-height:0;font-size:11px;color:#222;font-weight:normal;top:8.29px;left:2.4px;transform:scaleX(1.0035);transform-origin:0 0;-webkit-text-stroke:0.15px #222;">Calle Crispin Cerezo</div>
</div>
<div style="position:absolute;white-space:pre;line-height:0;font-size:11px;color:#222;font-weight:normal;top:670.89px;left:1013px;transform:scaleX(1.0416);transform-origin:0 0;-webkit-text-stroke:0.15px #222;">Tercer Nivel</div>
<div style="position:absolute;white-space:pre;line-height:0;font-size:11px;color:#222;font-weight:normal;top:670.89px;left:1101.6px;transform:scaleX(0.9895);transform-origin:0 0;-webkit-text-stroke:0.15px #222;">Ama de Casa</div>
<div style="position:absolute;white-space:pre;line-height:0;font-size:11px;color:#222;font-weight:normal;top:686.74px;left:-931.42px;width:2000px;text-align:center;transform:scaleX(0.9451);transform-origin:50% 0;-webkit-text-stroke:0.15px #222;">28</div>
<div class="a" style="left:82.75px;top:678.45px;width:221.65px;height:17.85px;overflow:hidden">
<div style="position:absolute;white-space:pre;line-height:0;font-size:11px;color:#222;font-weight:normal;top:8.29px;left:2.8px;transform:scaleX(0.936);transform-origin:0 0;-webkit-text-stroke:0.15px #222;">DUQUE RUGEL DARIANA GEOVANNA</div>
</div>
<div style="position:absolute;white-space:pre;line-height:0;font-size:11px;color:#222;font-weight:normal;top:686.74px;left:-658.1px;width:2000px;text-align:center;transform:scaleX(0.9451);transform-origin:50% 0;-webkit-text-stroke:0.15px #222;">0952723542</div>
<div style="position:absolute;white-space:pre;line-height:0;font-size:11px;color:#222;font-weight:normal;top:686.74px;left:-578px;width:2000px;text-align:center;transform:scaleX(1.0068);transform-origin:50% 0;-webkit-text-stroke:0.15px #222;">22/7/2003</div>
<div style="position:absolute;white-space:pre;line-height:0;font-size:11px;color:#222;font-weight:normal;top:686.74px;left:-509.45px;width:2000px;text-align:center;transform:scaleX(0.9451);transform-origin:50% 0;-webkit-text-stroke:0.15px #222;">21</div>
<div style="position:absolute;white-space:pre;line-height:0;font-size:11px;color:#222;font-weight:normal;top:686.74px;left:-444.05px;width:2000px;text-align:center;transform:scaleX(0.9451);transform-origin:50% 0;-webkit-text-stroke:0.15px #222;">0960748114</div>
<div class="a" style="left:595.4px;top:678.45px;width:196.7px;height:17.85px;overflow:hidden">
<div style="position:absolute;white-space:pre;line-height:0;font-size:11px;color:#1f62bd;font-weight:normal;top:8.29px;left:2.35px;transform:scaleX(1.031);transform-origin:0 0;text-decoration:underline;text-underline-offset:1.5px;text-decoration-skip-ink:none;text-decoration-thickness:1px;text-decoration-color:#5a8bcc;">darianaduque2207@gmail.com</div>
</div>
<div style="position:absolute;white-space:pre;line-height:0;font-size:11px;color:#222;font-weight:normal;top:686.74px;left:794.5px;transform:scaleX(1.0539);transform-origin:0 0;-webkit-text-stroke:0.15px #222;">Limonal</div>
<div class="a" style="left:884.6px;top:678.45px;width:126px;height:15.85px;overflow:hidden">
<div style="position:absolute;white-space:pre;line-height:0;font-size:11px;color:#222;font-weight:normal;top:8.29px;left:2.4px;transform:scaleX(1.0035);transform-origin:0 0;-webkit-text-stroke:0.15px #222;">Calle Crispin Cerezo</div>
</div>
<div style="position:absolute;white-space:pre;line-height:0;font-size:11px;color:#222;font-weight:normal;top:686.74px;left:1013px;transform:scaleX(1.0511);transform-origin:0 0;-webkit-text-stroke:0.15px #222;">Bachiller</div>
<div style="position:absolute;white-space:pre;line-height:0;font-size:11px;color:#222;font-weight:normal;top:686.74px;left:1101.6px;transform:scaleX(1.0538);transform-origin:0 0;-webkit-text-stroke:0.15px #222;">Estudiante</div>
<div style="position:absolute;white-space:pre;line-height:0;font-size:11px;color:#222;font-weight:normal;top:702.59px;left:-931.42px;width:2000px;text-align:center;transform:scaleX(0.9451);transform-origin:50% 0;-webkit-text-stroke:0.15px #222;">29</div>
<div class="a" style="left:82.75px;top:694.3px;width:221.65px;height:17.85px;overflow:hidden">
<div style="position:absolute;white-space:pre;line-height:0;font-size:11px;color:#222;font-weight:normal;top:8.29px;left:2.8px;transform:scaleX(0.9183);transform-origin:0 0;-webkit-text-stroke:0.15px #222;">LEÓN CHÁVEZ LUISA ANDREINA</div>
</div>
<div style="position:absolute;white-space:pre;line-height:0;font-size:11px;color:#222;font-weight:normal;top:702.59px;left:-658.1px;width:2000px;text-align:center;transform:scaleX(0.9451);transform-origin:50% 0;-webkit-text-stroke:0.15px #222;">0928925114</div>
<div style="position:absolute;white-space:pre;line-height:0;font-size:11px;color:#222;font-weight:normal;top:702.59px;left:-578px;width:2000px;text-align:center;transform:scaleX(1.0156);transform-origin:50% 0;-webkit-text-stroke:0.15px #222;">4/5/2000</div>
<div style="position:absolute;white-space:pre;line-height:0;font-size:11px;color:#222;font-weight:normal;top:702.59px;left:-509.45px;width:2000px;text-align:center;transform:scaleX(0.9451);transform-origin:50% 0;-webkit-text-stroke:0.15px #222;">24</div>
<div style="position:absolute;white-space:pre;line-height:0;font-size:11px;color:#222;font-weight:normal;top:702.59px;left:-444.05px;width:2000px;text-align:center;transform:scaleX(0.9451);transform-origin:50% 0;-webkit-text-stroke:0.15px #222;">0968923063</div>
<div class="a" style="left:595.4px;top:694.3px;width:196.7px;height:17.85px;overflow:hidden">
<div style="position:absolute;white-space:pre;line-height:0;font-size:11px;color:#1f62bd;font-weight:normal;top:8.29px;left:2.35px;transform:scaleX(1.0204);transform-origin:0 0;text-decoration:underline;text-underline-offset:1.5px;text-decoration-skip-ink:none;text-decoration-thickness:1px;text-decoration-color:#5a8bcc;">luisaleonchavez964@gmail.com</div>
</div>
<div style="position:absolute;white-space:pre;line-height:0;font-size:11px;color:#222;font-weight:normal;top:702.59px;left:794.5px;transform:scaleX(1.0539);transform-origin:0 0;-webkit-text-stroke:0.15px #222;">Limonal</div>
<div class="a" style="left:884.6px;top:694.3px;width:126px;height:15.85px;overflow:hidden">
<div style="position:absolute;white-space:pre;line-height:0;font-size:11px;color:#222;font-weight:normal;top:8.29px;left:2.4px;transform:scaleX(1.0035);transform-origin:0 0;-webkit-text-stroke:0.15px #222;">Calle Crispin Cerezo</div>
</div>
<div style="position:absolute;white-space:pre;line-height:0;font-size:11px;color:#222;font-weight:normal;top:702.59px;left:1013px;transform:scaleX(1.0511);transform-origin:0 0;-webkit-text-stroke:0.15px #222;">Bachiller</div>
<div style="position:absolute;white-space:pre;line-height:0;font-size:11px;color:#222;font-weight:normal;top:702.59px;left:1101.6px;transform:scaleX(1.0538);transform-origin:0 0;-webkit-text-stroke:0.15px #222;">Estudiante</div>
<div style="position:absolute;white-space:pre;line-height:0;font-size:11px;color:#222;font-weight:normal;top:718.44px;left:-931.42px;width:2000px;text-align:center;transform:scaleX(0.9451);transform-origin:50% 0;-webkit-text-stroke:0.15px #222;">30</div>
<div class="a" style="left:82.75px;top:710.15px;width:221.65px;height:17.85px;overflow:hidden">
<div style="position:absolute;white-space:pre;line-height:0;font-size:11px;color:#222;font-weight:normal;top:8.29px;left:2.8px;transform:scaleX(0.9104);transform-origin:0 0;-webkit-text-stroke:0.15px #222;">LEÓN CHÁVEZ MARÍA JOSÉ</div>
</div>
<div style="position:absolute;white-space:pre;line-height:0;font-size:11px;color:#222;font-weight:normal;top:718.44px;left:-658.1px;width:2000px;text-align:center;transform:scaleX(0.9451);transform-origin:50% 0;-webkit-text-stroke:0.15px #222;">0928925098</div>
<div style="position:absolute;white-space:pre;line-height:0;font-size:11px;color:#222;font-weight:normal;top:718.44px;left:-578px;width:2000px;text-align:center;transform:scaleX(1.0156);transform-origin:50% 0;-webkit-text-stroke:0.15px #222;">5/4/1995</div>
<div style="position:absolute;white-space:pre;line-height:0;font-size:11px;color:#222;font-weight:normal;top:718.44px;left:-509.45px;width:2000px;text-align:center;transform:scaleX(0.9451);transform-origin:50% 0;-webkit-text-stroke:0.15px #222;">29</div>
<div style="position:absolute;white-space:pre;line-height:0;font-size:11px;color:#222;font-weight:normal;top:718.44px;left:-444.05px;width:2000px;text-align:center;transform:scaleX(0.9451);transform-origin:50% 0;-webkit-text-stroke:0.15px #222;">0939182965</div>
<div class="a" style="left:595.4px;top:710.15px;width:196.7px;height:17.85px;overflow:hidden">
<div style="position:absolute;white-space:pre;line-height:0;font-size:11px;color:#1f62bd;font-weight:normal;top:8.29px;left:2.35px;transform:scaleX(1.0659);transform-origin:0 0;text-decoration:underline;text-underline-offset:1.5px;text-decoration-skip-ink:none;text-decoration-thickness:1px;text-decoration-color:#5a8bcc;">hamiltontorresleon@gmail.com</div>
</div>
<div style="position:absolute;white-space:pre;line-height:0;font-size:11px;color:#222;font-weight:normal;top:718.44px;left:794.5px;transform:scaleX(1.0539);transform-origin:0 0;-webkit-text-stroke:0.15px #222;">Limonal</div>
<div class="a" style="left:884.6px;top:710.15px;width:126px;height:15.85px;overflow:hidden">
<div style="position:absolute;white-space:pre;line-height:0;font-size:11px;color:#222;font-weight:normal;top:8.29px;left:2.4px;transform:scaleX(1.0035);transform-origin:0 0;-webkit-text-stroke:0.15px #222;">Calle Crispin Cerezo</div>
</div>
<div style="position:absolute;white-space:pre;line-height:0;font-size:11px;color:#222;font-weight:normal;top:718.44px;left:1013px;transform:scaleX(1.0511);transform-origin:0 0;-webkit-text-stroke:0.15px #222;">Bachiller</div>
<div style="position:absolute;white-space:pre;line-height:0;font-size:11px;color:#222;font-weight:normal;top:718.44px;left:1101.6px;transform:scaleX(1.0538);transform-origin:0 0;-webkit-text-stroke:0.15px #222;">Estudiante</div>
<div style="position:absolute;white-space:pre;line-height:0;font-size:11px;color:#222;font-weight:normal;top:734.29px;left:-931.42px;width:2000px;text-align:center;transform:scaleX(0.9451);transform-origin:50% 0;-webkit-text-stroke:0.15px #222;">31</div>
<div class="a" style="left:82.75px;top:726px;width:221.65px;height:17.85px;overflow:hidden">
<div style="position:absolute;white-space:pre;line-height:0;font-size:11px;color:#222;font-weight:normal;top:8.29px;left:2.8px;transform:scaleX(0.9385);transform-origin:0 0;-webkit-text-stroke:0.15px #222;">MOLINA HURTADO ARELIS ISAMAR</div>
</div>
<div style="position:absolute;white-space:pre;line-height:0;font-size:11px;color:#222;font-weight:normal;top:734.29px;left:-658.1px;width:2000px;text-align:center;transform:scaleX(0.9451);transform-origin:50% 0;-webkit-text-stroke:0.15px #222;">0942164492</div>
<div style="position:absolute;white-space:pre;line-height:0;font-size:11px;color:#222;font-weight:normal;top:734.29px;left:-578px;width:2000px;text-align:center;transform:scaleX(1.0068);transform-origin:50% 0;-webkit-text-stroke:0.15px #222;">30/7/2001</div>
<div style="position:absolute;white-space:pre;line-height:0;font-size:11px;color:#222;font-weight:normal;top:734.29px;left:-509.45px;width:2000px;text-align:center;transform:scaleX(0.9451);transform-origin:50% 0;-webkit-text-stroke:0.15px #222;">23</div>
<div style="position:absolute;white-space:pre;line-height:0;font-size:11px;color:#222;font-weight:normal;top:734.29px;left:-444.05px;width:2000px;text-align:center;transform:scaleX(0.9451);transform-origin:50% 0;-webkit-text-stroke:0.15px #222;">0967153083</div>
<div class="a" style="left:595.4px;top:726px;width:196.7px;height:17.85px;overflow:hidden">
<div style="position:absolute;white-space:pre;line-height:0;font-size:11px;color:#1f62bd;font-weight:normal;top:8.29px;left:2.35px;transform:scaleX(1.035);transform-origin:0 0;text-decoration:underline;text-underline-offset:1.5px;text-decoration-skip-ink:none;text-decoration-thickness:1px;text-decoration-color:#5a8bcc;">arelismolina550@gmail.com</div>
</div>
<div style="position:absolute;white-space:pre;line-height:0;font-size:11px;color:#222;font-weight:normal;top:734.29px;left:794.5px;transform:scaleX(1.0539);transform-origin:0 0;-webkit-text-stroke:0.15px #222;">Limonal</div>
<div class="a" style="left:884.6px;top:726px;width:126px;height:15.85px;overflow:hidden">
<div style="position:absolute;white-space:pre;line-height:0;font-size:11px;color:#222;font-weight:normal;top:8.29px;left:2.4px;transform:scaleX(1.0236);transform-origin:0 0;-webkit-text-stroke:0.15px #222;">Frente a la Cancha Sintetica</div>
</div>
<div style="position:absolute;white-space:pre;line-height:0;font-size:11px;color:#222;font-weight:normal;top:734.29px;left:1013px;transform:scaleX(1.0416);transform-origin:0 0;-webkit-text-stroke:0.15px #222;">Tercer Nivel</div>
<div style="position:absolute;white-space:pre;line-height:0;font-size:11px;color:#222;font-weight:normal;top:734.29px;left:1101.6px;transform:scaleX(1.0538);transform-origin:0 0;-webkit-text-stroke:0.15px #222;">Estudiante</div>
<div style="position:absolute;white-space:pre;line-height:0;font-size:11px;color:#222;font-weight:normal;top:750.14px;left:-931.42px;width:2000px;text-align:center;transform:scaleX(0.9451);transform-origin:50% 0;-webkit-text-stroke:0.15px #222;">32</div>
<div class="a" style="left:82.75px;top:741.85px;width:221.65px;height:17.85px;overflow:hidden">
<div style="position:absolute;white-space:pre;line-height:0;font-size:11px;color:#222;font-weight:normal;top:8.29px;left:2.8px;transform:scaleX(0.8807);transform-origin:0 0;-webkit-text-stroke:0.15px #222;">SALAVARRIA TEYO GLADYS JESÚS</div>
</div>
<div style="position:absolute;white-space:pre;line-height:0;font-size:11px;color:#222;font-weight:normal;top:750.14px;left:-658.1px;width:2000px;text-align:center;transform:scaleX(0.9451);transform-origin:50% 0;-webkit-text-stroke:0.15px #222;">0928154368</div>
<div style="position:absolute;white-space:pre;line-height:0;font-size:11px;color:#222;font-weight:normal;top:750.14px;left:-578px;width:2000px;text-align:center;transform:scaleX(0.9999);transform-origin:50% 0;-webkit-text-stroke:0.15px #222;">10/12/1992</div>
<div style="position:absolute;white-space:pre;line-height:0;font-size:11px;color:#222;font-weight:normal;top:750.14px;left:-509.45px;width:2000px;text-align:center;transform:scaleX(0.9451);transform-origin:50% 0;-webkit-text-stroke:0.15px #222;">31</div>
<div style="position:absolute;white-space:pre;line-height:0;font-size:11px;color:#222;font-weight:normal;top:750.14px;left:-444.05px;width:2000px;text-align:center;transform:scaleX(0.9451);transform-origin:50% 0;-webkit-text-stroke:0.15px #222;">0979949121</div>
<div class="a" style="left:595.4px;top:741.85px;width:196.7px;height:17.85px;overflow:hidden">
<div style="position:absolute;white-space:pre;line-height:0;font-size:11px;color:#1f62bd;font-weight:normal;top:8.29px;left:2.35px;transform:scaleX(1.0215);transform-origin:0 0;text-decoration:underline;text-underline-offset:1.5px;text-decoration-skip-ink:none;text-decoration-thickness:1px;text-decoration-color:#5a8bcc;">gladyssalavarria1@gmail.com </div>
</div>
<div style="position:absolute;white-space:pre;line-height:0;font-size:11px;color:#222;font-weight:normal;top:750.14px;left:794.5px;transform:scaleX(1.0113);transform-origin:0 0;-webkit-text-stroke:0.15px #222;">Jesus María</div>
<div class="a" style="left:884.6px;top:741.85px;width:126px;height:15.85px;overflow:hidden">
<div style="position:absolute;white-space:pre;line-height:0;font-size:11px;color:#222;font-weight:normal;top:8.29px;left:2.4px;transform:scaleX(0.9909);transform-origin:0 0;-webkit-text-stroke:0.15px #222;">Km 53</div>
</div>
<div style="position:absolute;white-space:pre;line-height:0;font-size:11px;color:#222;font-weight:normal;top:750.14px;left:1013px;transform:scaleX(1.0511);transform-origin:0 0;-webkit-text-stroke:0.15px #222;">Bachiller</div>
<div style="position:absolute;white-space:pre;line-height:0;font-size:11px;color:#222;font-weight:normal;top:750.14px;left:1101.6px;transform:scaleX(0.9895);transform-origin:0 0;-webkit-text-stroke:0.15px #222;">Ama de Casa</div>
<div style="position:absolute;white-space:pre;line-height:0;font-size:11px;color:#222;font-weight:normal;top:765.99px;left:-931.42px;width:2000px;text-align:center;transform:scaleX(0.9451);transform-origin:50% 0;-webkit-text-stroke:0.15px #222;">33</div>
<div class="a" style="left:82.75px;top:757.7px;width:221.65px;height:17.85px;overflow:hidden">
<div style="position:absolute;white-space:pre;line-height:0;font-size:11px;color:#222;font-weight:normal;top:8.29px;left:2.8px;transform:scaleX(0.9381);transform-origin:0 0;-webkit-text-stroke:0.15px #222;">MORA RONQUILLO FRANCISCA DOMITILA</div>
</div>
<div style="position:absolute;white-space:pre;line-height:0;font-size:11px;color:#222;font-weight:normal;top:765.99px;left:-658.1px;width:2000px;text-align:center;transform:scaleX(0.9451);transform-origin:50% 0;-webkit-text-stroke:0.15px #222;">0909970675</div>
<div style="position:absolute;white-space:pre;line-height:0;font-size:11px;color:#222;font-weight:normal;top:765.99px;left:-578px;width:2000px;text-align:center;transform:scaleX(1.0156);transform-origin:50% 0;-webkit-text-stroke:0.15px #222;">4/6/1967</div>
<div style="position:absolute;white-space:pre;line-height:0;font-size:11px;color:#222;font-weight:normal;top:765.99px;left:-509.45px;width:2000px;text-align:center;transform:scaleX(0.9451);transform-origin:50% 0;-webkit-text-stroke:0.15px #222;">56</div>
<div style="position:absolute;white-space:pre;line-height:0;font-size:11px;color:#222;font-weight:normal;top:765.99px;left:-444.05px;width:2000px;text-align:center;transform:scaleX(0.9451);transform-origin:50% 0;-webkit-text-stroke:0.15px #222;">0963873224</div>
<div class="a" style="left:595.4px;top:757.7px;width:196.7px;height:17.85px;overflow:hidden">
<div style="position:absolute;white-space:pre;line-height:0;font-size:11px;color:#1f62bd;font-weight:normal;top:8.29px;left:2.35px;transform:scaleX(1.0454);transform-origin:0 0;text-decoration:underline;text-underline-offset:1.5px;text-decoration-skip-ink:none;text-decoration-thickness:1px;text-decoration-color:#5a8bcc;">britneycabrera29@gmail.com </div>
</div>
<div style="position:absolute;white-space:pre;line-height:0;font-size:11px;color:#222;font-weight:normal;top:765.99px;left:794.5px;transform:scaleX(1.0539);transform-origin:0 0;-webkit-text-stroke:0.15px #222;">Limonal</div>
<div class="a" style="left:884.6px;top:757.7px;width:126px;height:15.85px;overflow:hidden">
<div style="position:absolute;white-space:pre;line-height:0;font-size:11px;color:#222;font-weight:normal;top:8.29px;left:2.4px;transform:scaleX(1.0321);transform-origin:0 0;-webkit-text-stroke:0.15px #222;">Los Almendros</div>
</div>
<div style="position:absolute;white-space:pre;line-height:0;font-size:11px;color:#222;font-weight:normal;top:765.99px;left:1013px;transform:scaleX(0.9936);transform-origin:0 0;-webkit-text-stroke:0.15px #222;">Básico</div>
<div style="position:absolute;white-space:pre;line-height:0;font-size:11px;color:#222;font-weight:normal;top:765.99px;left:1101.6px;transform:scaleX(1.058);transform-origin:0 0;-webkit-text-stroke:0.15px #222;">Emprendedora</div>
<div style="position:absolute;white-space:pre;line-height:0;font-size:11px;color:#222;font-weight:normal;top:781.84px;left:-931.42px;width:2000px;text-align:center;transform:scaleX(0.9451);transform-origin:50% 0;-webkit-text-stroke:0.15px #222;">34</div>
<div class="a" style="left:82.75px;top:773.55px;width:221.65px;height:17.85px;overflow:hidden">
<div style="position:absolute;white-space:pre;line-height:0;font-size:11px;color:#222;font-weight:normal;top:8.29px;left:2.8px;transform:scaleX(0.9406);transform-origin:0 0;-webkit-text-stroke:0.15px #222;">BONILLA MORA AZUCENA RAQUILDA</div>
</div>
<div style="position:absolute;white-space:pre;line-height:0;font-size:11px;color:#222;font-weight:normal;top:781.84px;left:-658.1px;width:2000px;text-align:center;transform:scaleX(0.9451);transform-origin:50% 0;-webkit-text-stroke:0.15px #222;">0912353315</div>
<div style="position:absolute;white-space:pre;line-height:0;font-size:11px;color:#222;font-weight:normal;top:781.84px;left:-578px;width:2000px;text-align:center;transform:scaleX(1.0068);transform-origin:50% 0;-webkit-text-stroke:0.15px #222;">22/5/1971</div>
<div style="position:absolute;white-space:pre;line-height:0;font-size:11px;color:#222;font-weight:normal;top:781.84px;left:-509.45px;width:2000px;text-align:center;transform:scaleX(0.9451);transform-origin:50% 0;-webkit-text-stroke:0.15px #222;">54</div>
<div style="position:absolute;white-space:pre;line-height:0;font-size:11px;color:#222;font-weight:normal;top:781.84px;left:-444.05px;width:2000px;text-align:center;transform:scaleX(0.9451);transform-origin:50% 0;-webkit-text-stroke:0.15px #222;">0981725662</div>
<div class="a" style="left:595.4px;top:773.55px;width:196.7px;height:17.85px;overflow:hidden">
<div style="position:absolute;white-space:pre;line-height:0;font-size:11px;color:#1f62bd;font-weight:normal;top:8.29px;left:2.35px;transform:scaleX(1.0505);transform-origin:0 0;text-decoration:underline;text-underline-offset:1.5px;text-decoration-skip-ink:none;text-decoration-thickness:1px;text-decoration-color:#5a8bcc;">noemirugel@gmail.com </div>
</div>
<div style="position:absolute;white-space:pre;line-height:0;font-size:11px;color:#222;font-weight:normal;top:781.84px;left:794.5px;transform:scaleX(1.001);transform-origin:0 0;-webkit-text-stroke:0.15px #222;">Rancho Lopez</div>
<div class="a" style="left:884.6px;top:773.55px;width:126px;height:15.85px;overflow:hidden">
<div style="position:absolute;white-space:pre;line-height:0;font-size:11px;color:#222;font-weight:normal;top:8.29px;left:2.4px;transform:scaleX(1.001);transform-origin:0 0;-webkit-text-stroke:0.15px #222;">Rancho Lopez</div>
</div>
<div style="position:absolute;white-space:pre;line-height:0;font-size:11px;color:#222;font-weight:normal;top:781.84px;left:1013px;transform:scaleX(0.9936);transform-origin:0 0;-webkit-text-stroke:0.15px #222;">Básico</div>
<div style="position:absolute;white-space:pre;line-height:0;font-size:11px;color:#222;font-weight:normal;top:781.84px;left:1101.6px;transform:scaleX(0.9895);transform-origin:0 0;-webkit-text-stroke:0.15px #222;">Ama de Casa</div>
<div style="position:absolute;white-space:pre;line-height:0;font-size:11px;color:#222;font-weight:normal;top:797.69px;left:-931.42px;width:2000px;text-align:center;transform:scaleX(0.9451);transform-origin:50% 0;-webkit-text-stroke:0.15px #222;">35</div>
<div class="a" style="left:82.75px;top:789.4px;width:221.65px;height:17.85px;overflow:hidden">
<div style="position:absolute;white-space:pre;line-height:0;font-size:11px;color:#222;font-weight:normal;top:8.29px;left:2.8px;transform:scaleX(0.9207);transform-origin:0 0;-webkit-text-stroke:0.15px #222;">RUGEL VIZUETA YADIRA VIRGINIA</div>
</div>
<div style="position:absolute;white-space:pre;line-height:0;font-size:11px;color:#222;font-weight:normal;top:797.69px;left:-658.1px;width:2000px;text-align:center;transform:scaleX(0.9451);transform-origin:50% 0;-webkit-text-stroke:0.15px #222;">0940241409</div>
<div style="position:absolute;white-space:pre;line-height:0;font-size:11px;color:#222;font-weight:normal;top:797.69px;left:-578px;width:2000px;text-align:center;transform:scaleX(1.0156);transform-origin:50% 0;-webkit-text-stroke:0.15px #222;">2/9/1991</div>
<div style="position:absolute;white-space:pre;line-height:0;font-size:11px;color:#222;font-weight:normal;top:797.69px;left:-509.45px;width:2000px;text-align:center;transform:scaleX(0.9451);transform-origin:50% 0;-webkit-text-stroke:0.15px #222;">33</div>
<div style="position:absolute;white-space:pre;line-height:0;font-size:11px;color:#222;font-weight:normal;top:797.69px;left:-444.05px;width:2000px;text-align:center;transform:scaleX(0.9451);transform-origin:50% 0;-webkit-text-stroke:0.15px #222;">0989616304</div>
<div class="a" style="left:595.4px;top:789.4px;width:196.7px;height:17.85px;overflow:hidden">
<div style="position:absolute;white-space:pre;line-height:0;font-size:11px;color:#1f62bd;font-weight:normal;top:8.29px;left:2.35px;transform:scaleX(1.0592);transform-origin:0 0;text-decoration:underline;text-underline-offset:1.5px;text-decoration-skip-ink:none;text-decoration-thickness:1px;text-decoration-color:#5a8bcc;">ronquillojuradoevabeatriz@gmail.com</div>
</div>
<div style="position:absolute;white-space:pre;line-height:0;font-size:11px;color:#222;font-weight:normal;top:797.69px;left:794.5px;transform:scaleX(1.0539);transform-origin:0 0;-webkit-text-stroke:0.15px #222;">Limonal</div>
<div class="a" style="left:884.6px;top:789.4px;width:126px;height:15.85px;overflow:hidden">
<div style="position:absolute;white-space:pre;line-height:0;font-size:11px;color:#222;font-weight:normal;top:8.29px;left:2.4px;transform:scaleX(1.0129);transform-origin:0 0;-webkit-text-stroke:0.15px #222;">Calle 10 de agosto</div>
</div>
<div style="position:absolute;white-space:pre;line-height:0;font-size:11px;color:#222;font-weight:normal;top:797.69px;left:1013px;transform:scaleX(1.0511);transform-origin:0 0;-webkit-text-stroke:0.15px #222;">Bachiller</div>
<div style="position:absolute;white-space:pre;line-height:0;font-size:11px;color:#222;font-weight:normal;top:797.69px;left:1101.6px;transform:scaleX(0.9895);transform-origin:0 0;-webkit-text-stroke:0.15px #222;">Ama de Casa</div>
<div style="position:absolute;white-space:pre;line-height:0;font-size:11px;color:#222;font-weight:normal;top:813.54px;left:-931.42px;width:2000px;text-align:center;transform:scaleX(0.9451);transform-origin:50% 0;-webkit-text-stroke:0.15px #222;">36</div>
<div class="a" style="left:82.75px;top:805.25px;width:221.65px;height:17.85px;overflow:hidden">
<div style="position:absolute;white-space:pre;line-height:0;font-size:11px;color:#222;font-weight:normal;top:8.29px;left:2.8px;transform:scaleX(0.9188);transform-origin:0 0;-webkit-text-stroke:0.15px #222;">SÁNCHEZ MORA KATHERINE ORALIA</div>
</div>
<div style="position:absolute;white-space:pre;line-height:0;font-size:11px;color:#222;font-weight:normal;top:813.54px;left:-658.1px;width:2000px;text-align:center;transform:scaleX(0.9451);transform-origin:50% 0;-webkit-text-stroke:0.15px #222;">0927138966</div>
<div style="position:absolute;white-space:pre;line-height:0;font-size:11px;color:#222;font-weight:normal;top:813.54px;left:-578px;width:2000px;text-align:center;transform:scaleX(1.0068);transform-origin:50% 0;-webkit-text-stroke:0.15px #222;">13/9/1987</div>
<div style="position:absolute;white-space:pre;line-height:0;font-size:11px;color:#222;font-weight:normal;top:813.54px;left:-509.45px;width:2000px;text-align:center;transform:scaleX(0.9451);transform-origin:50% 0;-webkit-text-stroke:0.15px #222;">37</div>
<div style="position:absolute;white-space:pre;line-height:0;font-size:11px;color:#222;font-weight:normal;top:813.54px;left:-444.05px;width:2000px;text-align:center;transform:scaleX(0.9451);transform-origin:50% 0;-webkit-text-stroke:0.15px #222;">0961658991</div>
<div style="position:absolute;white-space:pre;line-height:0;font-size:11px;color:#222;font-weight:normal;top:813.54px;left:794.5px;transform:scaleX(1.0539);transform-origin:0 0;-webkit-text-stroke:0.15px #222;">Limonal</div>
<div class="a" style="left:884.6px;top:805.25px;width:126px;height:15.85px;overflow:hidden">
<div style="position:absolute;white-space:pre;line-height:0;font-size:11px;color:#222;font-weight:normal;top:8.29px;left:2.4px;transform:scaleX(1.0321);transform-origin:0 0;-webkit-text-stroke:0.15px #222;">Los Almendros</div>
</div>
<div style="position:absolute;white-space:pre;line-height:0;font-size:11px;color:#222;font-weight:normal;top:813.54px;left:1013px;transform:scaleX(1.0511);transform-origin:0 0;-webkit-text-stroke:0.15px #222;">Bachiller</div>
<div style="position:absolute;white-space:pre;line-height:0;font-size:11px;color:#222;font-weight:normal;top:813.54px;left:1101.6px;transform:scaleX(0.9895);transform-origin:0 0;-webkit-text-stroke:0.15px #222;">Ama de Casa</div>
<div style="position:absolute;white-space:pre;line-height:0;font-size:11px;color:#222;font-weight:normal;top:813.54px;left:1289.5px;transform:scaleX(1.0468);transform-origin:0 0;-webkit-text-stroke:0.15px #222;">Correo</div>
<div style="position:absolute;white-space:pre;line-height:0;font-size:11px;color:#222;font-weight:normal;top:829.39px;left:-931.42px;width:2000px;text-align:center;transform:scaleX(0.9451);transform-origin:50% 0;-webkit-text-stroke:0.15px #222;">37</div>
<div class="a" style="left:82.75px;top:821.1px;width:221.65px;height:17.85px;overflow:hidden">
<div style="position:absolute;white-space:pre;line-height:0;font-size:11px;color:#222;font-weight:normal;top:8.29px;left:2.8px;transform:scaleX(0.9091);transform-origin:0 0;-webkit-text-stroke:0.15px #222;">AVILÉS LEÓN ANGÉLICA ALEXANDRA</div>
</div>
<div style="position:absolute;white-space:pre;line-height:0;font-size:11px;color:#222;font-weight:normal;top:829.39px;left:-658.1px;width:2000px;text-align:center;transform:scaleX(0.9451);transform-origin:50% 0;-webkit-text-stroke:0.15px #222;">0922705330</div>
<div style="position:absolute;white-space:pre;line-height:0;font-size:11px;color:#222;font-weight:normal;top:829.39px;left:-578px;width:2000px;text-align:center;transform:scaleX(1.0068);transform-origin:50% 0;-webkit-text-stroke:0.15px #222;">17/2/1981</div>
<div style="position:absolute;white-space:pre;line-height:0;font-size:11px;color:#222;font-weight:normal;top:829.39px;left:-509.45px;width:2000px;text-align:center;transform:scaleX(0.9451);transform-origin:50% 0;-webkit-text-stroke:0.15px #222;">43</div>
<div style="position:absolute;white-space:pre;line-height:0;font-size:11px;color:#222;font-weight:normal;top:829.39px;left:-444.05px;width:2000px;text-align:center;transform:scaleX(0.9451);transform-origin:50% 0;-webkit-text-stroke:0.15px #222;">0968406877</div>
<div style="position:absolute;white-space:pre;line-height:0;font-size:11px;color:#222;font-weight:normal;top:829.39px;left:794.5px;transform:scaleX(1.0539);transform-origin:0 0;-webkit-text-stroke:0.15px #222;">Limonal</div>
<div class="a" style="left:884.6px;top:821.1px;width:126px;height:15.85px;overflow:hidden">
<div style="position:absolute;white-space:pre;line-height:0;font-size:11px;color:#222;font-weight:normal;top:8.29px;left:2.4px;transform:scaleX(1.0454);transform-origin:0 0;-webkit-text-stroke:0.15px #222;">Barrio Bellavista</div>
</div>
<div style="position:absolute;white-space:pre;line-height:0;font-size:11px;color:#222;font-weight:normal;top:829.39px;left:1013px;transform:scaleX(0.9936);transform-origin:0 0;-webkit-text-stroke:0.15px #222;">Básico</div>
<div style="position:absolute;white-space:pre;line-height:0;font-size:11px;color:#222;font-weight:normal;top:829.39px;left:1101.6px;transform:scaleX(0.9895);transform-origin:0 0;-webkit-text-stroke:0.15px #222;">Ama de Casa</div>
<div style="position:absolute;white-space:pre;line-height:0;font-size:11px;color:#222;font-weight:normal;top:829.39px;left:1289.5px;transform:scaleX(1.0524);transform-origin:0 0;-webkit-text-stroke:0.15px #222;">Correo, firma y cédula</div>
<div style="position:absolute;white-space:pre;line-height:0;font-size:11px;color:#222;font-weight:normal;top:845.24px;left:-931.42px;width:2000px;text-align:center;transform:scaleX(0.9451);transform-origin:50% 0;-webkit-text-stroke:0.15px #222;">38</div>
<div class="a" style="left:82.75px;top:836.95px;width:221.65px;height:17.85px;overflow:hidden">
<div style="position:absolute;white-space:pre;line-height:0;font-size:11px;color:#222;font-weight:normal;top:8.29px;left:2.8px;transform:scaleX(0.9093);transform-origin:0 0;-webkit-text-stroke:0.15px #222;">SALAZAR ALVARADO KAREN GABRIELA</div>
</div>
<div style="position:absolute;white-space:pre;line-height:0;font-size:11px;color:#222;font-weight:normal;top:845.24px;left:-658.1px;width:2000px;text-align:center;transform:scaleX(0.9451);transform-origin:50% 0;-webkit-text-stroke:0.15px #222;">0923240857</div>
<div style="position:absolute;white-space:pre;line-height:0;font-size:11px;color:#222;font-weight:normal;top:845.24px;left:-578px;width:2000px;text-align:center;transform:scaleX(1.0156);transform-origin:50% 0;-webkit-text-stroke:0.15px #222;">2/6/1994</div>
<div style="position:absolute;white-space:pre;line-height:0;font-size:11px;color:#222;font-weight:normal;top:845.24px;left:-509.45px;width:2000px;text-align:center;transform:scaleX(0.9451);transform-origin:50% 0;-webkit-text-stroke:0.15px #222;">30</div>
<div style="position:absolute;white-space:pre;line-height:0;font-size:11px;color:#222;font-weight:normal;top:845.24px;left:-444.05px;width:2000px;text-align:center;transform:scaleX(0.9451);transform-origin:50% 0;-webkit-text-stroke:0.15px #222;">0985910244</div>
<div class="a" style="left:595.4px;top:836.95px;width:196.7px;height:17.85px;overflow:hidden">
<div style="position:absolute;white-space:pre;line-height:0;font-size:11px;color:#1f62bd;font-weight:normal;top:8.29px;left:2.35px;transform:scaleX(1.012);transform-origin:0 0;text-decoration:underline;text-underline-offset:1.5px;text-decoration-skip-ink:none;text-decoration-thickness:1px;text-decoration-color:#5a8bcc;">karsa0294@gmail.com </div>
</div>
<div style="position:absolute;white-space:pre;line-height:0;font-size:11px;color:#222;font-weight:normal;top:845.24px;left:794.5px;transform:scaleX(0.9765);transform-origin:0 0;-webkit-text-stroke:0.15px #222;">La Soraya</div>
<div class="a" style="left:884.6px;top:836.95px;width:126px;height:15.85px;overflow:hidden">
<div style="position:absolute;white-space:pre;line-height:0;font-size:11px;color:#222;font-weight:normal;top:8.29px;left:2.4px;transform:scaleX(0.9765);transform-origin:0 0;-webkit-text-stroke:0.15px #222;">La Soraya</div>
</div>
<div style="position:absolute;white-space:pre;line-height:0;font-size:11px;color:#222;font-weight:normal;top:845.24px;left:1013px;transform:scaleX(1.0511);transform-origin:0 0;-webkit-text-stroke:0.15px #222;">Bachiller</div>
<div style="position:absolute;white-space:pre;line-height:0;font-size:11px;color:#222;font-weight:normal;top:845.24px;left:1101.6px;transform:scaleX(0.9895);transform-origin:0 0;-webkit-text-stroke:0.15px #222;">Ama de Casa</div>
<div style="position:absolute;white-space:pre;line-height:0;font-size:11px;color:#222;font-weight:normal;top:845.24px;left:1289.5px;transform:scaleX(1.0123);transform-origin:0 0;-webkit-text-stroke:0.15px #222;">Cédula</div>
<div class="a" style="left:-115px;top:375.23px;width:300px;height:20px;line-height:20px;text-align:center;font-size:12px;font-weight:bold;color:#fff;transform:rotate(-90deg);white-space:pre">GRUPO 1  -  12H30 A 14H30</div>
<div class="a" style="left:-115px;top:676.38px;width:300px;height:20px;line-height:20px;text-align:center;font-size:12px;font-weight:bold;color:#fff;transform:rotate(-90deg);white-space:pre">GRUPO 2  -  15H00 A 17H00</div>
<div style="position:absolute;left:0px;top:868.7px;width:1600px;height:26.3px;background:#e6e6e6;"></div>
<div style="position:absolute;left:0px;top:868.7px;width:1600px;height:1px;background:#c6c6c6;"></div>
<div style="position:absolute;left:0px;top:892.3px;width:1600px;height:2.7px;background:#f0f0f0;"></div>
<div style="position:absolute;left:0px;top:892.3px;width:1600px;height:0.7px;background:#d0d0d0;"></div>
<svg style="position:absolute;left:23.5px;top:877px;overflow:visible" width="6" height="10" viewBox="0 0 6 10"><polyline points="5,1 1,5 5,9" fill="none" stroke="#b8b8b8" stroke-width="1.3"/></svg>
<svg style="position:absolute;left:47px;top:877px;overflow:visible" width="6" height="10" viewBox="0 0 6 10"><polyline points="1,1 5,5 1,9" fill="none" stroke="#b8b8b8" stroke-width="1.3"/></svg>
<div style="position:absolute;left:86.4px;top:868.7px;width:58.1px;height:20.8px;background:#ffffff;border-left:1px solid #c6c6c6;border-right:1px solid #c6c6c6"></div>
<div style="position:absolute;left:86.4px;top:887.5px;width:58.1px;height:2px;background:#217346;"></div>
<div style="position:absolute;white-space:pre;line-height:0;font-size:14px;color:#217346;font-weight:bold;top:877.55px;left:-884.7px;width:2000px;text-align:center;transform:scaleX(0.97);transform-origin:50% 0;">Hoja1</div>
<svg style="position:absolute;left:172.5px;top:871.5px;overflow:visible" width="17" height="17" viewBox="0 0 17 17"><circle cx="8.5" cy="8.5" r="7.6" fill="none" stroke="#777" stroke-width="1.1"/><path d="M8.5 4.3 V12.7 M4.3 8.5 H12.7" stroke="#666" stroke-width="1.5"/></svg>
<div style="position:absolute;left:959px;top:875.7px;width:1.6px;height:1.6px;background:#aaa;"></div>
<div style="position:absolute;left:959px;top:879.2px;width:1.6px;height:1.6px;background:#aaa;"></div>
<div style="position:absolute;left:959px;top:882.7px;width:1.6px;height:1.6px;background:#aaa;"></div>
<div style="position:absolute;left:973.5px;top:872.8px;width:607.1px;height:15px;background:#e8e8e8;border:1px solid #c6c6c6"></div>
<div style="position:absolute;left:973.5px;top:872.8px;width:15.9px;height:15px;background:#fff;border:1px solid #b0b0b0"></div>
<svg style="position:absolute;left:977.5px;top:876.5px;overflow:visible" width="8" height="8" viewBox="0 0 8 8"><polygon points="6.5,0.5 6.5,7.5 1.5,4" fill="#222"/></svg>
<div style="position:absolute;left:989px;top:872.8px;width:543px;height:15px;background:#fff;border:1px solid #b8b8b8"></div>
<div style="position:absolute;left:1565px;top:872.8px;width:15.6px;height:15px;background:#fff;border:1px solid #b0b0b0"></div>
<svg style="position:absolute;left:1569.5px;top:876.5px;overflow:visible" width="8" height="8" viewBox="0 0 8 8"><polygon points="1.5,0.5 1.5,7.5 6.5,4" fill="#222"/></svg>
<div style="position:absolute;left:1290px;top:893px;width:50px;height:2px;background:#c8c8c8;"></div>
<div style="position:absolute;left:1580.5px;top:172px;width:19.5px;height:696.7px;background:#e8e8e8;"></div>
<div style="position:absolute;left:1583.4px;top:174.4px;width:15.1px;height:15.2px;background:#fff;border:1px solid #b0b0b0"></div>
<svg style="position:absolute;left:1587px;top:178.5px;overflow:visible" width="9" height="6" viewBox="0 0 9 6"><polygon points="0.5,5 8.5,5 4.5,0.8" fill="#222"/></svg>
<div style="position:absolute;left:1583.4px;top:190.6px;width:15.1px;height:631.1px;background:#fff;border:1px solid #b8b8b8"></div>
<div style="position:absolute;left:1583.4px;top:853.5px;width:15.1px;height:15px;background:#fff;border:1px solid #b0b0b0"></div>
<svg style="position:absolute;left:1587px;top:859px;overflow:visible" width="9" height="6" viewBox="0 0 9 6"><polygon points="0.5,0.8 8.5,0.8 4.5,5" fill="#222"/></svg>
</body></html>
